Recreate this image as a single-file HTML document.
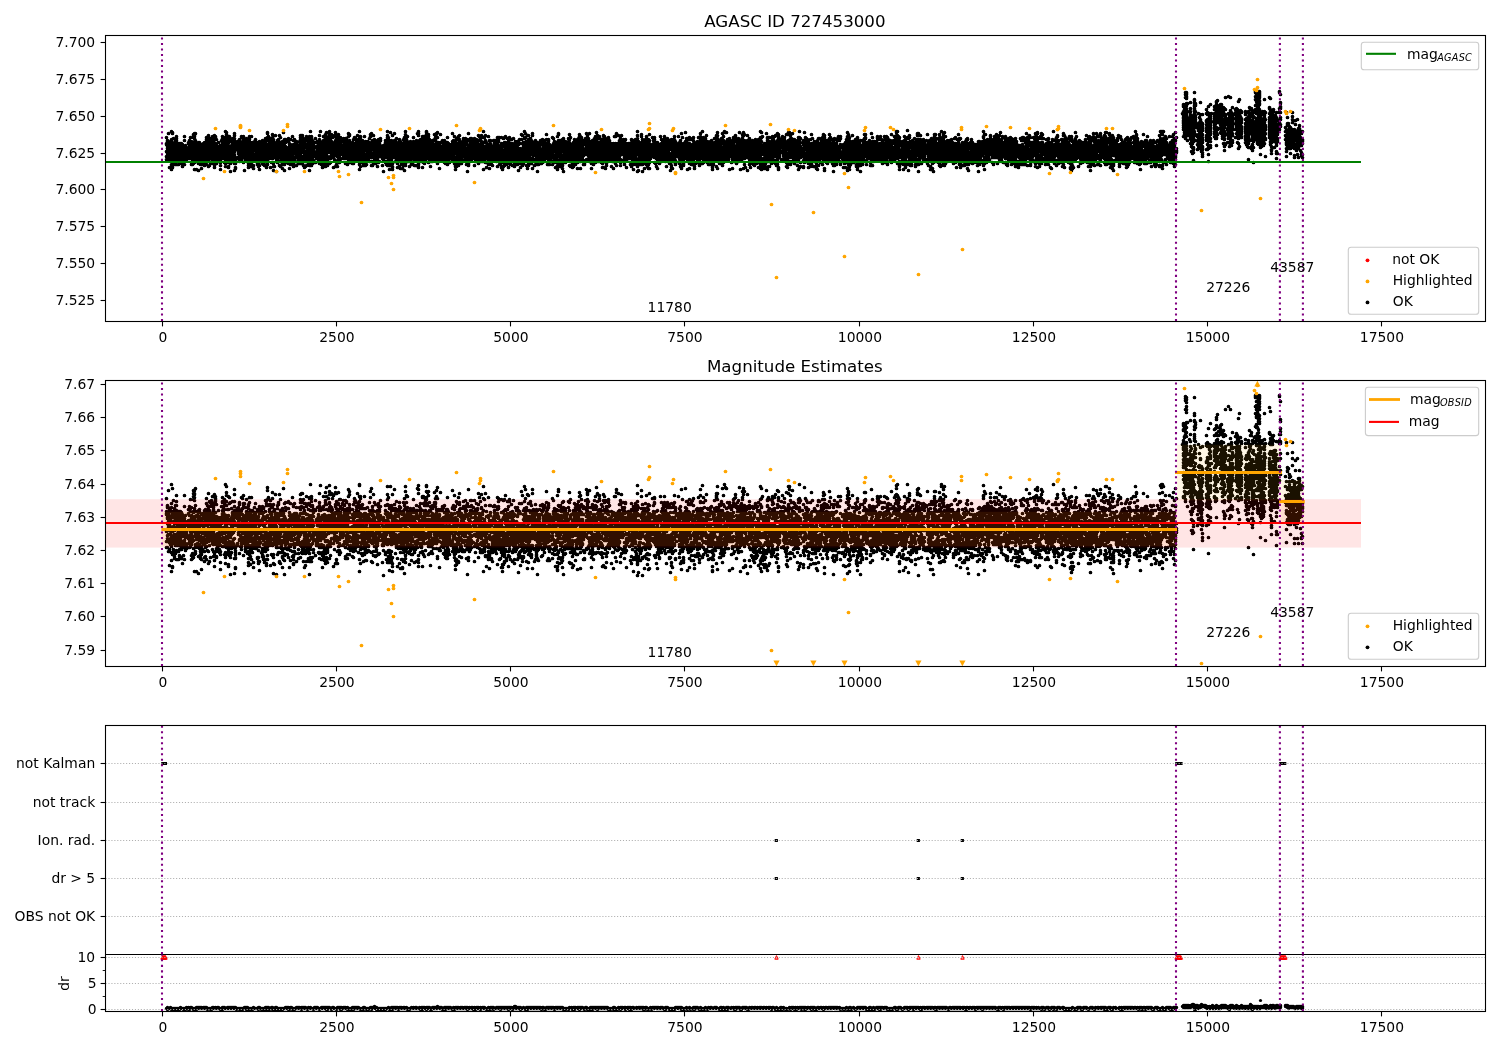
<!DOCTYPE html>
<html><head><meta charset="utf-8"><title>AGASC ID 727453000</title>
<style>html,body{margin:0;padding:0;background:#fff}svg{display:block}</style></head>
<body>
<svg width="1500" height="1050" viewBox="0 0 1500 1050" font-family="DejaVu Sans, Liberation Sans, sans-serif" font-size="13.89px" fill="#000" style="will-change:transform">
<rect width="1500" height="1050" fill="#fff"/>
<defs><clipPath id="c1"><rect x="105.5" y="35.5" width="1380.0" height="286.0"/></clipPath><clipPath id="c2"><rect x="105.5" y="380.5" width="1380.0" height="286.0"/></clipPath><clipPath id="c3"><rect x="105.5" y="725.5" width="1380.0" height="286.0"/></clipPath></defs>
<g clip-path="url(#c1)">
<path transform="translate(.5 .5)" d="m166 137h0m0 6h0m0 1h0m0 7h0m0 5h0m0 3h0m1-19h0m0 1h0m0 4h0m0 1h0m0 2h0m0 5h0m0 2h0m0 4h0m1-26h0m0 8h0m0 3h0m0 2h0m0 4h0m0 3h0m0 3h0m0 4h0m1-14h0m0 1h0m0 1h0m0 7h0m0 5h0m0 7h0m1-24h0m0 3h0m0 3h0m0 1h0m0 1h0m0 1h0m0 3h0m0 2h0m1-26h0m0 8h0m0 2h0m0 4h0m0 12h0m0 1h0m0 3h0m0 3h0m0 5h0m1-37h0m0 1h0m0 10h0m0 1h0m0 12h0m0 5h0m0 1h0m0 5h0m1-29h0m0 9h0m0 2h0m0 1h0m0 3h0m0 4h0m0 3h0m1-18h0m0 1h0m0 2h0m0 2h0m0 1h0m0 3h0m0 2h0m0 10h0m0 1h0m1-24h0m0 6h0m0 8h0m0 7h0m1-25h0m0 2h0m0 2h0m0 2h0m0 13h0m0 1h0m0 2h0m0 2h0m0 4h0m1-21h0m0 2h0m0 4h0m0 3h0m0 3h0m0 3h0m1-15h0m0 1h0m0 3h0m0 1h0m0 7h0m0 9h0m1-21h0m0 11h0m0 3h0m0 3h0m0 2h0m0 1h0m1-20h0m0 1h0m0 1h0m0 1h0m0 5h0m0 3h0m0 1h0m1-12h0m0 4h0m0 1h0m0 1h0m0 3h0m0 6h0m0 1h0m0 1h0m0 3h0m1-19h0m0 1h0m0 3h0m0 1h0m0 1h0m0 1h0m0 3h0m0 12h0m1-17h0m0 2h0m0 6h0m0 2h0m0 3h0m1-26h0m0 4h0m0 6h0m0 7h0m0 3h0m0 8h0m1-19h0m0 2h0m0 2h0m0 1h0m0 4h0m0 3h0m0 1h0m0 2h0m1-12h0m0 1h0m0 2h0m0 1h0m0 1h0m0 5h0m0 1h0m2-17h0m0 1h0m0 4h0m0 2h0m0 1h0m0 4h0m0 1h0m1-15h0m0 2h0m0 4h0m0 3h0m0 4h0m0 1h0m0 1h0m0 3h0m1-21h0m0 6h0m0 6h0m0 1h0m0 1h0m0 3h0m0 4h0m1-17h0m0 3h0m0 6h0m0 7h0m0 5h0m0 2h0m1-18h0m0 2h0m0 3h0m0 5h0m0 5h0m0 3h0m1-30h0m0 1h0m0 1h0m0 1h0m0 6h0m0 11h0m0 5h0m0 4h0m1-30h0m0 2h0m0 1h0m0 2h0m0 3h0m0 4h0m0 1h0m0 1h0m0 7h0m0 8h0m0 7h0m1-36h0m0 7h0m0 5h0m0 3h0m0 2h0m0 3h0m0 4h0m0 1h0m0 3h0m1-18h0m0 6h0m0 1h0m0 8h0m0 11h0m1-23h0m0 2h0m0 1h0m0 3h0m0 2h0m1-12h0m0 11h0m0 2h0m0 4h0m0 4h0m0 7h0m1-28h0m0 3h0m0 1h0m0 2h0m0 6h0m0 3h0m1-6h0m0 3h0m0 1h0m0 5h0m0 3h0m0 1h0m1-20h0m0 2h0m0 3h0m0 9h0m0 4h0m0 2h0m0 4h0m1-24h0m0 2h0m0 6h0m0 2h0m0 6h0m1-17h0m0 2h0m0 4h0m0 1h0m0 4h0m0 2h0m1-14h0m0 9h0m0 4h0m0 1h0m0 1h0m0 3h0m0 3h0m0 2h0m1-23h0m0 1h0m0 5h0m0 4h0m0 1h0m0 6h0m0 4h0m1-26h0m0 2h0m0 5h0m0 3h0m0 1h0m0 5h0m0 2h0m0 3h0m0 6h0m1-24h0m0 3h0m0 3h0m0 3h0m0 6h0m0 5h0m1-25h0m0 10h0m0 5h0m0 2h0m0 8h0m0 6h0m1-28h0m0 3h0m0 3h0m0 8h0m0 2h0m0 4h0m0 7h0m1-27h0m0 5h0m0 5h0m0 3h0m0 4h0m0 8h0m1-25h0m0 2h0m0 6h0m0 2h0m0 1h0m0 1h0m0 5h0m1-19h0m0 13h0m0 1h0m0 1h0m0 1h0m0 5h0m0 3h0m1-19h0m0 2h0m0 1h0m0 3h0m0 6h0m0 1h0m0 3h0m0 3h0m0 3h0m1-28h0m0 3h0m0 5h0m0 5h0m0 2h0m0 5h0m0 7h0m0 3h0m0 2h0m1-31h0m0 1h0m0 6h0m0 2h0m0 3h0m0 1h0m0 6h0m0 6h0m1-22h0m0 6h0m0 5h0m0 3h0m0 1h0m0 1h0m0 2h0m0 2h0m0 3h0m0 1h0m1-17h0m0 7h0m0 1h0m0 4h0m1-16h0m0 4h0m0 2h0m0 2h0m0 3h0m1-6h0m0 2h0m0 3h0m0 4h0m0 3h0m0 2h0m1-16h0m0 3h0m0 10h0m0 3h0m0 1h0m0 3h0m0 4h0m1-29h0m0 8h0m0 4h0m0 1h0m1-17h0m0 2h0m0 4h0m0 1h0m0 2h0m0 5h0m0 6h0m0 2h0m1-17h0m0 1h0m0 6h0m0 2h0m0 2h0m0 5h0m0 1h0m1-21h0m0 1h0m0 4h0m0 2h0m0 2h0m0 9h0m0 7h0m1-31h0m0 13h0m0 2h0m0 2h0m0 9h0m0 4h0m0 2h0m0 3h0m1-34h0m0 2h0m0 2h0m0 2h0m0 2h0m0 5h0m0 5h0m0 2h0m0 6h0m0 4h0m1-20h0m0 4h0m0 9h0m0 2h0m0 5h0m1-26h0m0 6h0m0 3h0m0 3h0m0 2h0m0 9h0m0 7h0m0 1h0m1-31h0m0 3h0m0 7h0m0 5h0m0 3h0m0 4h0m0 3h0m0 1h0m1-23h0m0 8h0m0 1h0m0 9h0m0 5h0m0 1h0m0 8h0m1-30h0m0 4h0m0 3h0m0 4h0m0 1h0m0 5h0m0 3h0m1-23h0m0 5h0m0 3h0m0 3h0m0 7h0m1-13h0m0 1h0m0 3h0m0 2h0m0 2h0m0 6h0m0 1h0m0 1h0m1-26h0m0 2h0m0 3h0m0 2h0m0 2h0m0 1h0m0 4h0m0 4h0m0 3h0m0 1h0m0 3h0m0 5h0m0 7h0m1-28h0m0 3h0m0 3h0m0 1h0m0 10h0m0 1h0m0 1h0m0 1h0m0 1h0m0 4h0m0 1h0m2-27h0m0 3h0m0 4h0m0 9h0m0 1h0m1-17h0m0 3h0m0 1h0m0 6h0m0 1h0m0 1h0m1-14h0m0 7h0m0 4h0m0 1h0m0 4h0m0 1h0m0 5h0m1-15h0m0 2h0m0 5h0m0 2h0m0 3h0m1-22h0m0 6h0m0 2h0m0 13h0m0 2h0m1-22h0m0 4h0m0 3h0m0 3h0m0 3h0m0 1h0m0 1h0m0 3h0m0 1h0m1-20h0m0 3h0m0 1h0m0 5h0m0 1h0m0 11h0m0 5h0m1-23h0m0 2h0m0 10h0m0 3h0m0 1h0m0 1h0m0 14h0m1-29h0m0 3h0m0 2h0m0 3h0m0 6h0m0 3h0m0 1h0m0 1h0m1-22h0m0 5h0m0 4h0m0 3h0m0 1h0m0 2h0m0 1h0m0 3h0m0 1h0m1-12h0m0 4h0m0 5h0m0 6h0m1-20h0m0 2h0m0 9h0m0 7h0m0 2h0m0 2h0m0 2h0m0 2h0m1-31h0m0 3h0m0 7h0m0 2h0m0 2h0m0 1h0m0 4h0m0 1h0m1-14h0m0 6h0m0 1h0m0 2h0m0 4h0m0 4h0m0 4h0m0 3h0m1-30h0m0 7h0m0 3h0m0 6h0m0 2h0m0 6h0m0 4h0m1-22h0m0 3h0m0 1h0m0 3h0m0 3h0m0 4h0m0 1h0m0 1h0m0 1h0m0 2h0m1-17h0m0 4h0m0 2h0m0 6h0m0 2h0m0 7h0m0 3h0m1-27h0m0 5h0m0 3h0m0 1h0m0 4h0m0 4h0m1-19h0m0 5h0m0 10h0m0 5h0m1-13h0m0 2h0m0 3h0m0 1h0m0 3h0m0 4h0m1-17h0m0 1h0m0 4h0m0 4h0m0 2h0m0 3h0m0 2h0m0 5h0m0 1h0m1-21h0m0 2h0m0 5h0m0 5h0m0 5h0m0 3h0m0 3h0m1-25h0m0 3h0m0 2h0m0 5h0m0 1h0m0 4h0m0 1h0m0 1h0m0 7h0m0 4h0m1-27h0m0 7h0m0 7h0m1-2h0m0 7h0m1-21h0m0 4h0m0 2h0m0 1h0m0 1h0m0 3h0m0 1h0m0 7h0m0 3h0m0 1h0m1-22h0m0 2h0m0 2h0m0 1h0m0 3h0m0 2h0m0 4h0m0 1h0m0 1h0m0 6h0m0 1h0m1-19h0m0 3h0m0 3h0m0 3h0m0 3h0m0 2h0m0 6h0m1-27h0m0 5h0m0 3h0m0 2h0m0 8h0m0 4h0m1-22h0m0 1h0m0 1h0m0 10h0m0 1h0m0 13h0m0 2h0m0 1h0m1-35h0m0 1h0m0 4h0m0 7h0m0 1h0m0 2h0m0 6h0m0 2h0m0 3h0m0 2h0m0 2h0m0 2h0m1-28h0m0 1h0m0 3h0m0 15h0m0 1h0m1-16h0m0 2h0m0 1h0m0 3h0m0 1h0m0 2h0m0 3h0m0 2h0m0 4h0m1-20h0m0 10h0m0 2h0m0 2h0m0 4h0m0 11h0m1-24h0m0 3h0m0 2h0m0 2h0m0 12h0m1-28h0m0 3h0m0 3h0m0 6h0m0 1h0m0 2h0m0 1h0m0 3h0m0 2h0m0 2h0m0 1h0m0 4h0m1-23h0m0 4h0m0 19h0m0 1h0m0 3h0m0 4h0m1-28h0m0 1h0m0 3h0m0 1h0m0 3h0m0 1h0m0 3h0m0 2h0m0 1h0m0 9h0m1-31h0m0 9h0m0 11h0m1-11h0m0 3h0m0 2h0m0 2h0m0 7h0m0 1h0m0 12h0m1-31h0m0 1h0m0 3h0m0 1h0m0 6h0m0 3h0m0 2h0m0 3h0m0 3h0m1-23h0m0 1h0m0 5h0m0 2h0m0 7h0m0 2h0m0 5h0m1-26h0m0 9h0m0 4h0m0 4h0m0 2h0m0 3h0m0 4h0m0 4h0m1-28h0m0 5h0m0 1h0m0 6h0m0 1h0m0 2h0m0 1h0m0 1h0m0 12h0m1-19h0m0 5h0m0 3h0m0 3h0m0 1h0m0 2h0m1-20h0m0 1h0m0 3h0m0 1h0m0 2h0m0 8h0m0 4h0m0 2h0m0 1h0m0 5h0m1-36h0m0 12h0m0 2h0m0 2h0m0 2h0m0 1h0m0 3h0m0 2h0m0 8h0m1-25h0m0 6h0m0 9h0m0 1h0m0 4h0m0 3h0m0 2h0m0 6h0m1-31h0m0 2h0m0 1h0m0 4h0m0 2h0m0 3h0m0 5h0m1-15h0m0 7h0m0 3h0m0 11h0m1-21h0m0 9h0m0 1h0m0 2h0m0 3h0m0 3h0m0 1h0m1-22h0m0 3h0m0 6h0m0 1h0m0 2h0m0 1h0m0 4h0m0 8h0m1-20h0m0 1h0m0 2h0m0 22h0m1-29h0m0 5h0m0 5h0m0 3h0m0 1h0m0 1h0m0 4h0m0 2h0m0 4h0m1-19h0m0 4h0m0 5h0m0 1h0m1-19h0m0 11h0m0 3h0m0 2h0m0 3h0m0 1h0m0 1h0m0 3h0m0 3h0m1-23h0m0 4h0m0 7h0m0 9h0m0 2h0m0 1h0m0 1h0m0 2h0m1-27h0m0 5h0m0 5h0m0 4h0m0 4h0m0 2h0m1-16h0m0 1h0m0 2h0m0 2h0m0 5h0m0 8h0m1-20h0m0 2h0m0 1h0m0 5h0m0 1h0m0 1h0m0 4h0m0 2h0m0 8h0m1-20h0m0 1h0m0 4h0m0 1h0m0 3h0m0 1h0m1-10h0m0 6h0m0 4h0m0 2h0m0 2h0m0 2h0m0 2h0m1-22h0m0 4h0m0 1h0m0 3h0m0 3h0m0 1h0m0 1h0m0 2h0m0 1h0m1-22h0m0 2h0m0 2h0m0 3h0m0 1h0m0 4h0m0 4h0m0 2h0m0 5h0m0 5h0m1-28h0m0 6h0m0 7h0m0 2h0m0 2h0m0 9h0m1-26h0m0 10h0m0 11h0m0 1h0m0 2h0m0 3h0m1-24h0m0 5h0m0 6h0m0 3h0m0 6h0m0 1h0m0 6h0m1-26h0m0 3h0m0 4h0m0 6h0m0 3h0m0 1h0m0 1h0m0 10h0m1-28h0m0 5h0m0 2h0m0 1h0m0 4h0m0 1h0m0 1h0m0 1h0m0 7h0m0 5h0m1-30h0m0 4h0m0 4h0m0 2h0m0 8h0m0 6h0m0 5h0m1-25h0m0 4h0m0 2h0m0 3h0m0 1h0m0 4h0m0 3h0m0 4h0m1-22h0m0 3h0m0 7h0m0 4h0m0 4h0m0 2h0m0 1h0m0 4h0m1-28h0m0 4h0m0 5h0m0 6h0m0 4h0m0 6h0m0 4h0m0 5h0m1-39h0m0 9h0m0 5h0m0 2h0m0 3h0m0 1h0m0 7h0m0 1h0m1-23h0m0 1h0m0 1h0m0 3h0m0 3h0m0 2h0m0 8h0m0 3h0m0 6h0m0 2h0m1-25h0m0 5h0m0 2h0m0 3h0m0 4h0m0 3h0m0 6h0m1-21h0m0 1h0m0 2h0m0 3h0m0 1h0m0 3h0m0 3h0m0 1h0m0 4h0m0 1h0m1-19h0m1-4h0m0 4h0m0 20h0m1-16h0m0 1h0m0 4h0m0 1h0m0 1h0m0 2h0m0 3h0m1-17h0m0 5h0m0 1h0m0 1h0m0 1h0m0 1h0m1-9h0m0 3h0m0 10h0m0 3h0m0 4h0m1-26h0m0 4h0m0 1h0m0 1h0m0 1h0m0 11h0m0 2h0m0 4h0m0 2h0m0 2h0m1-32h0m0 10h0m0 4h0m0 1h0m0 1h0m0 2h0m0 2h0m0 4h0m1-4h0m0 2h0m0 2h0m0 3h0m0 1h0m0 5h0m1-20h0m0 4h0m0 4h0m0 9h0m0 1h0m0 5h0m1-31h0m0 4h0m0 2h0m0 3h0m0 3h0m0 1h0m0 1h0m0 5h0m0 3h0m1-5h0m0 5h0m0 1h0m0 5h0m1-30h0m0 4h0m0 6h0m0 4h0m0 3h0m0 10h0m0 5h0m1-34h0m0 4h0m0 3h0m0 3h0m0 3h0m0 2h0m0 4h0m0 2h0m0 3h0m0 7h0m1-16h0m0 2h0m0 1h0m0 1h0m0 5h0m0 2h0m0 2h0m0 1h0m0 4h0m1-28h0m0 5h0m0 8h0m0 1h0m0 1h0m0 6h0m1-27h0m0 3h0m0 1h0m0 3h0m0 3h0m0 3h0m0 19h0m1-23h0m0 5h0m0 3h0m0 2h0m0 2h0m0 4h0m0 1h0m0 1h0m0 4h0m1-28h0m0 1h0m0 6h0m0 2h0m0 8h0m0 1h0m0 3h0m1-20h0m0 2h0m0 5h0m0 9h0m0 1h0m1-16h0m0 8h0m0 1h0m0 1h0m0 3h0m0 1h0m0 1h0m0 1h0m0 5h0m0 10h0m1-22h0m0 2h0m0 1h0m0 6h0m0 1h0m0 4h0m1-27h0m0 2h0m0 1h0m0 5h0m0 3h0m0 3h0m0 3h0m0 2h0m0 4h0m0 11h0m1-31h0m0 3h0m0 3h0m0 6h0m0 7h0m0 10h0m1-25h0m0 1h0m0 2h0m0 1h0m0 8h0m0 4h0m0 1h0m0 4h0m0 6h0m1-32h0m0 8h0m0 2h0m0 2h0m0 4h0m0 4h0m0 4h0m0 2h0m1-23h0m0 11h0m0 9h0m0 5h0m1-25h0m0 3h0m0 3h0m0 2h0m0 2h0m0 2h0m0 3h0m0 2h0m0 4h0m0 3h0m1-20h0m0 5h0m0 4h0m0 3h0m0 1h0m1-13h0m0 4h0m0 8h0m0 1h0m1-16h0m0 9h0m0 1h0m0 4h0m0 5h0m0 1h0m1-18h0m0 3h0m0 4h0m0 1h0m0 2h0m0 3h0m0 4h0m1-19h0m0 8h0m0 10h0m0 2h0m0 5h0m1-25h0m0 1h0m0 4h0m0 5h0m0 2h0m0 1h0m0 3h0m1-13h0m0 9h0m0 4h0m0 1h0m0 2h0m0 5h0m0 2h0m1-31h0m0 3h0m0 6h0m0 3h0m0 1h0m0 10h0m0 3h0m1-25h0m0 1h0m0 5h0m0 3h0m0 2h0m0 2h0m0 5h0m0 10h0m1-12h0m0 4h0m0 2h0m0 2h0m0 2h0m2-18h0m0 2h0m0 3h0m0 4h0m0 1h0m0 3h0m0 1h0m0 3h0m0 4h0m1-24h0m0 9h0m0 4h0m0 8h0m0 3h0m1-26h0m0 1h0m0 5h0m0 2h0m0 11h0m0 3h0m1-21h0m0 5h0m0 2h0m0 3h0m0 3h0m0 2h0m0 2h0m0 5h0m1-21h0m0 1h0m0 4h0m0 4h0m0 1h0m0 1h0m0 4h0m0 2h0m0 2h0m1-23h0m0 16h0m0 5h0m0 1h0m0 1h0m1-15h0m0 2h0m0 5h0m0 2h0m0 9h0m1-30h0m0 5h0m0 2h0m0 3h0m0 4h0m0 2h0m0 2h0m0 1h0m0 4h0m0 2h0m0 8h0m0 5h0m1-33h0m0 1h0m0 3h0m0 8h0m0 6h0m0 4h0m0 2h0m0 6h0m1-26h0m0 4h0m0 7h0m0 1h0m0 1h0m0 4h0m0 4h0m1-21h0m0 1h0m0 4h0m0 2h0m0 15h0m1-17h0m0 4h0m0 3h0m0 2h0m0 5h0m0 6h0m1-29h0m0 8h0m0 2h0m0 1h0m0 9h0m0 1h0m0 5h0m1-21h0m0 3h0m0 6h0m0 4h0m0 2h0m0 4h0m0 5h0m1-20h0m0 1h0m0 2h0m0 2h0m0 7h0m0 3h0m0 1h0m0 3h0m1-23h0m0 11h0m1-8h0m0 3h0m0 5h0m0 1h0m0 1h0m0 1h0m0 3h0m0 2h0m1-22h0m0 4h0m0 2h0m0 6h0m0 1h0m0 4h0m0 6h0m1-27h0m0 2h0m0 7h0m0 3h0m0 3h0m0 2h0m0 1h0m0 3h0m1-22h0m0 16h0m0 8h0m0 4h0m0 4h0m1-25h0m0 2h0m0 2h0m0 4h0m0 1h0m0 4h0m0 2h0m0 2h0m0 8h0m1-30h0m0 10h0m0 9h0m0 2h0m0 5h0m0 1h0m1-23h0m0 4h0m0 4h0m0 4h0m0 5h0m0 2h0m1-18h0m0 9h0m0 5h0m0 9h0m1-18h0m0 3h0m0 1h0m0 3h0m0 1h0m0 3h0m0 3h0m0 1h0m0 2h0m1-20h0m0 15h0m0 1h0m0 8h0m1-27h0m0 1h0m0 4h0m0 2h0m0 3h0m0 5h0m0 8h0m1-20h0m0 1h0m0 2h0m0 1h0m0 1h0m0 3h0m0 1h0m0 1h0m0 1h0m0 3h0m0 5h0m1-23h0m0 2h0m0 5h0m0 9h0m2-8h0m0 3h0m0 2h0m0 2h0m0 4h0m0 1h0m0 7h0m1-20h0m0 5h0m0 3h0m0 1h0m0 2h0m0 4h0m0 11h0m1-22h0m0 2h0m0 1h0m0 2h0m0 2h0m0 1h0m1-17h0m0 2h0m0 1h0m0 3h0m0 3h0m0 2h0m0 2h0m0 4h0m0 4h0m0 1h0m1-19h0m0 9h0m0 1h0m0 8h0m0 3h0m1-33h0m0 4h0m0 2h0m0 3h0m0 3h0m0 2h0m0 5h0m0 6h0m0 1h0m0 8h0m1-28h0m0 3h0m0 7h0m0 1h0m0 2h0m0 2h0m0 3h0m0 2h0m0 3h0m0 4h0m1-24h0m0 1h0m0 3h0m0 1h0m0 11h0m0 4h0m0 1h0m0 4h0m0 4h0m1-37h0m0 16h0m0 1h0m0 1h0m0 2h0m0 2h0m0 8h0m1-22h0m0 5h0m0 9h0m0 1h0m0 3h0m0 2h0m0 3h0m0 1h0m0 1h0m1-30h0m0 7h0m0 3h0m0 3h0m0 5h0m0 10h0m0 3h0m0 1h0m0 2h0m1-28h0m0 4h0m0 1h0m0 5h0m0 5h0m1-23h0m0 7h0m0 2h0m0 6h0m0 2h0m0 6h0m0 1h0m1-16h0m0 4h0m0 8h0m0 8h0m1-23h0m0 4h0m0 4h0m0 1h0m0 1h0m0 2h0m0 3h0m0 2h0m0 3h0m0 1h0m1-15h0m0 4h0m0 1h0m0 2h0m0 3h0m0 5h0m0 4h0m0 4h0m1-25h0m0 2h0m0 1h0m0 2h0m0 1h0m0 6h0m0 2h0m0 3h0m1-20h0m0 1h0m0 4h0m0 4h0m0 5h0m0 3h0m0 2h0m0 8h0m1-25h0m0 5h0m0 4h0m0 1h0m0 3h0m0 2h0m0 2h0m0 3h0m0 7h0m1-21h0m0 4h0m0 2h0m0 2h0m0 9h0m1-21h0m0 1h0m0 7h0m0 1h0m0 1h0m0 11h0m0 4h0m1-29h0m0 4h0m0 5h0m0 4h0m0 4h0m0 3h0m0 2h0m0 4h0m1-28h0m0 5h0m0 3h0m0 3h0m0 5h0m0 12h0m0 5h0m1-39h0m0 3h0m0 7h0m0 3h0m0 4h0m0 2h0m0 2h0m0 3h0m0 3h0m0 4h0m0 1h0m0 2h0m1-29h0m0 3h0m0 5h0m0 2h0m0 7h0m0 6h0m0 1h0m1-24h0m0 5h0m0 1h0m0 1h0m0 2h0m0 4h0m0 6h0m0 3h0m0 3h0m1-14h0m0 2h0m0 3h0m0 1h0m1-10h0m0 3h0m0 2h0m0 4h0m0 3h0m0 3h0m0 2h0m0 1h0m0 5h0m1-25h0m0 2h0m0 1h0m0 1h0m0 1h0m0 6h0m0 1h0m0 2h0m0 5h0m1-17h0m0 6h0m0 7h0m0 6h0m0 2h0m1-22h0m0 3h0m0 3h0m0 1h0m0 2h0m0 1h0m0 1h0m0 2h0m0 3h0m0 4h0m1-25h0m0 4h0m0 2h0m1-1h0m0 4h0m0 3h0m0 2h0m0 9h0m0 1h0m0 4h0m1-16h0m0 5h0m0 2h0m0 1h0m0 3h0m1-20h0m0 2h0m0 1h0m0 5h0m0 3h0m0 1h0m0 6h0m0 7h0m1-32h0m0 12h0m0 5h0m0 1h0m0 3h0m0 5h0m1-28h0m0 2h0m0 2h0m0 10h0m0 5h0m0 7h0m0 5h0m0 2h0m0 2h0m0 1h0m1-27h0m0 2h0m0 6h0m0 3h0m0 1h0m0 1h0m0 2h0m0 2h0m1-18h0m0 2h0m0 4h0m0 5h0m0 1h0m0 2h0m0 1h0m0 4h0m0 3h0m1-19h0m0 6h0m0 3h0m0 1h0m0 6h0m1-22h0m0 9h0m0 1h0m0 4h0m0 4h0m0 3h0m0 3h0m0 7h0m1-31h0m0 3h0m0 6h0m0 2h0m0 1h0m0 5h0m0 2h0m0 7h0m1-26h0m0 4h0m0 3h0m0 1h0m0 4h0m0 9h0m0 6h0m1-26h0m0 2h0m0 3h0m0 6h0m0 1h0m0 3h0m0 1h0m0 2h0m0 5h0m1-29h0m0 1h0m0 2h0m0 6h0m0 7h0m0 1h0m1-9h0m0 1h0m0 3h0m0 2h0m0 3h0m0 8h0m0 1h0m1-23h0m0 2h0m0 8h0m0 7h0m0 1h0m0 2h0m0 4h0m0 4h0m1-23h0m0 3h0m0 4h0m0 3h0m0 2h0m0 1h0m0 3h0m0 2h0m0 1h0m0 3h0m1-18h0m0 9h0m0 1h0m0 5h0m0 8h0m1-25h0m0 4h0m0 2h0m0 1h0m0 1h0m0 1h0m0 7h0m0 4h0m1-21h0m0 1h0m0 4h0m0 9h0m0 7h0m1-17h0m0 1h0m0 1h0m0 4h0m0 1h0m0 4h0m0 1h0m0 3h0m1-25h0m0 5h0m0 1h0m0 4h0m0 4h0m0 6h0m0 3h0m1-20h0m0 2h0m0 1h0m0 4h0m0 6h0m0 2h0m1-19h0m0 3h0m0 6h0m0 5h0m0 10h0m0 2h0m1-27h0m0 5h0m0 5h0m0 2h0m0 1h0m0 5h0m0 5h0m0 8h0m1-21h0m0 5h0m0 3h0m0 1h0m0 1h0m1-8h0m0 2h0m0 5h0m0 2h0m0 3h0m0 3h0m0 1h0m0 8h0m1-34h0m0 8h0m0 4h0m0 1h0m0 1h0m0 2h0m0 3h0m0 1h0m0 6h0m1-14h0m0 2h0m1-8h0m0 1h0m0 1h0m0 5h0m0 5h0m0 2h0m0 3h0m1-16h0m0 4h0m0 5h0m0 9h0m0 2h0m1-21h0m0 3h0m0 4h0m0 2h0m0 5h0m0 2h0m0 1h0m0 5h0m1-19h0m0 9h0m0 8h0m0 1h0m0 2h0m1-21h0m0 2h0m0 2h0m0 3h0m0 1h0m0 3h0m0 3h0m0 5h0m1-24h0m0 5h0m0 1h0m0 9h0m0 7h0m0 2h0m0 3h0m1-21h0m0 11h0m0 1h0m0 4h0m0 1h0m1-16h0m0 2h0m0 1h0m0 2h0m0 2h0m0 1h0m0 2h0m0 1h0m0 1h0m0 1h0m0 5h0m2-18h0m0 5h0m0 3h0m0 6h0m1-25h0m0 8h0m0 4h0m0 2h0m0 8h0m0 1h0m0 4h0m1-20h0m0 7h0m0 3h0m0 1h0m0 2h0m0 1h0m0 1h0m0 4h0m0 1h0m1-24h0m0 7h0m0 3h0m0 12h0m0 3h0m0 1h0m0 1h0m1-22h0m0 4h0m0 3h0m0 3h0m0 2h0m0 4h0m0 7h0m0 1h0m0 1h0m0 3h0m1-31h0m0 19h0m0 2h0m0 2h0m0 3h0m0 1h0m0 1h0m1-27h0m0 4h0m0 4h0m0 5h0m0 1h0m0 1h0m0 1h0m1-19h0m0 3h0m0 5h0m0 4h0m0 1h0m0 8h0m0 3h0m0 5h0m1-30h0m0 4h0m0 1h0m0 2h0m0 1h0m0 10h0m0 7h0m0 3h0m1-22h0m0 4h0m0 4h0m0 3h0m0 3h0m0 4h0m0 1h0m1-16h0m0 3h0m0 11h0m0 5h0m1-15h0m0 2h0m0 5h0m0 1h0m0 4h0m1-22h0m0 2h0m0 1h0m0 3h0m0 2h0m0 1h0m0 1h0m0 4h0m0 4h0m0 4h0m1-19h0m0 5h0m0 3h0m0 1h0m0 4h0m0 6h0m1-22h0m0 4h0m0 6h0m0 2h0m0 3h0m0 1h0m0 2h0m0 2h0m1-18h0m0 1h0m0 1h0m0 2h0m0 4h0m0 2h0m0 2h0m0 8h0m0 4h0m1-25h0m0 5h0m0 4h0m0 1h0m0 1h0m0 6h0m0 2h0m0 13h0m1-38h0m0 7h0m0 6h0m0 6h0m0 3h0m0 3h0m0 5h0m0 1h0m0 1h0m1-21h0m0 3h0m0 11h0m0 2h0m1-22h0m0 4h0m0 2h0m0 3h0m0 3h0m0 3h0m0 1h0m0 3h0m0 1h0m0 2h0m1-22h0m0 2h0m0 5h0m0 6h0m0 2h0m0 1h0m0 2h0m0 1h0m0 2h0m1-17h0m1-1h0m0 7h0m0 1h0m0 1h0m0 6h0m1-18h0m0 7h0m0 5h0m0 1h0m0 2h0m0 5h0m0 7h0m1-23h0m0 1h0m0 5h0m0 1h0m0 1h0m0 3h0m0 8h0m1-22h0m0 4h0m0 4h0m0 4h0m0 3h0m0 3h0m1-15h0m0 4h0m0 6h0m0 4h0m0 3h0m1-24h0m0 5h0m0 8h0m0 3h0m0 3h0m0 4h0m0 5h0m1-27h0m0 8h0m0 1h0m0 2h0m0 1h0m0 5h0m0 1h0m0 3h0m1-19h0m0 10h0m0 2h0m0 2h0m0 8h0m0 1h0m1-26h0m0 6h0m0 9h0m0 1h0m0 2h0m1-10h0m0 1h0m0 2h0m0 2h0m0 8h0m0 1h0m0 1h0m0 3h0m1-30h0m0 6h0m0 5h0m0 6h0m0 4h0m0 1h0m0 3h0m0 2h0m0 2h0m0 9h0m1-32h0m0 9h0m0 1h0m0 2h0m0 7h0m0 1h0m0 2h0m0 1h0m0 1h0m1-26h0m0 5h0m0 12h0m0 3h0m0 1h0m0 2h0m0 4h0m1-20h0m0 3h0m0 3h0m0 1h0m0 2h0m0 1h0m0 2h0m0 1h0m0 12h0m2-31h0m0 8h0m0 1h0m0 3h0m0 7h0m0 3h0m0 2h0m0 2h0m0 2h0m1-24h0m0 4h0m0 3h0m0 3h0m0 1h0m0 2h0m0 2h0m0 6h0m0 7h0m1-28h0m0 3h0m0 2h0m0 3h0m0 1h0m0 9h0m0 3h0m1-9h0m0 2h0m0 10h0m1-17h0m0 1h0m0 3h0m0 1h0m0 5h0m0 3h0m0 1h0m0 4h0m1-25h0m0 5h0m0 1h0m0 1h0m0 7h0m0 2h0m0 3h0m1-19h0m0 2h0m0 1h0m0 1h0m0 3h0m0 3h0m0 7h0m0 3h0m1-20h0m0 3h0m0 4h0m0 5h0m0 2h0m0 6h0m1-12h0m0 2h0m0 3h0m0 1h0m0 3h0m0 4h0m1-24h0m0 5h0m0 2h0m0 4h0m0 3h0m0 4h0m0 4h0m0 7h0m1-29h0m0 1h0m0 2h0m0 1h0m0 4h0m0 1h0m0 4h0m0 4h0m0 2h0m1-19h0m0 12h0m0 3h0m0 1h0m0 2h0m0 4h0m0 1h0m0 4h0m1-15h0m0 3h0m0 1h0m0 3h0m0 7h0m1-26h0m0 6h0m0 3h0m0 1h0m0 1h0m0 19h0m1-21h0m0 5h0m0 2h0m0 3h0m0 1h0m0 1h0m0 1h0m0 2h0m0 1h0m0 4h0m0 2h0m0 1h0m1-31h0m0 5h0m0 3h0m0 4h0m0 1h0m0 1h0m0 14h0m1-29h0m0 5h0m0 3h0m0 6h0m0 3h0m0 8h0m0 1h0m0 2h0m1-29h0m0 6h0m0 6h0m0 2h0m0 7h0m0 3h0m1-15h0m0 3h0m0 1h0m0 1h0m0 6h0m0 2h0m0 6h0m1-26h0m0 6h0m0 9h0m1-12h0m0 6h0m0 4h0m0 1h0m0 3h0m0 5h0m0 1h0m0 1h0m0 5h0m1-30h0m0 1h0m0 6h0m0 4h0m0 5h0m0 2h0m0 3h0m0 2h0m0 3h0m1-20h0m0 1h0m0 4h0m0 8h0m0 1h0m0 7h0m1-25h0m0 4h0m0 4h0m0 1h0m0 3h0m0 1h0m0 1h0m1-10h0m0 2h0m0 1h0m0 10h0m0 4h0m0 1h0m0 4h0m1-27h0m0 6h0m0 1h0m0 2h0m0 3h0m0 6h0m0 2h0m1-14h0m0 7h0m0 2h0m0 2h0m0 4h0m0 5h0m0 2h0m1-25h0m0 3h0m0 6h0m0 7h0m0 1h0m0 3h0m1-19h0m0 5h0m0 1h0m0 12h0m1-19h0m0 3h0m0 1h0m0 3h0m0 4h0m0 3h0m0 1h0m0 3h0m0 5h0m1-22h0m0 2h0m0 4h0m0 2h0m0 4h0m0 8h0m0 1h0m0 7h0m1-31h0m0 4h0m0 5h0m0 4h0m0 1h0m0 5h0m0 5h0m1-20h0m0 5h0m0 1h0m0 6h0m0 1h0m0 4h0m0 7h0m1-33h0m0 5h0m0 10h0m0 6h0m0 1h0m0 4h0m0 3h0m1-28h0m0 15h0m0 1h0m0 1h0m0 5h0m0 8h0m1-23h0m0 2h0m0 2h0m0 8h0m0 2h0m0 7h0m1-32h0m0 7h0m0 4h0m0 4h0m0 1h0m0 3h0m0 8h0m0 3h0m1-28h0m0 4h0m0 6h0m0 1h0m0 2h0m0 7h0m0 5h0m0 2h0m1-19h0m0 11h0m0 2h0m0 2h0m0 2h0m0 1h0m0 6h0m1-30h0m0 7h0m0 3h0m0 4h0m0 1h0m0 4h0m0 4h0m0 10h0m1-33h0m0 4h0m0 9h0m0 2h0m0 2h0m0 4h0m0 2h0m0 2h0m0 2h0m0 3h0m1-23h0m0 3h0m0 2h0m0 1h0m0 3h0m0 1h0m0 4h0m1-18h0m0 1h0m0 8h0m0 7h0m0 6h0m1-20h0m0 3h0m0 2h0m0 9h0m0 4h0m0 4h0m0 1h0m1-30h0m0 2h0m0 7h0m0 6h0m0 1h0m0 2h0m0 7h0m0 1h0m0 9h0m1-26h0m0 1h0m0 1h0m0 3h0m0 4h0m0 4h0m1-5h0m0 3h0m0 6h0m0 6h0m1-25h0m0 3h0m0 3h0m0 1h0m0 2h0m0 2h0m0 4h0m0 4h0m0 5h0m1-22h0m0 5h0m0 3h0m0 8h0m0 3h0m0 1h0m0 1h0m1-21h0m0 2h0m0 10h0m0 1h0m0 1h0m0 3h0m0 5h0m0 7h0m1-25h0m0 6h0m0 2h0m0 3h0m0 3h0m0 4h0m1-22h0m0 2h0m0 2h0m0 2h0m0 2h0m0 4h0m0 4h0m1-18h0m0 4h0m0 6h0m0 2h0m0 5h0m1-15h0m0 2h0m0 5h0m0 4h0m0 1h0m0 1h0m0 4h0m0 4h0m1-24h0m0 1h0m0 3h0m0 5h0m0 7h0m0 5h0m0 2h0m1-17h0m0 1h0m0 4h0m0 5h0m0 2h0m0 3h0m1-20h0m0 1h0m0 6h0m0 1h0m0 2h0m0 2h0m0 3h0m0 6h0m1-17h0m0 11h0m0 2h0m0 1h0m1-24h0m0 5h0m0 4h0m0 2h0m0 1h0m0 12h0m1-14h0m0 5h0m0 1h0m0 1h0m0 1h0m0 1h0m0 2h0m0 9h0m1-25h0m0 1h0m0 1h0m0 9h0m0 6h0m0 3h0m0 5h0m1-20h0m0 2h0m0 3h0m0 4h0m0 1h0m0 4h0m0 2h0m0 4h0m1-19h0m0 2h0m0 5h0m0 4h0m0 3h0m2-22h0m0 12h0m0 4h0m0 4h0m0 4h0m0 3h0m1-26h0m0 5h0m0 2h0m0 2h0m0 3h0m0 5h0m1-14h0m0 1h0m0 1h0m0 1h0m0 5h0m0 2h0m0 4h0m0 1h0m0 3h0m0 1h0m0 2h0m1-20h0m0 8h0m0 1h0m0 16h0m1-25h0m0 4h0m0 7h0m0 2h0m0 1h0m0 2h0m0 1h0m1-23h0m0 8h0m0 1h0m0 4h0m0 2h0m0 10h0m0 1h0m0 3h0m0 2h0m0 2h0m1-36h0m0 1h0m0 6h0m0 2h0m0 3h0m0 3h0m0 5h0m0 7h0m0 1h0m0 2h0m1-23h0m0 6h0m0 2h0m0 6h0m0 2h0m0 7h0m0 3h0m1-26h0m0 6h0m0 2h0m0 2h0m0 3h0m0 5h0m0 2h0m1-19h0m0 3h0m0 13h0m0 1h0m0 6h0m0 1h0m1-26h0m0 10h0m0 2h0m0 4h0m0 5h0m0 3h0m0 2h0m0 3h0m1-30h0m0 3h0m0 1h0m0 5h0m0 1h0m0 3h0m0 11h0m0 9h0m1-27h0m0 5h0m0 4h0m0 3h0m0 3h0m0 3h0m1-21h0m0 5h0m0 8h0m0 8h0m1-13h0m0 3h0m1-8h0m0 13h0m0 2h0m1-21h0m0 3h0m0 6h0m0 3h0m0 4h0m0 1h0m0 4h0m1-25h0m0 5h0m0 3h0m0 9h0m0 2h0m0 3h0m0 9h0m1-28h0m0 8h0m0 11h0m0 2h0m0 3h0m0 5h0m1-22h0m0 4h0m0 1h0m0 3h0m0 1h0m1-9h0m0 3h0m0 5h0m0 4h0m0 3h0m0 4h0m0 4h0m1-25h0m0 6h0m0 1h0m0 3h0m0 1h0m0 3h0m0 6h0m0 4h0m1-27h0m0 4h0m0 3h0m0 10h0m0 3h0m0 1h0m1-20h0m0 6h0m0 7h0m0 3h0m0 5h0m0 3h0m1-20h0m0 5h0m0 2h0m0 1h0m0 5h0m0 1h0m1-19h0m0 2h0m0 7h0m0 14h0m0 6h0m1-30h0m0 6h0m0 1h0m0 2h0m0 4h0m0 3h0m0 2h0m0 1h0m0 2h0m1-25h0m0 2h0m0 10h0m0 7h0m1-17h0m0 4h0m0 3h0m0 4h0m0 2h0m0 2h0m0 2h0m0 5h0m0 1h0m0 2h0m0 7h0m1-31h0m0 6h0m0 1h0m0 5h0m0 6h0m0 3h0m1-12h0m0 1h0m0 1h0m0 4h0m0 3h0m0 2h0m1-17h0m0 1h0m0 3h0m0 4h0m0 3h0m0 4h0m0 5h0m0 4h0m1-23h0m0 9h0m0 3h0m0 1h0m0 7h0m0 2h0m0 1h0m1-26h0m0 12h0m0 3h0m1-20h0m0 9h0m0 1h0m0 2h0m0 2h0m0 4h0m0 2h0m0 1h0m0 5h0m0 1h0m1-25h0m0 2h0m0 2h0m0 2h0m0 3h0m0 3h0m1-9h0m0 6h0m0 3h0m0 1h0m0 2h0m0 2h0m0 3h0m0 3h0m1-25h0m0 14h0m0 8h0m0 1h0m0 1h0m0 4h0m1-20h0m0 2h0m0 3h0m0 2h0m0 2h0m0 10h0m1-8h0m0 1h0m0 4h0m0 3h0m0 3h0m0 5h0m1-28h0m0 15h0m0 7h0m1-21h0m0 3h0m0 2h0m0 1h0m0 3h0m0 3h0m0 5h0m0 3h0m0 3h0m1-26h0m0 6h0m0 5h0m1-13h0m0 5h0m0 6h0m0 3h0m0 4h0m0 3h0m0 1h0m0 4h0m1-30h0m0 8h0m0 2h0m0 6h0m0 3h0m0 10h0m1-26h0m0 3h0m0 7h0m0 5h0m0 3h0m0 3h0m1-14h0m0 9h0m0 1h0m0 1h0m0 2h0m0 3h0m0 1h0m0 2h0m1-25h0m0 1h0m0 1h0m0 4h0m0 6h0m0 3h0m0 3h0m1-11h0m0 2h0m0 3h0m0 2h0m0 7h0m1-18h0m0 1h0m0 4h0m0 10h0m0 3h0m0 1h0m0 3h0m0 1h0m1-21h0m0 3h0m0 5h0m0 1h0m0 2h0m0 6h0m0 1h0m0 4h0m0 4h0m1-32h0m0 3h0m0 4h0m0 4h0m0 4h0m0 2h0m0 3h0m0 6h0m0 6h0m1-31h0m0 3h0m0 3h0m0 4h0m0 2h0m0 8h0m1-18h0m0 7h0m0 1h0m0 4h0m0 3h0m0 1h0m0 1h0m0 4h0m0 9h0m1-28h0m0 1h0m0 2h0m0 9h0m0 4h0m0 3h0m0 2h0m0 2h0m0 2h0m1-27h0m0 8h0m0 3h0m0 9h0m0 3h0m1-24h0m0 1h0m0 1h0m0 1h0m0 3h0m0 1h0m0 5h0m0 1h0m0 3h0m1-13h0m0 6h0m0 1h0m0 2h0m0 1h0m0 1h0m0 4h0m0 1h0m0 2h0m0 1h0m1-10h0m0 6h0m0 3h0m1-15h0m0 3h0m0 1h0m0 2h0m0 3h0m0 14h0m1-18h0m0 6h0m0 3h0m0 4h0m1-18h0m0 1h0m0 4h0m0 8h0m0 2h0m0 3h0m0 7h0m1-32h0m0 9h0m0 3h0m0 3h0m0 1h0m0 3h0m0 1h0m0 2h0m0 1h0m1-23h0m0 7h0m0 3h0m0 3h0m0 4h0m0 2h0m0 5h0m0 3h0m1-30h0m0 1h0m0 23h0m0 1h0m0 7h0m1-22h0m0 3h0m0 2h0m0 3h0m0 9h0m1-25h0m0 8h0m0 6h0m0 4h0m0 2h0m0 2h0m0 1h0m0 1h0m1-19h0m0 2h0m0 3h0m0 3h0m0 8h0m1-18h0m0 1h0m0 1h0m0 5h0m0 6h0m0 8h0m0 3h0m0 3h0m1-30h0m0 9h0m0 3h0m0 3h0m0 1h0m0 2h0m0 8h0m1-19h0m0 7h0m0 1h0m0 2h0m0 2h0m0 6h0m1-21h0m0 9h0m0 13h0m1-20h0m0 1h0m0 1h0m0 2h0m0 8h0m0 4h0m0 1h0m0 1h0m0 5h0m1-25h0m0 6h0m0 1h0m0 1h0m0 3h0m0 6h0m0 2h0m0 1h0m0 2h0m1-18h0m0 3h0m0 6h0m0 3h0m0 2h0m0 3h0m0 7h0m1-12h0m1-12h0m0 1h0m0 1h0m0 2h0m0 2h0m0 1h0m0 2h0m1-9h0m0 2h0m0 3h0m0 6h0m0 1h0m0 3h0m1-15h0m0 7h0m0 3h0m0 11h0m1-25h0m0 3h0m0 8h0m0 3h0m0 4h0m0 6h0m0 3h0m1-22h0m0 2h0m0 2h0m0 8h0m0 3h0m1-19h0m0 8h0m0 7h0m0 2h0m0 7h0m0 5h0m1-27h0m0 3h0m0 5h0m0 2h0m0 3h0m0 8h0m1-24h0m0 2h0m0 4h0m0 5h0m0 3h0m0 3h0m0 1h0m0 1h0m0 2h0m1-20h0m0 2h0m0 1h0m0 5h0m0 1h0m0 2h0m0 1h0m0 1h0m0 1h0m0 9h0m0 1h0m1-33h0m0 4h0m0 3h0m0 2h0m0 10h0m0 4h0m0 5h0m0 6h0m0 1h0m0 5h0m1-30h0m0 3h0m0 3h0m0 6h0m0 5h0m0 4h0m0 1h0m0 7h0m1-26h0m0 4h0m0 4h0m0 3h0m0 1h0m0 1h0m0 1h0m0 2h0m1-9h0m0 3h0m0 2h0m0 5h0m0 3h0m1-30h0m0 2h0m0 6h0m0 2h0m0 1h0m0 7h0m0 7h0m0 1h0m1-21h0m0 4h0m0 4h0m0 1h0m0 4h0m0 1h0m0 10h0m0 1h0m0 7h0m1-25h0m0 2h0m0 2h0m0 4h0m0 3h0m0 2h0m1-18h0m0 3h0m0 5h0m0 2h0m0 3h0m0 5h0m0 4h0m0 5h0m1-29h0m0 4h0m0 3h0m0 1h0m0 1h0m0 1h0m0 6h0m0 3h0m0 2h0m1-24h0m0 6h0m0 7h0m0 2h0m0 2h0m0 6h0m0 3h0m0 2h0m1-22h0m0 3h0m0 7h0m0 3h0m0 6h0m0 5h0m1-27h0m0 1h0m0 3h0m0 1h0m0 4h0m0 4h0m0 6h0m0 6h0m0 4h0m1-34h0m0 6h0m0 3h0m0 2h0m0 4h0m0 8h0m0 2h0m0 3h0m0 6h0m1-24h0m0 4h0m0 4h0m0 3h0m0 3h0m1-10h0m1-11h0m0 8h0m0 3h0m0 1h0m0 1h0m0 4h0m1-14h0m0 3h0m0 1h0m0 5h0m0 4h0m0 3h0m1-19h0m0 2h0m0 4h0m0 2h0m0 1h0m0 11h0m0 5h0m1-16h0m0 2h0m0 2h0m0 2h0m0 4h0m0 1h0m0 5h0m0 1h0m1-21h0m0 1h0m0 10h0m0 5h0m0 8h0m1-24h0m0 15h0m0 4h0m0 7h0m1-23h0m0 1h0m0 1h0m0 3h0m0 4h0m0 3h0m0 2h0m0 2h0m0 1h0m1-18h0m0 4h0m0 3h0m0 5h0m0 3h0m0 4h0m1-27h0m0 9h0m0 8h0m0 4h0m0 1h0m0 2h0m1-21h0m0 4h0m0 5h0m0 5h0m0 8h0m1-19h0m0 1h0m0 1h0m0 6h0m0 4h0m0 4h0m1-18h0m0 3h0m0 2h0m0 8h0m0 2h0m1-19h0m0 2h0m0 1h0m0 7h0m0 3h0m0 5h0m0 3h0m0 3h0m1-21h0m0 2h0m0 1h0m0 8h0m0 3h0m0 8h0m1-16h0m0 1h0m0 1h0m0 3h0m0 1h0m0 6h0m0 1h0m0 8h0m1-28h0m0 6h0m0 9h0m0 3h0m1-15h0m0 5h0m0 1h0m0 2h0m0 1h0m0 3h0m0 2h0m0 3h0m0 3h0m1-21h0m0 5h0m0 1h0m0 3h0m0 4h0m0 6h0m0 4h0m1-20h0m0 4h0m0 1h0m0 1h0m0 5h0m0 1h0m0 5h0m0 3h0m0 7h0m1-31h0m0 2h0m0 6h0m0 9h0m0 4h0m0 5h0m0 2h0m1-22h0m0 2h0m0 3h0m0 2h0m0 6h0m0 1h0m0 1h0m0 1h0m0 7h0m1-29h0m0 4h0m0 4h0m0 3h0m0 2h0m0 2h0m0 3h0m0 3h0m1-24h0m0 3h0m0 2h0m0 4h0m0 10h0m0 2h0m0 1h0m1-17h0m0 1h0m0 8h0m0 3h0m0 7h0m0 3h0m0 1h0m1-20h0m0 3h0m0 5h0m0 4h0m2-20h0m0 7h0m0 2h0m0 1h0m0 2h0m0 2h0m0 1h0m0 2h0m1-11h0m0 5h0m0 1h0m0 2h0m0 4h0m0 1h0m0 3h0m0 3h0m0 2h0m1-23h0m0 2h0m0 1h0m0 7h0m0 2h0m0 14h0m1-33h0m0 12h0m0 1h0m0 3h0m0 3h0m0 6h0m0 7h0m0 3h0m1-31h0m0 8h0m0 9h0m0 2h0m0 1h0m0 2h0m0 1h0m0 1h0m1-18h0m0 7h0m0 1h0m0 1h0m0 6h0m0 1h0m0 4h0m0 1h0m0 1h0m1-19h0m0 2h0m0 6h0m1-22h0m0 9h0m0 2h0m0 3h0m0 2h0m0 1h0m0 5h0m0 1h0m0 2h0m1-19h0m0 3h0m0 3h0m0 3h0m0 5h0m0 6h0m1-20h0m0 12h0m0 3h0m0 3h0m0 3h0m0 10h0m1-30h0m0 4h0m0 4h0m0 3h0m0 9h0m0 2h0m1-24h0m0 6h0m0 1h0m0 2h0m0 13h0m0 4h0m0 5h0m1-29h0m0 7h0m0 4h0m0 3h0m0 2h0m0 2h0m0 3h0m1-21h0m0 10h0m0 4h0m0 7h0m0 2h0m0 2h0m1-26h0m0 6h0m0 3h0m0 2h0m0 2h0m0 5h0m0 2h0m1-21h0m0 3h0m0 3h0m0 4h0m0 6h0m0 4h0m0 2h0m0 5h0m1-17h0m0 5h0m0 1h0m0 1h0m0 1h0m0 7h0m0 4h0m0 2h0m1-24h0m0 2h0m0 3h0m0 1h0m0 4h0m0 1h0m0 1h0m0 7h0m1-21h0m0 14h0m0 2h0m0 4h0m1-21h0m0 1h0m0 3h0m0 2h0m0 2h0m0 3h0m0 2h0m0 3h0m0 2h0m0 3h0m1-25h0m0 6h0m0 6h0m0 3h0m0 5h0m0 1h0m0 3h0m1-18h0m0 5h0m0 3h0m0 4h0m0 2h0m0 2h0m0 3h0m0 2h0m0 1h0m1-32h0m0 3h0m0 3h0m0 2h0m0 1h0m0 4h0m0 1h0m0 1h0m0 6h0m0 4h0m1-16h0m0 1h0m0 3h0m0 5h0m0 1h0m0 2h0m0 4h0m1-27h0m0 10h0m0 3h0m0 4h0m0 2h0m0 6h0m0 7h0m1-26h0m0 2h0m0 5h0m0 3h0m0 1h0m0 5h0m0 3h0m0 3h0m0 3h0m1-21h0m0 5h0m1-8h0m0 6h0m0 6h0m0 3h0m0 3h0m0 5h0m1-26h0m0 9h0m0 4h0m0 6h0m0 3h0m0 3h0m1-19h0m0 4h0m0 4h0m0 5h0m0 8h0m1-20h0m0 4h0m0 3h0m0 2h0m0 2h0m0 4h0m0 1h0m0 2h0m0 4h0m1-16h0m0 7h0m0 1h0m1-15h0m0 2h0m0 3h0m0 3h0m0 4h0m0 7h0m0 4h0m1-24h0m0 4h0m0 8h0m0 2h0m0 3h0m0 1h0m0 6h0m1-21h0m0 5h0m0 7h0m0 2h0m0 3h0m0 1h0m0 3h0m0 3h0m0 2h0m1-24h0m0 1h0m0 2h0m0 3h0m0 1h0m0 4h0m0 1h0m0 5h0m0 2h0m1-26h0m0 4h0m0 1h0m0 2h0m0 1h0m0 7h0m0 3h0m0 1h0m1-8h0m0 1h0m0 1h0m0 7h0m0 2h0m1-25h0m0 1h0m0 5h0m0 11h0m0 4h0m0 10h0m1-34h0m0 3h0m0 3h0m0 5h0m0 2h0m0 2h0m0 5h0m0 3h0m0 1h0m0 12h0m1-24h0m0 1h0m0 5h0m0 1h0m0 7h0m0 1h0m1-19h0m0 3h0m0 4h0m0 1h0m0 11h0m0 4h0m1-18h0m0 8h0m0 2h0m0 6h0m0 2h0m1-25h0m0 12h0m0 1h0m0 2h0m0 2h0m0 1h0m0 2h0m0 1h0m0 1h0m0 1h0m1-28h0m0 6h0m0 3h0m0 1h0m0 4h0m0 6h0m0 4h0m0 8h0m1-29h0m0 4h0m0 7h0m0 2h0m0 2h0m0 11h0m1-31h0m0 10h0m0 2h0m0 2h0m0 10h0m0 4h0m0 2h0m1-29h0m0 12h0m0 2h0m0 3h0m0 2h0m0 1h0m0 1h0m0 3h0m1-24h0m0 10h0m0 7h0m0 5h0m0 1h0m0 1h0m0 1h0m0 2h0m1-20h0m0 8h0m0 4h0m0 1h0m0 3h0m1-14h0m0 2h0m0 1h0m0 7h0m0 8h0m1-21h0m0 2h0m0 4h0m0 2h0m0 3h0m0 6h0m0 1h0m0 13h0m1-26h0m0 1h0m0 5h0m0 2h0m0 3h0m0 2h0m1-14h0m0 3h0m0 4h0m0 3h0m0 10h0m1-22h0m0 4h0m0 3h0m0 9h0m0 2h0m0 1h0m0 9h0m1-31h0m0 2h0m0 4h0m0 2h0m0 2h0m0 2h0m0 2h0m0 3h0m0 7h0m1-24h0m0 18h0m0 3h0m0 2h0m1-25h0m0 1h0m0 4h0m0 8h0m0 2h0m1-9h0m0 4h0m0 2h0m0 1h0m0 4h0m0 11h0m1-24h0m0 2h0m0 2h0m0 2h0m0 10h0m0 1h0m0 2h0m0 1h0m1-21h0m0 9h0m0 4h0m0 1h0m0 5h0m0 4h0m1-29h0m0 9h0m0 2h0m0 1h0m0 2h0m0 2h0m0 11h0m1-16h0m0 5h0m0 4h0m0 3h0m0 3h0m0 11h0m1-30h0m0 4h0m0 5h0m0 3h0m0 1h0m0 8h0m1-26h0m0 3h0m0 3h0m0 2h0m0 4h0m0 6h0m0 5h0m1-25h0m0 3h0m0 12h0m0 8h0m0 13h0m1-34h0m0 6h0m0 4h0m0 4h0m0 1h0m0 7h0m0 1h0m0 1h0m0 6h0m1-23h0m0 11h0m0 15h0m1-25h0m0 2h0m0 3h0m0 1h0m0 6h0m0 1h0m0 2h0m1-22h0m0 5h0m0 5h0m0 1h0m0 1h0m0 3h0m0 1h0m0 3h0m0 2h0m0 14h0m1-13h0m1-19h0m0 3h0m0 2h0m0 2h0m0 6h0m0 1h0m0 2h0m0 5h0m0 5h0m1-20h0m0 1h0m0 1h0m0 3h0m0 18h0m1-21h0m0 6h0m0 2h0m0 3h0m0 2h0m0 1h0m0 2h0m1-22h0m0 1h0m0 2h0m0 3h0m0 1h0m0 2h0m0 3h0m0 4h0m0 1h0m0 6h0m1-22h0m0 5h0m0 2h0m0 3h0m0 6h0m0 3h0m0 4h0m1-20h0m0 1h0m0 7h0m0 1h0m0 2h0m0 4h0m0 2h0m0 2h0m0 2h0m1-26h0m0 1h0m0 8h0m0 4h0m0 2h0m0 9h0m1-22h0m0 8h0m0 1h0m0 5h0m0 3h0m0 5h0m1-22h0m0 2h0m0 3h0m0 3h0m0 5h0m0 1h0m0 2h0m0 3h0m0 2h0m1-23h0m0 9h0m0 4h0m0 5h0m0 10h0m1-25h0m0 4h0m0 2h0m0 3h0m0 1h0m0 1h0m0 3h0m0 1h0m0 1h0m0 2h0m1-29h0m0 6h0m0 2h0m0 4h0m0 14h0m0 4h0m0 3h0m0 2h0m0 2h0m1-36h0m0 5h0m0 4h0m0 8h0m0 4h0m0 1h0m0 4h0m0 5h0m0 1h0m0 5h0m1-33h0m0 9h0m0 1h0m0 2h0m0 2h0m0 3h0m0 8h0m0 1h0m0 1h0m0 1h0m1-18h0m0 1h0m0 13h0m0 2h0m0 1h0m0 3h0m1-23h0m0 7h0m0 1h0m0 1h0m0 2h0m0 3h0m0 7h0m0 4h0m1-25h0m0 3h0m0 2h0m0 8h0m0 5h0m0 2h0m0 3h0m1-33h0m0 19h0m0 3h0m0 5h0m0 1h0m0 6h0m1-30h0m0 1h0m0 2h0m0 5h0m0 1h0m0 3h0m0 9h0m0 11h0m1-32h0m0 5h0m0 5h0m0 4h0m0 3h0m0 2h0m0 3h0m0 2h0m0 5h0m1-29h0m0 4h0m0 4h0m0 4h0m0 3h0m0 8h0m0 6h0m1-23h0m0 1h0m0 5h0m0 4h0m0 5h0m1-10h0m0 1h0m0 3h0m0 1h0m0 1h0m0 3h0m0 4h0m0 2h0m1-27h0m0 1h0m0 1h0m0 2h0m0 6h0m0 7h0m0 5h0m0 4h0m1-23h0m0 3h0m0 2h0m0 1h0m0 4h0m0 7h0m0 5h0m1-25h0m0 5h0m0 1h0m0 2h0m0 4h0m0 3h0m0 4h0m0 1h0m0 4h0m1-25h0m0 11h0m0 8h0m0 1h0m0 5h0m0 3h0m1-14h0m0 3h0m0 2h0m0 2h0m0 9h0m1-32h0m0 7h0m0 1h0m0 2h0m0 2h0m0 2h0m0 7h0m0 2h0m0 3h0m0 1h0m0 2h0m0 2h0m1-30h0m0 2h0m0 1h0m0 1h0m0 11h0m0 7h0m0 1h0m0 10h0m0 1h0m0 1h0m1-29h0m0 7h0m0 2h0m0 3h0m0 1h0m0 1h0m0 2h0m1-14h0m0 3h0m0 7h0m1-14h0m0 3h0m0 3h0m0 3h0m0 4h0m0 1h0m0 7h0m1-23h0m1 8h0m0 2h0m0 3h0m0 2h0m0 4h0m0 3h0m1-21h0m0 2h0m0 2h0m0 8h0m0 4h0m0 6h0m1-17h0m0 3h0m0 1h0m0 4h0m0 1h0m0 2h0m0 2h0m0 1h0m0 3h0m0 1h0m1-26h0m0 20h0m0 6h0m0 1h0m0 1h0m0 4h0m1-25h0m0 1h0m0 3h0m0 4h0m0 4h0m0 6h0m0 5h0m0 3h0m1-35h0m0 2h0m0 6h0m0 3h0m0 1h0m0 2h0m0 1h0m0 6h0m0 4h0m1-25h0m0 1h0m0 8h0m0 6h0m0 3h0m0 1h0m0 3h0m0 7h0m1-26h0m0 3h0m0 6h0m0 3h0m0 1h0m0 1h0m0 1h0m0 1h0m0 10h0m0 2h0m0 1h0m1-26h0m0 3h0m0 4h0m0 7h0m0 4h0m0 1h0m1-24h0m0 10h0m0 3h0m0 3h0m0 4h0m0 8h0m1-22h0m0 2h0m0 1h0m0 2h0m0 5h0m0 4h0m0 4h0m0 3h0m1-21h0m0 4h0m0 4h0m0 3h0m0 3h0m0 2h0m0 1h0m0 3h0m0 4h0m1-23h0m0 8h0m0 3h0m0 8h0m1-18h0m0 3h0m0 1h0m0 11h0m1-11h0m0 1h0m0 3h0m0 1h0m0 3h0m0 1h0m0 4h0m0 3h0m0 4h0m1-28h0m0 2h0m0 6h0m0 4h0m0 6h0m0 4h0m0 10h0m1-38h0m0 6h0m0 4h0m0 1h0m0 1h0m0 3h0m0 6h0m0 15h0m1-29h0m0 8h0m0 1h0m0 1h0m0 2h0m0 4h0m0 3h0m0 5h0m0 4h0m2-24h0m0 6h0m0 3h0m1-11h0m0 4h0m0 4h0m0 2h0m0 1h0m0 1h0m0 3h0m0 1h0m0 4h0m0 1h0m0 5h0m0 1h0m1-35h0m0 13h0m0 13h0m0 1h0m0 3h0m1-25h0m0 4h0m0 2h0m0 3h0m0 1h0m0 2h0m0 4h0m0 2h0m0 3h0m0 2h0m1-22h0m0 3h0m0 1h0m0 7h0m0 4h0m0 1h0m0 5h0m1-20h0m0 5h0m0 1h0m0 5h0m0 1h0m0 6h0m0 1h0m0 3h0m1-19h0m0 3h0m0 1h0m0 5h0m0 3h0m0 8h0m0 1h0m0 4h0m1-21h0m0 2h0m0 3h0m0 4h0m0 6h0m1-22h0m0 5h0m0 3h0m0 8h0m0 3h0m0 8h0m1-32h0m0 9h0m0 3h0m0 3h0m0 3h0m0 6h0m0 6h0m1-26h0m0 5h0m0 6h0m0 3h0m0 8h0m0 1h0m1-15h0m0 4h0m0 3h0m0 2h0m0 1h0m0 5h0m0 5h0m1-25h0m0 8h0m0 2h0m0 8h0m1-17h0m0 1h0m0 3h0m0 7h0m0 3h0m0 4h0m0 6h0m1-23h0m0 5h0m0 1h0m0 14h0m0 5h0m1-28h0m0 3h0m0 2h0m0 5h0m0 3h0m0 3h0m0 3h0m0 10h0m1-31h0m0 15h0m0 7h0m0 5h0m1-27h0m0 5h0m0 4h0m0 1h0m0 3h0m0 2h0m0 2h0m0 1h0m0 3h0m1-15h0m0 9h0m0 3h0m0 6h0m1-22h0m0 1h0m0 3h0m0 4h0m0 3h0m0 7h0m1-21h0m0 4h0m0 1h0m0 1h0m0 3h0m0 5h0m0 1h0m0 3h0m0 9h0m1-30h0m0 1h0m0 12h0m0 1h0m0 1h0m0 11h0m1-25h0m0 2h0m0 2h0m0 4h0m0 6h0m0 2h0m0 4h0m0 2h0m0 3h0m0 8h0m0 2h0m1-29h0m0 4h0m0 1h0m0 4h0m0 1h0m0 1h0m0 5h0m1-17h0m0 3h0m0 7h0m0 3h0m0 3h0m0 6h0m1-22h0m0 6h0m0 1h0m0 10h0m0 2h0m0 1h0m0 3h0m1-20h0m0 2h0m0 1h0m0 2h0m0 4h0m0 6h0m1-24h0m0 4h0m0 3h0m0 5h0m0 1h0m0 1h0m0 2h0m0 3h0m0 1h0m1-17h0m0 7h0m0 4h0m0 4h0m0 4h0m0 3h0m1-20h0m0 4h0m0 15h0m0 1h0m1-20h0m0 4h0m0 2h0m0 5h0m0 1h0m0 4h0m0 2h0m0 1h0m0 2h0m0 3h0m1-22h0m0 3h0m0 3h0m0 5h0m0 10h0m0 3h0m0 6h0m1-33h0m0 1h0m0 4h0m0 5h0m0 3h0m0 1h0m0 3h0m0 9h0m0 1h0m1-22h0m0 3h0m0 4h0m0 6h0m0 3h0m1-16h0m0 4h0m0 4h0m0 3h0m0 4h0m0 1h0m0 3h0m0 1h0m0 1h0m1-26h0m0 2h0m1-4h0m0 10h0m0 3h0m0 3h0m0 1h0m0 1h0m0 3h0m0 1h0m0 3h0m1-21h0m0 7h0m0 2h0m0 1h0m0 6h0m0 1h0m0 4h0m1-25h0m0 2h0m0 6h0m0 3h0m0 4h0m0 1h0m0 2h0m0 10h0m2-19h0m0 8h0m0 1h0m0 2h0m0 2h0m0 3h0m1-17h0m0 3h0m0 1h0m0 1h0m0 3h0m0 2h0m0 1h0m0 2h0m0 4h0m0 6h0m1-23h0m0 5h0m0 2h0m0 1h0m0 3h0m0 8h0m1-21h0m0 14h0m0 1h0m0 3h0m0 2h0m0 5h0m1-28h0m0 4h0m0 1h0m0 3h0m0 4h0m0 1h0m0 8h0m1-28h0m0 4h0m0 1h0m0 7h0m0 1h0m0 5h0m0 3h0m0 1h0m0 5h0m0 2h0m0 9h0m1-36h0m0 1h0m0 2h0m0 3h0m0 1h0m0 7h0m0 7h0m0 1h0m0 8h0m0 3h0m1-30h0m0 3h0m0 6h0m0 15h0m0 1h0m0 2h0m0 2h0m0 3h0m1-26h0m0 5h0m0 2h0m0 1h0m0 1h0m0 5h0m0 2h0m0 4h0m0 1h0m1-20h0m0 8h0m0 1h0m0 2h0m0 3h0m0 1h0m1-24h0m0 6h0m0 4h0m0 4h0m0 5h0m0 2h0m0 3h0m1-18h0m0 4h0m0 1h0m0 6h0m0 1h0m0 3h0m0 2h0m0 1h0m0 1h0m0 2h0m1-18h0m0 4h0m0 2h0m1-11h0m0 7h0m0 2h0m0 5h0m0 2h0m0 1h0m0 3h0m0 1h0m1-20h0m0 2h0m0 9h0m0 1h0m0 12h0m0 1h0m0 1h0m1-29h0m0 1h0m0 7h0m0 1h0m0 7h0m0 5h0m0 4h0m0 3h0m0 2h0m0 2h0m1-28h0m0 4h0m0 3h0m0 5h0m0 3h0m0 1h0m0 1h0m0 1h0m0 3h0m1-21h0m0 2h0m0 2h0m0 1h0m0 1h0m0 4h0m0 4h0m0 2h0m0 3h0m1-20h0m0 6h0m0 12h0m0 2h0m0 2h0m0 3h0m0 6h0m1-26h0m0 3h0m0 4h0m0 7h0m0 3h0m1-22h0m0 9h0m0 1h0m0 1h0m0 4h0m0 8h0m0 1h0m1-22h0m0 4h0m0 6h0m0 1h0m0 1h0m0 4h0m0 1h0m1-25h0m0 4h0m0 1h0m0 2h0m0 4h0m0 2h0m0 3h0m0 5h0m0 5h0m1-26h0m0 3h0m0 1h0m0 14h0m0 1h0m0 2h0m1-13h0m0 1h0m0 3h0m0 2h0m0 3h0m0 1h0m0 4h0m0 4h0m0 1h0m0 3h0m1-22h0m0 6h0m0 2h0m0 5h0m0 2h0m2-17h0m0 2h0m0 2h0m0 3h0m0 2h0m0 3h0m0 1h0m0 3h0m0 1h0m0 1h0m1-14h0m0 5h0m0 4h0m0 5h0m0 4h0m0 3h0m1-32h0m0 15h0m0 1h0m0 2h0m0 1h0m0 4h0m0 1h0m0 3h0m1-23h0m0 4h0m0 1h0m0 3h0m0 11h0m0 2h0m0 7h0m1-24h0m0 6h0m0 3h0m0 2h0m0 1h0m0 4h0m0 4h0m1-20h0m0 1h0m0 5h0m0 4h0m0 3h0m1-11h0m0 3h0m0 5h0m0 5h0m0 2h0m1-17h0m0 8h0m0 6h0m0 5h0m1-24h0m0 1h0m0 1h0m0 7h0m0 2h0m0 2h0m0 2h0m0 1h0m0 3h0m1-18h0m0 2h0m0 5h0m0 1h0m0 1h0m0 5h0m0 6h0m0 2h0m1-21h0m0 5h0m0 1h0m0 1h0m0 2h0m0 5h0m0 2h0m1-18h0m0 7h0m0 4h0m0 1h0m0 5h0m0 1h0m0 3h0m0 3h0m1-21h0m0 4h0m0 1h0m0 5h0m0 5h0m0 3h0m1-16h0m0 1h0m0 1h0m0 5h0m0 2h0m0 1h0m0 4h0m0 6h0m0 2h0m1-18h0m0 2h0m0 11h0m0 1h0m1-23h0m0 3h0m0 4h0m0 7h0m0 4h0m0 3h0m0 5h0m1-18h0m0 2h0m0 5h0m0 2h0m0 1h0m0 1h0m0 2h0m1-21h0m0 5h0m0 2h0m0 1h0m0 3h0m0 1h0m0 11h0m1-22h0m0 3h0m0 2h0m0 6h0m0 4h0m0 3h0m0 6h0m0 3h0m1-25h0m0 3h0m0 9h0m0 6h0m1-13h0m0 2h0m0 3h0m0 2h0m0 2h0m0 4h0m0 4h0m1-21h0m0 4h0m0 3h0m0 2h0m0 6h0m0 3h0m0 1h0m1-25h0m0 7h0m0 3h0m0 10h0m0 7h0m0 1h0m1-15h0m0 5h0m0 2h0m0 1h0m0 4h0m1-19h0m0 3h0m0 4h0m0 3h0m0 1h0m0 3h0m0 4h0m0 2h0m1-24h0m0 14h0m0 1h0m0 6h0m0 2h0m0 1h0m1-24h0m0 3h0m0 2h0m0 5h0m0 1h0m0 2h0m0 3h0m0 3h0m1-24h0m0 1h0m0 3h0m0 1h0m0 7h0m0 1h0m0 4h0m0 1h0m0 4h0m0 5h0m1-27h0m0 4h0m0 4h0m0 3h0m0 2h0m0 10h0m0 2h0m0 2h0m0 5h0m1-27h0m0 3h0m0 2h0m0 6h0m0 3h0m0 2h0m0 2h0m1-17h0m0 3h0m0 2h0m0 1h0m0 6h0m0 5h0m0 7h0m0 1h0m0 3h0m0 1h0m0 3h0m1-24h0m0 6h0m0 3h0m0 3h0m1-13h0m0 13h0m0 6h0m1-22h0m0 3h0m0 1h0m0 2h0m0 3h0m0 2h0m0 8h0m0 3h0m1-18h0m0 3h0m0 7h0m0 7h0m0 2h0m0 5h0m1-33h0m0 4h0m0 1h0m0 2h0m0 5h0m0 2h0m0 1h0m0 6h0m0 2h0m1-20h0m0 4h0m0 2h0m0 1h0m0 1h0m0 2h0m0 3h0m0 5h0m0 1h0m0 1h0m0 8h0m1-24h0m0 3h0m0 6h0m0 1h0m0 1h0m0 1h0m0 1h0m0 7h0m0 1h0m1-34h0m0 7h0m0 1h0m0 4h0m0 1h0m0 1h0m0 3h0m0 7h0m1-16h0m0 4h0m0 3h0m0 4h0m0 1h0m0 3h0m0 8h0m0 3h0m0 6h0m1-35h0m0 2h0m0 6h0m0 10h0m0 3h0m0 2h0m1-17h0m0 4h0m0 2h0m0 4h0m0 1h0m0 5h0m0 5h0m0 3h0m1-11h0m0 1h0m0 2h0m0 3h0m0 4h0m0 1h0m1-25h0m0 3h0m0 1h0m0 2h0m0 3h0m0 12h0m1-15h0m0 4h0m0 2h0m0 2h0m0 1h0m0 5h0m1-22h0m0 4h0m0 1h0m0 2h0m0 10h0m0 2h0m1-15h0m0 7h0m0 4h0m0 3h0m0 1h0m0 7h0m0 2h0m1-27h0m0 1h0m0 8h0m0 2h0m0 3h0m0 6h0m0 2h0m1-28h0m0 1h0m0 1h0m0 4h0m0 6h0m0 4h0m0 10h0m1-26h0m0 6h0m0 1h0m0 2h0m0 4h0m0 5h0m0 4h0m0 4h0m0 5h0m0 7h0m1-36h0m0 7h0m0 2h0m0 1h0m0 4h0m0 5h0m0 4h0m0 1h0m1-24h0m0 4h0m0 2h0m0 11h0m0 2h0m1-11h0m0 3h0m0 3h0m0 1h0m0 3h0m0 3h0m0 1h0m0 6h0m1-21h0m0 3h0m0 1h0m0 4h0m1-11h0m0 7h0m0 1h0m0 1h0m0 6h0m0 2h0m0 3h0m0 1h0m1-18h0m0 3h0m0 2h0m0 3h0m0 1h0m0 3h0m0 2h0m1 4h0m1-20h0m0 19h0m1-25h0m0 10h0m0 1h0m0 1h0m0 2h0m0 3h0m0 1h0m0 1h0m0 6h0m0 1h0m0 3h0m1-21h0m0 1h0m0 7h0m0 3h0m0 2h0m0 1h0m0 3h0m0 6h0m1-25h0m0 7h0m0 1h0m0 3h0m0 3h0m0 1h0m0 1h0m0 1h0m0 1h0m1-17h0m0 3h0m0 3h0m0 2h0m0 4h0m0 2h0m0 2h0m0 3h0m0 6h0m0 3h0m1-31h0m0 5h0m0 5h0m0 5h0m0 5h0m0 2h0m0 1h0m1-21h0m0 4h0m0 1h0m0 4h0m0 2h0m0 2h0m0 1h0m0 9h0m0 5h0m1-30h0m0 10h0m0 3h0m0 6h0m0 3h0m0 2h0m0 9h0m1-37h0m0 2h0m0 1h0m0 4h0m0 2h0m0 1h0m0 2h0m0 4h0m0 7h0m0 1h0m1-24h0m0 5h0m0 1h0m0 2h0m0 10h0m0 1h0m0 3h0m0 1h0m1-19h0m0 7h0m0 2h0m0 6h0m0 3h0m0 1h0m0 4h0m1-18h0m0 5h0m0 1h0m0 6h0m0 1h0m0 2h0m0 1h0m1-11h0m0 3h0m0 3h0m0 3h0m0 2h0m0 1h0m0 1h0m0 1h0m1-28h0m0 3h0m0 1h0m0 2h0m0 2h0m0 3h0m0 2h0m0 4h0m0 4h0m0 8h0m0 2h0m1-28h0m0 5h0m0 2h0m0 1h0m0 2h0m0 4h0m0 15h0m1-35h0m0 13h0m0 6h0m0 2h0m0 1h0m0 2h0m0 2h0m0 2h0m0 1h0m0 5h0m1-26h0m0 4h0m0 5h0m0 1h0m0 6h0m0 1h0m0 1h0m0 4h0m1-28h0m0 2h0m0 2h0m0 1h0m0 2h0m0 5h0m0 4h0m0 3h0m0 4h0m0 8h0m1-32h0m0 9h0m0 1h0m0 2h0m0 4h0m0 1h0m0 4h0m0 3h0m0 3h0m0 2h0m0 1h0m0 3h0m1-29h0m0 13h0m0 2h0m0 6h0m0 1h0m0 2h0m0 3h0m1-17h0m0 3h0m0 2h0m0 2h0m0 2h0m1-15h0m0 2h0m0 1h0m0 6h0m0 4h0m0 8h0m1-20h0m0 3h0m0 3h0m0 2h0m0 1h0m0 3h0m0 3h0m0 2h0m1-18h0m0 2h0m0 2h0m0 1h0m0 2h0m0 6h0m0 3h0m0 1h0m0 3h0m1-14h0m0 2h0m0 3h0m0 4h0m0 2h0m0 2h0m1-20h0m0 6h0m0 2h0m0 4h0m0 3h0m1-12h0m1 1h0m0 1h0m0 6h0m0 5h0m0 3h0m0 3h0m0 1h0m0 1h0m1-25h0m0 5h0m0 2h0m0 2h0m0 5h0m0 2h0m0 7h0m1-24h0m0 6h0m0 5h0m0 2h0m0 3h0m0 9h0m1-17h0m0 3h0m0 3h0m0 5h0m0 1h0m0 3h0m0 7h0m1-28h0m0 4h0m0 3h0m0 3h0m0 1h0m0 3h0m1-19h0m0 8h0m0 14h0m0 3h0m0 2h0m1-23h0m0 1h0m0 5h0m0 1h0m0 6h0m0 3h0m0 1h0m0 9h0m1-26h0m0 7h0m0 2h0m0 2h0m0 5h0m0 3h0m0 6h0m0 4h0m1-20h0m0 1h0m0 1h0m0 1h0m0 3h0m0 4h0m0 2h0m0 1h0m1-18h0m0 7h0m0 1h0m0 7h0m0 1h0m0 7h0m1-21h0m0 3h0m0 7h0m0 2h0m0 3h0m0 1h0m1-17h0m0 2h0m0 4h0m0 2h0m0 6h0m0 7h0m0 1h0m1-24h0m0 6h0m0 2h0m0 3h0m0 6h0m0 3h0m1-22h0m0 3h0m0 2h0m0 4h0m0 6h0m0 9h0m0 1h0m1-26h0m0 1h0m0 11h0m0 2h0m0 3h0m0 3h0m0 1h0m0 5h0m0 4h0m1-25h0m0 3h0m0 6h0m0 4h0m0 5h0m0 3h0m0 6h0m1-22h0m0 4h0m0 1h0m0 3h0m0 3h0m1-17h0m0 4h0m0 2h0m0 6h0m0 8h0m1-23h0m0 5h0m0 3h0m0 3h0m0 1h0m0 1h0m0 5h0m0 4h0m1-19h0m0 7h0m0 4h0m0 4h0m0 2h0m0 3h0m0 1h0m1-18h0m0 2h0m0 4h0m0 1h0m0 2h0m1-10h0m0 6h0m0 5h0m0 7h0m1-18h0m0 9h0m0 5h0m0 1h0m1-15h0m0 3h0m0 1h0m0 1h0m0 1h0m1-4h0m0 7h0m0 3h0m0 3h0m0 3h0m0 3h0m1-24h0m0 6h0m0 3h0m0 3h0m0 1h0m0 17h0m1-30h0m0 3h0m0 2h0m0 11h0m0 2h0m0 5h0m1-21h0m0 3h0m0 5h0m0 6h0m0 4h0m1-19h0m0 1h0m0 5h0m0 3h0m0 2h0m0 2h0m0 7h0m1-21h0m0 4h0m0 4h0m0 6h0m0 5h0m0 1h0m1-30h0m0 5h0m0 1h0m0 5h0m0 21h0m0 2h0m1-31h0m0 6h0m0 6h0m0 1h0m0 4h0m0 1h0m0 1h0m0 4h0m0 6h0m0 6h0m1-35h0m0 6h0m0 2h0m0 2h0m0 5h0m0 9h0m0 2h0m1-15h0m0 3h0m0 2h0m0 3h0m0 2h0m0 1h0m0 4h0m0 2h0m1-23h0m0 6h0m0 7h0m0 3h0m0 5h0m1-20h0m0 2h0m0 9h0m0 5h0m0 1h0m0 2h0m1-18h0m0 1h0m0 1h0m0 5h0m0 5h0m0 6h0m0 1h0m1-25h0m0 1h0m0 2h0m0 7h0m0 5h0m0 2h0m0 2h0m1-15h0m0 1h0m0 1h0m0 1h0m1 0h0m0 4h0m0 3h0m0 4h0m0 1h0m0 3h0m0 5h0m1-21h0m0 1h0m0 2h0m0 3h0m0 4h0m0 1h0m0 2h0m0 3h0m0 6h0m0 1h0m1-28h0m0 2h0m0 6h0m0 5h0m0 5h0m1-15h0m0 3h0m0 1h0m0 6h0m0 1h0m0 2h0m0 5h0m1-23h0m0 3h0m0 2h0m0 5h0m0 2h0m0 1h0m0 3h0m0 4h0m1-9h0m0 4h0m0 2h0m0 3h0m0 3h0m0 6h0m1-25h0m0 4h0m0 9h0m0 3h0m0 1h0m0 2h0m1-22h0m0 5h0m0 1h0m0 7h0m0 3h0m0 8h0m1-27h0m0 13h0m0 7h0m0 4h0m1-17h0m0 3h0m0 3h0m0 5h0m0 1h0m0 3h0m0 4h0m0 2h0m0 1h0m1-25h0m0 12h0m0 3h0m0 3h0m0 2h0m1-14h0m0 1h0m0 1h0m0 1h0m0 4h0m0 5h0m0 2h0m0 6h0m1-25h0m0 6h0m0 7h0m0 1h0m0 3h0m1-18h0m0 3h0m0 2h0m0 5h0m0 1h0m0 5h0m0 4h0m0 2h0m0 4h0m1-17h0m0 3h0m0 2h0m0 5h0m0 3h0m0 5h0m0 1h0m1-22h0m0 4h0m0 8h0m0 4h0m0 5h0m0 2h0m1-27h0m0 3h0m0 4h0m0 2h0m0 2h0m0 2h0m0 2h0m0 1h0m0 1h0m0 2h0m0 2h0m1-17h0m0 1h0m0 7h0m0 6h0m0 3h0m1-22h0m0 2h0m0 8h0m0 5h0m0 1h0m0 3h0m0 4h0m1-22h0m0 7h0m0 7h0m0 2h0m0 10h0m1-23h0m0 2h0m0 3h0m0 2h0m0 3h0m0 2h0m0 1h0m0 2h0m0 3h0m1-20h0m0 4h0m0 2h0m0 4h0m0 3h0m0 1h0m0 1h0m0 9h0m2-25h0m0 3h0m0 1h0m0 6h0m0 7h0m0 1h0m0 2h0m0 2h0m0 1h0m0 5h0m1-25h0m0 2h0m0 1h0m0 3h0m0 4h0m0 2h0m0 2h0m0 8h0m0 2h0m1-20h0m0 5h0m0 1h0m0 5h0m0 5h0m1-16h0m0 2h0m0 5h0m0 1h0m0 2h0m0 6h0m0 2h0m0 1h0m0 1h0m0 2h0m1-22h0m0 1h0m0 3h0m0 7h0m0 1h0m1-19h0m0 7h0m0 2h0m0 1h0m0 2h0m0 8h0m0 1h0m1-20h0m0 1h0m0 8h0m0 5h0m0 1h0m0 5h0m0 2h0m0 3h0m1-27h0m0 7h0m0 8h0m0 1h0m0 3h0m0 3h0m0 2h0m1-24h0m0 3h0m0 6h0m0 4h0m0 1h0m0 3h0m0 10h0m1-17h0m0 2h0m0 5h0m0 3h0m0 1h0m0 6h0m1-26h0m0 4h0m0 7h0m0 3h0m0 1h0m0 5h0m0 1h0m0 5h0m1-31h0m0 8h0m0 4h0m0 1h0m0 1h0m0 8h0m0 1h0m1-19h0m0 2h0m0 3h0m0 3h0m0 2h0m0 6h0m0 1h0m0 11h0m1-25h0m0 4h0m0 5h0m0 2h0m0 7h0m1-23h0m0 8h0m0 2h0m0 4h0m0 2h0m0 1h0m0 5h0m1-20h0m0 5h0m0 1h0m0 6h0m0 3h0m0 1h0m0 3h0m0 2h0m0 2h0m0 4h0m0 1h0m1-23h0m0 4h0m0 1h0m0 2h0m0 1h0m0 2h0m0 4h0m1-14h0m0 14h0m0 3h0m0 2h0m1-24h0m0 7h0m0 3h0m0 2h0m0 1h0m0 2h0m0 3h0m1-17h0m0 3h0m0 7h0m0 2h0m1-17h0m0 3h0m0 7h0m0 3h0m0 2h0m0 5h0m0 7h0m0 3h0m0 3h0m1-30h0m0 3h0m0 8h0m0 8h0m0 1h0m0 2h0m0 1h0m0 3h0m1-30h0m0 1h0m0 4h0m0 4h0m0 4h0m0 6h0m0 1h0m0 1h0m0 2h0m0 5h0m0 7h0m1-29h0m0 4h0m0 2h0m0 3h0m0 1h0m0 9h0m1-7h0m0 1h0m0 4h0m0 3h0m0 4h0m0 1h0m0 3h0m1-30h0m0 9h0m0 2h0m0 1h0m0 9h0m0 3h0m1-27h0m0 2h0m0 2h0m0 1h0m0 4h0m0 3h0m0 6h0m0 2h0m0 1h0m0 1h0m0 8h0m1-29h0m0 4h0m0 4h0m0 4h0m0 3h0m0 4h0m0 1h0m0 4h0m0 2h0m1-22h0m0 6h0m0 7h0m0 1h0m0 2h0m0 4h0m2-12h0m0 2h0m0 6h0m0 1h0m0 4h0m0 1h0m0 4h0m1-25h0m0 4h0m0 5h0m0 2h0m0 3h0m0 2h0m0 1h0m0 3h0m0 2h0m1-15h0m0 7h0m0 4h0m0 1h0m0 5h0m1-25h0m0 3h0m0 3h0m0 4h0m0 4h0m0 3h0m0 6h0m0 3h0m1-18h0m0 4h0m0 1h0m0 1h0m0 3h0m0 1h0m0 3h0m1-16h0m0 16h0m0 8h0m1-25h0m0 3h0m0 3h0m0 1h0m0 19h0m1-29h0m0 11h0m0 3h0m0 3h0m0 2h0m1-27h0m0 16h0m0 4h0m0 9h0m1-20h0m0 4h0m0 4h0m0 1h0m0 3h0m0 4h0m0 3h0m0 2h0m0 2h0m1-24h0m0 5h0m0 2h0m0 8h0m0 1h0m0 6h0m1-24h0m0 2h0m0 2h0m0 6h0m0 4h0m0 9h0m0 5h0m1-30h0m0 1h0m0 14h0m0 2h0m0 1h0m0 1h0m1-14h0m0 3h0m0 2h0m0 1h0m0 2h0m0 8h0m0 3h0m0 2h0m0 2h0m2-19h0m0 2h0m0 3h0m0 1h0m0 2h0m0 2h0m0 1h0m1-16h0m0 5h0m0 1h0m0 5h0m0 2h0m0 5h0m0 1h0m0 1h0m0 3h0m1-23h0m0 3h0m0 9h0m0 2h0m0 3h0m0 5h0m0 5h0m1-33h0m0 2h0m0 7h0m0 1h0m0 2h0m0 3h0m0 2h0m0 2h0m0 6h0m0 1h0m0 5h0m1-29h0m0 4h0m0 1h0m0 7h0m0 20h0m1-30h0m0 4h0m0 3h0m0 10h0m0 1h0m0 1h0m0 1h0m0 2h0m1-20h0m0 1h0m0 6h0m0 4h0m0 2h0m0 7h0m1-17h0m0 1h0m0 2h0m0 3h0m0 3h0m0 3h0m0 4h0m0 1h0m0 1h0m1-22h0m0 4h0m0 1h0m0 8h0m0 1h0m0 3h0m0 7h0m1-26h0m0 8h0m0 3h0m0 1h0m0 4h0m0 5h0m1-18h0m0 1h0m0 12h0m0 8h0m0 3h0m0 4h0m0 1h0m1-32h0m0 2h0m0 8h0m0 1h0m0 1h0m0 3h0m0 4h0m0 1h0m0 1h0m0 6h0m0 2h0m0 2h0m0 3h0m1-29h0m0 4h0m0 15h0m0 5h0m0 3h0m1-24h0m0 4h0m0 1h0m0 3h0m0 3h0m0 2h0m0 2h0m0 2h0m0 6h0m1-27h0m0 3h0m0 2h0m0 2h0m1-15h0m0 6h0m0 1h0m0 5h0m0 5h0m0 3h0m0 2h0m0 2h0m0 1h0m0 2h0m1-23h0m0 5h0m0 3h0m0 5h0m0 7h0m0 2h0m1-13h0m0 3h0m0 5h0m1-10h0m0 7h0m0 16h0m1-26h0m0 4h0m0 1h0m0 7h0m0 4h0m0 1h0m1-16h0m0 3h0m0 4h0m0 3h0m0 3h0m0 1h0m0 2h0m0 1h0m0 3h0m0 2h0m1-16h0m0 3h0m0 4h0m0 2h0m0 4h0m1-18h0m0 3h0m0 6h0m0 5h0m0 1h0m0 5h0m1-20h0m0 1h0m0 6h0m0 4h0m1-9h0m0 2h0m0 2h0m0 1h0m0 1h0m0 5h0m0 4h0m0 1h0m1-21h0m0 14h0m0 4h0m0 1h0m0 3h0m1-26h0m0 7h0m0 2h0m0 3h0m0 3h0m0 4h0m0 6h0m0 1h0m1-14h0m0 5h0m0 5h0m0 2h0m0 3h0m1-24h0m0 4h0m0 8h0m0 3h0m0 2h0m0 4h0m0 1h0m0 2h0m0 4h0m1-30h0m0 3h0m0 1h0m0 4h0m0 3h0m0 8h0m0 2h0m1-15h0m0 1h0m0 1h0m0 3h0m0 1h0m0 1h0m0 2h0m0 1h0m0 3h0m0 4h0m0 5h0m0 2h0m0 4h0m1-30h0m0 7h0m0 7h0m0 3h0m0 1h0m0 1h0m0 3h0m1-25h0m0 2h0m0 10h0m0 4h0m0 3h0m0 2h0m0 3h0m0 3h0m1-31h0m0 3h0m0 9h0m0 5h0m0 1h0m0 12h0m1-26h0m0 3h0m0 1h0m0 3h0m0 2h0m0 3h0m0 6h0m0 1h0m0 9h0m1-27h0m0 3h0m0 1h0m0 4h0m0 2h0m0 1h0m0 3h0m0 2h0m0 2h0m0 3h0m1-26h0m0 12h0m0 1h0m0 8h0m1-19h0m0 8h0m0 3h0m0 4h0m0 1h0m0 4h0m0 1h0m0 1h0m0 1h0m0 6h0m1-28h0m0 4h0m0 4h0m0 3h0m0 4h0m0 4h0m0 7h0m1-19h0m0 1h0m0 2h0m0 4h0m0 1h0m0 5h0m0 1h0m0 1h0m1-25h0m0 2h0m0 6h0m0 3h0m0 5h0m0 5h0m0 4h0m0 2h0m0 1h0m0 4h0m1-27h0m0 3h0m0 4h0m0 4h0m0 2h0m0 6h0m1-15h0m0 4h0m0 4h0m0 4h0m0 3h0m1-20h0m0 1h0m0 5h0m0 1h0m0 3h0m0 1h0m0 3h0m1-16h0m0 1h0m0 3h0m0 4h0m0 9h0m0 3h0m0 3h0m0 4h0m1-30h0m0 4h0m0 5h0m0 1h0m0 6h0m0 4h0m0 5h0m0 1h0m0 2h0m0 3h0m0 1h0m1-32h0m0 6h0m0 6h0m0 2h0m0 3h0m0 12h0m0 3h0m1-22h0m0 6h0m0 2h0m0 3h0m0 1h0m0 1h0m1-17h0m0 1h0m0 8h0m0 1h0m0 1h0m0 4h0m0 2h0m0 1h0m0 2h0m0 5h0m1-30h0m0 1h0m0 5h0m0 3h0m0 4h0m0 6h0m0 3h0m0 4h0m0 2h0m1-25h0m0 8h0m0 4h0m0 7h0m0 3h0m0 1h0m0 3h0m0 1h0m0 4h0m1-27h0m0 1h0m0 2h0m0 3h0m0 1h0m0 2h0m0 4h0m0 6h0m0 6h0m1-30h0m0 2h0m0 1h0m0 7h0m0 1h0m0 3h0m0 2h0m0 4h0m0 13h0m1-31h0m0 6h0m0 2h0m0 8h0m0 1h0m0 7h0m0 1h0m0 1h0m0 1h0m0 1h0m0 5h0m1-30h0m0 4h0m0 1h0m0 3h0m0 3h0m0 2h0m0 2h0m0 5h0m2-17h0m0 2h0m0 2h0m0 3h0m0 3h0m0 1h0m0 2h0m0 1h0m0 3h0m1-22h0m0 2h0m0 5h0m0 3h0m0 6h0m0 2h0m0 2h0m1-23h0m0 2h0m0 8h0m0 4h0m0 7h0m0 1h0m0 3h0m0 1h0m1-17h0m0 8h0m0 1h0m0 4h0m0 5h0m0 2h0m0 2h0m1-30h0m0 1h0m0 10h0m0 1h0m0 6h0m0 2h0m1-17h0m0 4h0m0 5h0m0 3h0m0 6h0m0 3h0m0 2h0m1-20h0m0 2h0m0 1h0m0 4h0m0 8h0m0 1h0m1-9h0m0 4h0m0 1h0m0 2h0m0 5h0m0 2h0m1-22h0m0 5h0m0 2h0m0 4h0m0 2h0m1-15h0m0 4h0m0 1h0m0 4h0m0 2h0m0 1h0m0 5h0m0 2h0m0 3h0m1-23h0m0 5h0m0 3h0m0 2h0m0 8h0m0 2h0m0 2h0m0 4h0m0 3h0m1-30h0m0 7h0m0 4h0m0 1h0m0 5h0m0 7h0m0 5h0m1-25h0m0 7h0m0 2h0m0 3h0m0 4h0m0 7h0m1-25h0m0 3h0m0 2h0m0 1h0m0 6h0m0 5h0m0 4h0m0 1h0m0 1h0m1-23h0m0 3h0m0 1h0m0 3h0m0 6h0m1-15h0m0 9h0m0 3h0m0 5h0m0 3h0m0 1h0m2-22h0m0 6h0m0 8h0m0 2h0m0 1h0m0 2h0m0 2h0m1-18h0m0 6h0m0 2h0m0 11h0m0 3h0m0 1h0m1-31h0m0 5h0m0 7h0m0 5h0m0 2h0m0 3h0m0 8h0m1-27h0m0 1h0m0 7h0m0 12h0m0 2h0m0 2h0m0 4h0m1-24h0m0 2h0m0 4h0m0 1h0m0 7h0m0 5h0m0 6h0m1-21h0m0 4h0m0 3h0m0 1h0m0 2h0m0 3h0m0 2h0m0 2h0m1-7h0m0 3h0m0 2h0m0 4h0m0 3h0m1-19h0m0 2h0m0 5h0m0 11h0m0 6h0m1-28h0m0 2h0m0 6h0m0 3h0m0 6h0m0 2h0m1-10h0m0 4h0m0 1h0m0 1h0m1-22h0m0 8h0m0 2h0m0 2h0m0 5h0m0 6h0m0 3h0m1-14h0m0 5h0m0 1h0m0 3h0m0 1h0m0 7h0m1-23h0m0 1h0m0 1h0m0 7h0m0 9h0m0 1h0m1-19h0m0 2h0m0 2h0m0 4h0m0 4h0m0 1h0m0 2h0m0 1h0m0 6h0m0 1h0m1-27h0m0 6h0m0 5h0m0 2h0m0 2h0m0 1h0m0 3h0m0 3h0m1-15h0m0 2h0m0 2h0m0 4h0m0 2h0m0 9h0m1-19h0m0 2h0m0 3h0m0 2h0m0 3h0m0 2h0m0 1h0m0 4h0m1-20h0m0 4h0m0 1h0m0 5h0m0 1h0m0 4h0m0 5h0m0 2h0m1-20h0m0 9h0m0 5h0m0 2h0m0 8h0m1-24h0m0 2h0m0 2h0m0 3h0m0 1h0m0 2h0m0 5h0m1-17h0m0 8h0m0 2h0m0 2h0m0 1h0m0 3h0m0 4h0m0 1h0m1-19h0m0 4h0m0 1h0m0 5h0m0 2h0m0 2h0m0 4h0m0 4h0m1-22h0m0 5h0m0 1h0m0 6h0m0 4h0m0 3h0m0 5h0m1-15h0m0 3h0m0 4h0m0 1h0m0 5h0m1-24h0m0 5h0m0 1h0m0 1h0m0 2h0m0 7h0m0 2h0m1-17h0m0 9h0m0 1h0m0 3h0m0 3h0m0 2h0m1-24h0m0 6h0m0 2h0m0 4h0m0 4h0m0 2h0m0 8h0m0 4h0m0 1h0m1-35h0m0 7h0m0 7h0m0 10h0m0 1h0m0 1h0m0 1h0m0 2h0m1-29h0m0 1h0m0 7h0m0 1h0m0 8h0m0 2h0m0 4h0m0 1h0m0 4h0m0 6h0m1-34h0m0 3h0m0 8h0m0 5h0m0 2h0m0 4h0m0 1h0m0 7h0m0 4h0m0 3h0m1-37h0m0 7h0m0 2h0m0 3h0m0 2h0m0 1h0m0 6h0m0 10h0m1-13h0m0 3h0m0 1h0m0 1h0m0 8h0m1-26h0m0 5h0m0 3h0m0 2h0m0 2h0m0 5h0m0 1h0m0 5h0m0 3h0m1-24h0m0 4h0m0 4h0m0 5h0m0 3h0m0 10h0m1-20h0m0 4h0m0 4h0m0 4h0m0 2h0m2-22h0m0 10h0m0 3h0m0 5h0m0 1h0m0 1h0m0 4h0m1-18h0m0 1h0m0 3h0m0 3h0m0 3h0m0 1h0m0 4h0m0 1h0m0 3h0m0 1h0m1-16h0m0 2h0m0 1h0m0 4h0m0 3h0m0 3h0m0 1h0m1-24h0m0 4h0m0 3h0m0 2h0m0 2h0m0 3h0m0 4h0m0 1h0m1-21h0m0 13h0m0 14h0m0 2h0m1-25h0m0 5h0m0 2h0m0 4h0m0 3h0m0 6h0m0 4h0m0 4h0m1-34h0m0 8h0m0 8h0m0 5h0m0 1h0m0 1h0m0 1h0m0 1h0m0 2h0m0 5h0m1-27h0m0 11h0m0 2h0m0 1h0m0 1h0m6-39h0m1-9h0m0 1h0m0 1h0m0 5h0m0 1h0m0 2h0m0 1h0m0 2h0m0 1h0m0 2h0m0 1h0m0 1h0m0 1h0m0 2h0m0 2h0m0 2h0m0 7h0m1-27h0m0 12h0m0 5h0m0 6h0m0 2h0m0 2h0m1-44h0m0 2h0m0 3h0m0 7h0m0 2h0m0 1h0m0 1h0m0 15h0m0 6h0m0 6h0m0 2h0m0 1h0m1-46h0m0 1h0m0 1h0m0 2h0m0 1h0m0 1h0m0 5h0m0 2h0m0 3h0m0 1h0m0 3h0m0 1h0m0 2h0m0 1h0m0 3h0m0 2h0m0 1h0m0 2h0m0 5h0m0 1h0m0 1h0m0 3h0m1-31h0m0 16h0m0 3h0m0 4h0m0 1h0m0 5h0m0 3h0m0 5h0m2-29h0m0 6h0m0 8h0m0 1h0m0 4h0m0 4h0m1-32h0m0 6h0m0 3h0m0 3h0m0 1h0m0 3h0m0 1h0m0 1h0m0 1h0m0 1h0m0 6h0m0 4h0m0 1h0m0 1h0m0 2h0m0 2h0m0 5h0m1-28h0m0 7h0m0 3h0m0 2h0m0 4h0m0 9h0m0 4h0m0 2h0m0 5h0m1-31h0m0 4h0m0 9h0m0 4h0m0 1h0m0 1h0m0 3h0m0 1h0m0 4h0m0 4h0m0 2h0m1-36h0m0 1h0m0 3h0m0 3h0m0 3h0m0 2h0m0 1h0m0 3h0m0 1h0m0 4h0m0 3h0m0 6h0m0 1h0m0 1h0m0 3h0m0 8h0m1-68h0m0 7h0m0 1h0m0 2h0m0 1h0m0 2h0m0 1h0m0 2h0m0 1h0m0 1h0m0 1h0m0 2h0m0 3h0m0 6h0m0 1h0m0 8h0m0 3h0m1-31h0m0 1h0m0 1h0m0 6h0m0 4h0m0 2h0m0 2h0m0 2h0m0 3h0m0 3h0m0 7h0m0 1h0m0 5h0m2-4h0m0 8h0m0 5h0m1-36h0m0 10h0m0 2h0m0 1h0m0 3h0m0 1h0m0 4h0m0 1h0m0 1h0m0 1h0m0 1h0m0 2h0m0 2h0m0 4h0m1-29h0m0 5h0m0 9h0m0 3h0m0 2h0m0 2h0m0 4h0m0 4h0m0 2h0m1-46h0m0 12h0m0 5h0m0 1h0m0 2h0m0 1h0m0 3h0m0 5h0m0 1h0m0 1h0m0 4h0m0 6h0m0 5h0m1-26h0m0 7h0m0 2h0m0 2h0m0 3h0m0 5h0m0 2h0m0 4h0m0 1h0m0 3h0m1-37h0m0 9h0m0 1h0m0 2h0m0 2h0m0 1h0m0 1h0m0 4h0m0 3h0m0 2h0m0 1h0m0 2h0m0 4h0m0 1h0m0 1h0m0 1h0m0 3h0m0 2h0m0 2h0m4-47h0m0 4h0m0 7h0m0 1h0m0 3h0m0 3h0m0 1h0m0 2h0m0 1h0m0 4h0m0 1h0m0 1h0m0 2h0m0 1h0m0 9h0m1-37h0m0 2h0m0 5h0m0 1h0m0 3h0m0 3h0m0 3h0m0 1h0m0 2h0m0 3h0m0 9h0m0 5h0m1-43h0m0 20h0m0 5h0m0 4h0m0 3h0m0 3h0m0 4h0m0 2h0m0 1h0m0 6h0m0 7h0m1-48h0m0 2h0m0 2h0m0 4h0m0 1h0m0 6h0m0 5h0m0 1h0m0 3h0m0 3h0m0 1h0m1-37h0m0 12h0m0 2h0m0 1h0m0 5h0m0 1h0m0 2h0m0 1h0m0 1h0m0 2h0m0 1h0m0 1h0m0 1h0m0 4h0m0 3h0m0 4h0m0 2h0m1-34h0m0 8h0m3-15h0m0 3h0m0 4h0m0 1h0m0 2h0m0 1h0m0 1h0m0 2h0m0 3h0m0 2h0m0 2h0m0 1h0m0 3h0m0 2h0m0 3h0m1-30h0m0 8h0m0 4h0m0 1h0m0 1h0m0 2h0m0 1h0m0 3h0m0 1h0m0 3h0m0 1h0m0 3h0m0 4h0m1-37h0m0 1h0m0 2h0m0 1h0m0 3h0m0 3h0m0 5h0m0 5h0m0 1h0m0 5h0m0 5h0m0 5h0m0 1h0m0 7h0m1-45h0m0 5h0m0 4h0m0 2h0m0 2h0m0 1h0m0 1h0m0 1h0m0 3h0m0 1h0m0 1h0m0 1h0m0 7h0m0 5h0m1-27h0m0 2h0m0 11h0m0 8h0m2-24h0m0 2h0m0 2h0m0 4h0m0 3h0m0 2h0m0 1h0m0 4h0m0 2h0m0 3h0m0 5h0m1-28h0m0 4h0m0 3h0m0 6h0m0 2h0m0 1h0m0 7h0m0 3h0m0 3h0m1-26h0m0 7h0m0 11h0m0 3h0m0 1h0m0 1h0m0 4h0m0 2h0m0 2h0m1-31h0m0 2h0m0 3h0m0 3h0m0 4h0m0 2h0m0 2h0m0 3h0m0 2h0m0 2h0m0 3h0m0 1h0m0 9h0m1-35h0m0 11h0m0 1h0m0 3h0m0 2h0m0 2h0m0 4h0m0 3h0m0 1h0m0 3h0m0 1h0m0 4h0m0 2h0m0 1h0m0 4h0m1-53h0m0 12h0m0 5h0m0 1h0m0 2h0m0 1h0m0 1h0m0 3h0m0 2h0m0 10h0m0 10h0m2-20h0m0 4h0m0 1h0m0 4h0m0 9h0m1-46h0m0 17h0m0 5h0m0 2h0m0 3h0m0 1h0m0 2h0m0 2h0m0 3h0m0 1h0m0 1h0m0 3h0m0 2h0m1-23h0m0 11h0m0 8h0m0 3h0m0 5h0m0 4h0m1-49h0m0 13h0m0 3h0m0 5h0m0 4h0m0 1h0m0 5h0m0 1h0m0 3h0m0 3h0m0 2h0m0 4h0m0 3h0m1-32h0m0 7h0m0 11h0m0 1h0m0 4h0m0 5h0m0 5h0m1-38h0m0 9h0m0 1h0m0 1h0m0 1h0m0 2h0m0 2h0m0 1h0m0 2h0m0 7h0m0 2h0m0 5h0m0 2h0m1-28h0m0 15h0m2-20h0m0 3h0m0 6h0m0 5h0m0 14h0m1-29h0m0 4h0m0 3h0m0 2h0m0 2h0m0 1h0m0 1h0m0 2h0m0 1h0m0 1h0m0 2h0m0 1h0m0 1h0m0 4h0m1-24h0m0 2h0m0 1h0m0 6h0m0 7h0m0 3h0m0 3h0m0 3h0m0 2h0m0 6h0m1-41h0m0 10h0m0 18h0m0 5h0m0 4h0m0 5h0m0 5h0m1-49h0m0 15h0m0 1h0m0 6h0m0 3h0m0 5h0m0 1h0m0 4h0m0 12h0m1-36h0m0 6h0m0 1h0m0 1h0m0 4h0m0 2h0m0 3h0m0 2h0m0 2h0m0 3h0m0 1h0m1-24h0m0 1h0m0 6h0m0 1h0m0 1h0m0 2h0m0 4h0m0 1h0m0 1h0m0 1h0m0 1h0m0 1h0m0 2h0m0 3h0m0 1h0m4-26h0m0 1h0m0 2h0m0 5h0m0 4h0m0 3h0m0 1h0m0 1h0m0 1h0m0 2h0m0 1h0m0 3h0m0 1h0m0 2h0m0 1h0m0 3h0m1-24h0m0 2h0m0 2h0m0 5h0m0 7h0m0 3h0m0 2h0m0 5h0m1-25h0m0 4h0m0 1h0m0 5h0m0 3h0m0 11h0m0 3h0m1-35h0m0 1h0m0 4h0m0 1h0m0 18h0m0 2h0m0 4h0m0 1h0m0 1h0m0 4h0m0 12h0m1-52h0m0 7h0m0 2h0m0 2h0m0 3h0m0 1h0m0 3h0m0 3h0m0 1h0m0 4h0m0 6h0m0 1h0m1-31h0m0 4h0m0 1h0m0 10h0m0 3h0m0 3h0m0 1h0m0 2h0m1-25h0m0 1h0m0 11h0m0 1h0m0 1h0m0 1h0m0 3h0m0 2h0m0 2h0m0 2h0m0 14h0m0 2h0m1-37h0m0 2h0m0 3h0m0 4h0m0 3h0m0 4h0m0 2h0m0 1h0m0 1h0m0 4h0m0 1h0m0 1h0m0 2h0m0 1h0m0 4h0m0 2h0m0 4h0m1-34h0m0 1h0m0 4h0m0 5h0m0 1h0m0 3h0m0 5h0m0 5h0m0 1h0m0 6h0m0 15h0m1-52h0m0 2h0m0 5h0m0 5h0m0 2h0m0 7h0m0 2h0m0 2h0m0 3h0m0 1h0m1-48h0m0 1h0m0 4h0m0 3h0m0 6h0m0 4h0m0 14h0m1-32h0m0 3h0m0 2h0m0 2h0m0 3h0m0 3h0m0 1h0m0 6h0m0 2h0m0 5h0m0 1h0m0 1h0m0 1h0m0 4h0m0 2h0m0 1h0m0 5h0m1-42h0m0 1h0m0 8h0m0 6h0m0 3h0m0 4h0m0 14h0m0 3h0m0 2h0m0 4h0m0 3h0m0 1h0m0 1h0m0 1h0m0 1h0m1-52h0m0 1h0m0 2h0m0 1h0m0 2h0m0 3h0m0 2h0m0 1h0m0 3h0m0 2h0m0 7h0m0 2h0m0 1h0m0 2h0m0 4h0m0 6h0m0 3h0m0 11h0m1-53h0m0 1h0m0 1h0m0 1h0m0 1h0m0 1h0m0 1h0m0 3h0m0 1h0m0 2h0m0 1h0m0 5h0m0 1h0m0 2h0m0 3h0m0 6h0m0 1h0m0 5h0m0 2h0m0 1h0m0 6h0m1-22h0m0 2h0m0 7h0m0 1h0m0 1h0m0 8h0m0 4h0m0 2h0m0 3h0m0 2h0m0 3h0m0 7h0m1-36h0m0 8h0m0 8h0m0 1h0m0 4h0m0 3h0m0 4h0m1-35h0m0 2h0m0 7h0m0 9h0m0 3h0m0 1h0m0 4h0m0 3h0m0 4h0m0 1h0m1-31h0m0 7h0m0 3h0m0 2h0m0 3h0m0 1h0m0 2h0m0 8h0m0 1h0m0 3h0m0 1h0m1-46h0m0 12h0m0 3h0m0 1h0m0 2h0m0 4h0m0 1h0m0 2h0m0 4h0m0 1h0m0 1h0m0 1h0m0 4h0m0 8h0m1-31h0m0 7h0m0 6h0m0 1h0m0 1h0m0 2h0m0 4h0m0 5h0m0 1h0m0 17h0m4-59h0m0 10h0m0 1h0m0 5h0m0 4h0m0 2h0m0 2h0m0 1h0m0 2h0m0 2h0m0 1h0m0 1h0m0 1h0m0 1h0m0 2h0m0 2h0m0 1h0m0 2h0m1-39h0m0 11h0m0 1h0m0 1h0m0 5h0m0 5h0m0 4h0m0 3h0m0 3h0m0 5h0m0 2h0m0 3h0m0 1h0m0 2h0m1-6h0m0 3h0m0 1h0m0 4h0m0 3h0m0 1h0m0 3h0m1-43h0m0 2h0m0 1h0m0 3h0m0 1h0m0 3h0m0 2h0m0 1h0m0 2h0m0 1h0m0 5h0m0 3h0m0 6h0m1-31h0m0 2h0m0 6h0m0 10h0m0 1h0m0 4h0m0 2h0m0 2h0m0 2h0m1-23h0m0 7h0m0 1h0m0 1h0m0 11h0m0 6h0m0 6h0m1-32h0m0 4h0m0 1h0m0 2h0m0 1h0m0 1h0m0 4h0m0 1h0m0 1h0m0 6h0m0 1h0m1-25h0m0 5h0m0 3h0m0 6h0m0 3h0m0 3h0m0 3h0m0 5h0m0 3h0m0 2h0m0 6h0m0 2h0m0 5h0m1-39h0m0 1h0m0 4h0m0 1h0m0 2h0m0 3h0m0 1h0m0 2h0m0 1h0m0 4h0m0 1h0m0 1h0m0 1h0m0 12h0m2-62h0m0 1h0m0 16h0m0 3h0m0 1h0m0 10h0m0 7h0m1-35h0m0 8h0m0 1h0m0 3h0m0 1h0m0 1h0m0 4h0m0 5h0m0 2h0m0 5h0m0 2h0m5 1h0m0 4h0m0 4h0m0 4h0m1-27h0m0 17h0m0 7h0m0 1h0m0 3h0m0 2h0m0 1h0m0 1h0m0 4h0m0 3h0m0 5h0m1-39h0m0 6h0m0 1h0m0 1h0m0 8h0m0 3h0m0 1h0m0 6h0m0 1h0m0 2h0m0 1h0m0 1h0m1-25h0m0 9h0m0 3h0m0 1h0m0 3h0m0 5h0m0 2h0m0 2h0m1-22h0m0 2h0m0 1h0m0 2h0m0 7h0m0 3h0m0 6h0m1-20h0m0 5h0m0 1h0m0 3h0m0 5h0m0 7h0m0 5h0m1-19h0m0 5h0m0 5h0m0 1h0m0 1h0m1-34h0m0 4h0m0 3h0m0 3h0m0 7h0m0 3h0m0 1h0m0 3h0m0 3h0m1-3h0m0 5h0m0 1h0m0 4h0m0 1h0m1-18h0m0 2h0m0 5h0m0 2h0m0 6h0m0 4h0m0 7h0m0 2h0m1-37h0m0 4h0m0 8h0m0 1h0m0 7h0m0 4h0m0 1h0m0 3h0m1-14h0m0 3h0m0 1h0m0 8h0m0 1h0m0 3h0m1-31h0m0 11h0m0 2h0m0 2h0m0 5h0m0 1h0m0 2h0m0 6h0m0 6h0m1-26h0m0 5h0m0 11h0m0 3h0m0 10h0m1-32h0m0 3h0m0 1h0m0 1h0m0 6h0m0 7h0m0 1h0m0 1h0m1-12h0m0 4h0m0 1h0m0 2h0m0 1h0m0 4h0m0 5h0m1-19h0m0 2h0m0 5h0m0 5h0m0 2h0m0 7h0m0 2h0m0 1h0m1-24h0m0 8h0m0 1h0m0 1h0m0 2h0m0 11h0m0 3h0" fill="none" stroke="#000" stroke-width="3.7" stroke-linecap="round"/>
<g fill="#ffa500"><circle cx="215.5" cy="128.5" r="1.85"/><circle cx="240.5" cy="125.5" r="1.85"/><circle cx="240.5" cy="126.5" r="1.85"/><circle cx="240.5" cy="127.5" r="1.85"/><circle cx="249.5" cy="130.5" r="1.85"/><circle cx="283.5" cy="130.5" r="1.85"/><circle cx="287.5" cy="124.5" r="1.85"/><circle cx="287.5" cy="126.5" r="1.85"/><circle cx="380.5" cy="129.5" r="1.85"/><circle cx="409.5" cy="128.5" r="1.85"/><circle cx="456.5" cy="125.5" r="1.85"/><circle cx="203.5" cy="178.5" r="1.85"/><circle cx="224.5" cy="171.5" r="1.85"/><circle cx="276.5" cy="171.5" r="1.85"/><circle cx="304.5" cy="171.5" r="1.85"/><circle cx="338.5" cy="171.5" r="1.85"/><circle cx="339.5" cy="176.5" r="1.85"/><circle cx="348.5" cy="174.5" r="1.85"/><circle cx="388.5" cy="177.5" r="1.85"/><circle cx="393.5" cy="175.5" r="1.85"/><circle cx="393.5" cy="177.5" r="1.85"/><circle cx="391.5" cy="183.5" r="1.85"/><circle cx="393.5" cy="189.5" r="1.85"/><circle cx="361.5" cy="202.5" r="1.85"/><circle cx="480.5" cy="128.5" r="1.85"/><circle cx="480.5" cy="129.5" r="1.85"/><circle cx="479.5" cy="130.5" r="1.85"/><circle cx="553.5" cy="125.5" r="1.85"/><circle cx="601.5" cy="129.5" r="1.85"/><circle cx="649.5" cy="123.5" r="1.85"/><circle cx="649.5" cy="128.5" r="1.85"/><circle cx="648.5" cy="129.5" r="1.85"/><circle cx="673.5" cy="128.5" r="1.85"/><circle cx="672.5" cy="130.5" r="1.85"/><circle cx="725.5" cy="125.5" r="1.85"/><circle cx="474.5" cy="182.5" r="1.85"/><circle cx="595.5" cy="172.5" r="1.85"/><circle cx="675.5" cy="172.5" r="1.85"/><circle cx="675.5" cy="173.5" r="1.85"/><circle cx="770.5" cy="124.5" r="1.85"/><circle cx="788.5" cy="129.5" r="1.85"/><circle cx="794.5" cy="130.5" r="1.85"/><circle cx="865.5" cy="127.5" r="1.85"/><circle cx="864.5" cy="130.5" r="1.85"/><circle cx="890.5" cy="127.5" r="1.85"/><circle cx="893.5" cy="129.5" r="1.85"/><circle cx="961.5" cy="127.5" r="1.85"/><circle cx="961.5" cy="129.5" r="1.85"/><circle cx="986.5" cy="126.5" r="1.85"/><circle cx="1010.5" cy="127.5" r="1.85"/><circle cx="1029.5" cy="128.5" r="1.85"/><circle cx="1058.5" cy="126.5" r="1.85"/><circle cx="1057.5" cy="129.5" r="1.85"/><circle cx="844.5" cy="173.5" r="1.85"/><circle cx="848.5" cy="187.5" r="1.85"/><circle cx="1049.5" cy="173.5" r="1.85"/><circle cx="771.5" cy="204.5" r="1.85"/><circle cx="1058.5" cy="128.5" r="1.85"/><circle cx="1057.5" cy="129.5" r="1.85"/><circle cx="1106.5" cy="128.5" r="1.85"/><circle cx="1112.5" cy="128.5" r="1.85"/><circle cx="1070.5" cy="172.5" r="1.85"/><circle cx="1117.5" cy="174.5" r="1.85"/><circle cx="1184.5" cy="88.5" r="1.85"/><circle cx="1257.5" cy="87.5" r="1.85"/><circle cx="1254.5" cy="89.5" r="1.85"/><circle cx="1256.5" cy="90.5" r="1.85"/><circle cx="1260.5" cy="198.5" r="1.85"/><circle cx="1201.5" cy="210.5" r="1.85"/><circle cx="1285.5" cy="111.5" r="1.85"/><circle cx="1290.5" cy="111.5" r="1.85"/><circle cx="1286.5" cy="113.5" r="1.85"/><circle cx="776.5" cy="277.5" r="1.85"/><circle cx="813.5" cy="212.5" r="1.85"/><circle cx="844.5" cy="256.5" r="1.85"/><circle cx="918.5" cy="274.5" r="1.85"/><circle cx="962.5" cy="249.5" r="1.85"/><circle cx="1257.5" cy="79.5" r="1.85"/></g>
<line x1="105.5" y1="162" x2="1361" y2="162" stroke="#008000" stroke-width="2"/>
<g stroke="#800080" stroke-width="2.1" stroke-dasharray="2.08 3.441"><line x1="162.0" y1="321.05" x2="162.0" y2="35.5"/><line x1="1176.0" y1="321.05" x2="1176.0" y2="35.5"/><line x1="1279.9" y1="321.05" x2="1279.9" y2="35.5"/><line x1="1302.9" y1="321.05" x2="1302.9" y2="35.5"/></g>
</g>
<rect x="105.5" y="35.5" width="1380.0" height="286.0" fill="none" stroke="#000" stroke-width="1.1"/>
<line x1="162.5" y1="321.5" x2="162.5" y2="326.4" stroke="#000" stroke-width="1.1"/><text x="162.9" y="341.9" text-anchor="middle">0</text><line x1="336.5" y1="321.5" x2="336.5" y2="326.4" stroke="#000" stroke-width="1.1"/><text x="336.9" y="341.9" text-anchor="middle">2500</text><line x1="510.5" y1="321.5" x2="510.5" y2="326.4" stroke="#000" stroke-width="1.1"/><text x="510.9" y="341.9" text-anchor="middle">5000</text><line x1="684.5" y1="321.5" x2="684.5" y2="326.4" stroke="#000" stroke-width="1.1"/><text x="684.9" y="341.9" text-anchor="middle">7500</text><line x1="859.5" y1="321.5" x2="859.5" y2="326.4" stroke="#000" stroke-width="1.1"/><text x="859.9" y="341.9" text-anchor="middle">10000</text><line x1="1033.5" y1="321.5" x2="1033.5" y2="326.4" stroke="#000" stroke-width="1.1"/><text x="1033.9" y="341.9" text-anchor="middle">12500</text><line x1="1207.5" y1="321.5" x2="1207.5" y2="326.4" stroke="#000" stroke-width="1.1"/><text x="1207.9" y="341.9" text-anchor="middle">15000</text><line x1="1381.5" y1="321.5" x2="1381.5" y2="326.4" stroke="#000" stroke-width="1.1"/><text x="1381.9" y="341.9" text-anchor="middle">17500</text>
<line x1="100.6" y1="42.5" x2="105.5" y2="42.5" stroke="#000" stroke-width="1.1"/><text x="95.2" y="46.8" text-anchor="end">7.700</text><line x1="100.6" y1="79.5" x2="105.5" y2="79.5" stroke="#000" stroke-width="1.1"/><text x="95.2" y="83.8" text-anchor="end">7.675</text><line x1="100.6" y1="116.5" x2="105.5" y2="116.5" stroke="#000" stroke-width="1.1"/><text x="95.2" y="120.8" text-anchor="end">7.650</text><line x1="100.6" y1="153.5" x2="105.5" y2="153.5" stroke="#000" stroke-width="1.1"/><text x="95.2" y="157.8" text-anchor="end">7.625</text><line x1="100.6" y1="189.5" x2="105.5" y2="189.5" stroke="#000" stroke-width="1.1"/><text x="95.2" y="193.8" text-anchor="end">7.600</text><line x1="100.6" y1="226.5" x2="105.5" y2="226.5" stroke="#000" stroke-width="1.1"/><text x="95.2" y="230.8" text-anchor="end">7.575</text><line x1="100.6" y1="263.5" x2="105.5" y2="263.5" stroke="#000" stroke-width="1.1"/><text x="95.2" y="267.8" text-anchor="end">7.550</text><line x1="100.6" y1="300.5" x2="105.5" y2="300.5" stroke="#000" stroke-width="1.1"/><text x="95.2" y="304.8" text-anchor="end">7.525</text>
<text x="794.9" y="27" text-anchor="middle" font-size="16.67px">AGASC ID 727453000</text>
<text x="647.6" y="312" >11780</text><text x="1206.2" y="292">27226</text><text x="1270.2" y="272">43587</text>
<rect x="1361.3" y="42.3" width="117.4" height="27.4" rx="2.8" fill="#fff" fill-opacity=".8" stroke="#ccc" stroke-width="1.1"/>
<line x1="1366" y1="53.8" x2="1396" y2="53.8" stroke="#008000" stroke-width="2.1"/>
<text x="1406.9" y="58.6">mag<tspan font-size="9.72px" font-style="oblique" dy="2.3" dx="-.6" letter-spacing=".25">AGASC</tspan></text>
<rect x="1348.3" y="247.3" width="130.4" height="67" rx="2.8" fill="#fff" fill-opacity=".8" stroke="#ccc" stroke-width="1.1"/>
<circle cx="1367.5" cy="260.3" r="1.9" fill="#f00"/><circle cx="1367.5" cy="281.4" r="1.9" fill="#ffa500"/><circle cx="1367.5" cy="302.4" r="1.9" fill="#000"/>
<text x="1392.2" y="263.7">not OK</text><text x="1392.7" y="284.8">Highlighted</text><text x="1392.8" y="305.8">OK</text>
<g clip-path="url(#c2)">
<path transform="translate(.5 .5)" d="m166 498h0m0 13h0m0 2h0m0 1h0m0 17h0m0 10h0m0 6h0m1-42h0m0 1h0m0 1h0m0 5h0m0 5h0m0 1h0m0 5h0m0 6h0m0 1h0m0 5h0m0 3h0m0 9h0m1-57h0m0 17h0m0 6h0m0 2h0m0 3h0m0 3h0m0 1h0m0 3h0m0 2h0m0 7h0m0 7h0m0 10h0m1-42h0m0 10h0m0 2h0m0 2h0m0 1h0m0 4h0m0 13h0m0 1h0m0 7h0m0 16h0m1-57h0m0 3h0m0 8h0m0 1h0m0 6h0m0 1h0m0 3h0m0 3h0m0 5h0m0 6h0m1-60h0m0 19h0m0 4h0m0 8h0m0 1h0m0 20h0m0 6h0m0 2h0m0 2h0m0 6h0m0 8h0m0 11h0m1-83h0m0 23h0m0 2h0m0 4h0m0 14h0m0 5h0m0 3h0m0 1h0m0 12h0m0 2h0m0 12h0m0 1h0m1-67h0m0 16h0m0 5h0m0 5h0m0 2h0m0 7h0m0 6h0m0 2h0m0 6h0m0 2h0m1-43h0m0 3h0m0 3h0m0 2h0m0 5h0m0 2h0m0 7h0m0 4h0m0 8h0m0 14h0m0 2h0m1-53h0m0 10h0m0 4h0m0 3h0m0 5h0m0 1h0m0 1h0m0 8h0m0 3h0m0 3h0m0 2h0m0 8h0m1-58h0m0 6h0m0 4h0m0 5h0m0 12h0m0 12h0m0 2h0m0 3h0m0 3h0m0 8h0m0 9h0m1-47h0m0 5h0m0 8h0m0 1h0m0 3h0m0 4h0m0 6h0m0 6h0m1-34h0m0 1h0m0 3h0m0 5h0m0 4h0m0 3h0m0 4h0m0 2h0m0 3h0m0 3h0m0 1h0m0 11h0m0 8h0m1-48h0m0 14h0m0 1h0m0 4h0m0 8h0m0 4h0m0 3h0m0 4h0m0 6h0m0 1h0m1-45h0m0 3h0m0 2h0m0 3h0m0 3h0m0 3h0m0 1h0m0 4h0m0 9h0m1-27h0m0 9h0m0 5h0m0 5h0m0 3h0m0 2h0m0 10h0m0 1h0m0 1h0m0 1h0m0 8h0m0 1h0m1-44h0m0 3h0m0 7h0m0 2h0m0 2h0m0 2h0m0 2h0m0 4h0m0 5h0m0 2h0m0 20h0m1-43h0m0 1h0m0 4h0m0 2h0m0 2h0m0 6h0m0 8h0m0 4h0m0 8h0m1-60h0m0 11h0m0 12h0m0 3h0m0 5h0m0 3h0m0 3h0m0 8h0m0 4h0m0 15h0m1-44h0m0 6h0m0 2h0m0 1h0m0 5h0m0 3h0m0 2h0m0 3h0m0 6h0m0 2h0m0 5h0m1-28h0m0 2h0m0 1h0m0 6h0m0 2h0m0 1h0m0 11h0m0 3h0m2-39h0m0 4h0m0 7h0m0 6h0m0 11h0m0 1h0m0 5h0m1-37h0m0 9h0m0 5h0m0 2h0m0 2h0m0 11h0m0 1h0m0 4h0m0 7h0m1-48h0m0 9h0m0 3h0m0 14h0m0 3h0m0 2h0m0 1h0m0 3h0m0 6h0m0 6h0m1-39h0m0 8h0m0 3h0m0 6h0m0 9h0m0 5h0m0 3h0m0 2h0m0 1h0m0 11h0m0 4h0m1-42h0m0 1h0m0 1h0m0 3h0m0 4h0m0 1h0m0 2h0m0 2h0m0 6h0m0 4h0m0 12h0m0 5h0m1-68h0m0 3h0m0 3h0m0 3h0m0 12h0m0 1h0m0 14h0m0 10h0m0 4h0m0 8h0m0 9h0m1-67h0m0 3h0m0 1h0m0 3h0m0 3h0m0 8h0m0 8h0m0 2h0m0 2h0m0 4h0m0 7h0m0 5h0m0 18h0m0 17h0m1-83h0m0 17h0m0 11h0m0 4h0m0 3h0m0 5h0m0 6h0m0 10h0m0 1h0m0 2h0m0 4h0m0 2h0m1-42h0m0 4h0m0 11h0m0 1h0m0 1h0m0 4h0m0 5h0m0 1h0m0 1h0m0 7h0m0 25h0m1-56h0m0 1h0m0 6h0m0 3h0m0 5h0m0 5h0m0 1h0m0 1h0m0 6h0m1-33h0m0 2h0m0 5h0m0 1h0m0 2h0m0 13h0m0 2h0m0 4h0m0 7h0m0 1h0m0 9h0m0 17h0m1-64h0m0 2h0m0 5h0m0 3h0m0 4h0m0 1h0m0 4h0m0 9h0m0 3h0m0 4h0m0 4h0m1-30h0m0 1h0m0 6h0m0 6h0m0 1h0m0 4h0m0 2h0m0 13h0m0 3h0m0 1h0m0 2h0m0 1h0m1-44h0m0 4h0m0 2h0m0 5h0m0 17h0m0 4h0m0 2h0m0 6h0m0 5h0m0 10h0m1-56h0m0 5h0m0 13h0m0 1h0m0 1h0m0 4h0m0 1h0m0 2h0m0 9h0m0 2h0m1-38h0m0 4h0m0 5h0m0 2h0m0 2h0m0 2h0m0 2h0m0 2h0m0 1h0m0 4h0m0 2h0m0 3h0m0 2h0m1-34h0m0 6h0m0 14h0m0 1h0m0 8h0m0 3h0m0 2h0m0 7h0m0 6h0m0 4h0m1-52h0m0 3h0m0 3h0m0 5h0m0 2h0m0 2h0m0 5h0m0 3h0m0 3h0m0 4h0m0 8h0m0 9h0m1-58h0m0 5h0m0 11h0m0 4h0m0 3h0m0 4h0m0 9h0m0 5h0m0 3h0m0 4h0m0 13h0m1-54h0m0 5h0m0 1h0m0 8h0m0 1h0m0 2h0m0 3h0m0 7h0m0 5h0m0 1h0m0 12h0m1-57h0m0 14h0m0 10h0m0 1h0m0 2h0m0 8h0m0 5h0m0 6h0m0 2h0m0 10h0m0 12h0m1-62h0m0 5h0m0 4h0m0 4h0m0 4h0m0 6h0m0 4h0m0 1h0m0 3h0m0 4h0m0 4h0m0 5h0m0 16h0m1-59h0m0 10h0m0 2h0m0 10h0m0 7h0m0 1h0m0 4h0m0 4h0m0 17h0m1-57h0m0 1h0m0 3h0m0 13h0m0 2h0m0 2h0m0 1h0m0 2h0m0 1h0m0 2h0m0 6h0m0 6h0m1-43h0m0 10h0m0 10h0m0 3h0m0 2h0m0 6h0m0 2h0m0 1h0m0 2h0m0 10h0m0 1h0m0 6h0m1-44h0m0 2h0m0 2h0m0 1h0m0 2h0m0 2h0m0 1h0m0 5h0m0 11h0m0 1h0m0 3h0m0 2h0m0 7h0m0 7h0m0 5h0m1-62h0m0 8h0m0 10h0m0 6h0m0 2h0m0 3h0m0 3h0m0 2h0m0 11h0m0 14h0m0 7h0m0 6h0m1-70h0m0 2h0m0 1h0m0 1h0m0 1h0m0 11h0m0 4h0m0 9h0m0 11h0m0 4h0m0 2h0m0 9h0m1-47h0m0 12h0m0 6h0m0 5h0m0 7h0m0 2h0m0 8h0m0 4h0m0 8h0m0 1h0m1-39h0m0 3h0m0 6h0m0 6h0m0 4h0m0 4h0m0 2h0m0 3h0m0 1h0m1-37h0m0 7h0m0 7h0m0 2h0m0 2h0m0 10h0m0 4h0m0 9h0m1-31h0m0 7h0m0 5h0m0 2h0m0 1h0m0 1h0m0 1h0m0 4h0m0 1h0m0 7h0m0 3h0m1-35h0m0 5h0m0 4h0m0 12h0m0 7h0m0 6h0m0 3h0m0 8h0m0 7h0m1-63h0m0 13h0m0 4h0m0 9h0m0 2h0m0 4h0m1-41h0m0 4h0m0 1h0m0 8h0m0 3h0m0 1h0m0 2h0m0 4h0m0 8h0m0 1h0m0 1h0m0 11h0m0 5h0m1-40h0m0 2h0m0 2h0m0 2h0m0 10h0m0 5h0m0 1h0m0 9h0m0 5h0m0 4h0m1-47h0m0 3h0m0 1h0m0 6h0m0 5h0m0 4h0m0 1h0m0 8h0m0 4h0m0 2h0m0 5h0m0 16h0m1-70h0m0 31h0m0 3h0m0 2h0m0 1h0m0 3h0m0 2h0m0 15h0m0 2h0m0 1h0m0 8h0m0 5h0m0 6h0m1-77h0m0 6h0m0 3h0m0 6h0m0 4h0m0 10h0m0 11h0m0 3h0m0 3h0m0 4h0m0 11h0m0 7h0m1-45h0m0 9h0m0 1h0m0 1h0m0 12h0m0 6h0m0 4h0m0 2h0m0 10h0m1-58h0m0 13h0m0 6h0m0 8h0m0 5h0m0 7h0m0 2h0m0 5h0m0 6h0m0 1h0m0 2h0m0 2h0m0 11h0m0 2h0m1-69h0m0 6h0m0 16h0m0 4h0m0 7h0m0 5h0m0 6h0m0 6h0m0 5h0m0 3h0m1-53h0m0 19h0m0 1h0m0 1h0m0 5h0m0 5h0m0 3h0m0 1h0m0 6h0m0 2h0m0 3h0m0 6h0m0 3h0m0 17h0m1-66h0m0 9h0m0 5h0m0 1h0m0 2h0m0 8h0m0 1h0m0 11h0m0 3h0m0 4h0m1-51h0m0 11h0m0 1h0m0 2h0m0 2h0m0 2h0m0 7h0m0 5h0m0 2h0m0 8h0m0 5h0m1-34h0m0 7h0m0 1h0m0 1h0m0 2h0m0 6h0m0 2h0m0 1h0m0 7h0m0 4h0m0 2h0m0 2h0m1-58h0m0 5h0m0 7h0m0 5h0m0 4h0m0 11h0m0 2h0m0 7h0m0 8h0m0 7h0m0 13h0m0 15h0m1-63h0m0 5h0m0 2h0m0 8h0m0 22h0m0 3h0m0 2h0m0 2h0m0 3h0m0 1h0m0 9h0m0 1h0m1-56h0m1-4h0m0 6h0m0 4h0m0 6h0m0 19h0m0 2h0m1-38h0m0 4h0m0 1h0m0 5h0m0 4h0m0 5h0m0 1h0m0 2h0m0 3h0m0 2h0m1-32h0m0 1h0m0 1h0m0 5h0m0 4h0m0 2h0m0 3h0m0 10h0m0 1h0m0 1h0m0 9h0m0 1h0m0 13h0m1-41h0m0 2h0m0 4h0m0 1h0m0 4h0m0 2h0m0 2h0m0 4h0m0 4h0m0 3h0m0 2h0m0 6h0m1-49h0m0 13h0m0 3h0m0 11h0m0 2h0m0 3h0m0 1h0m0 13h0m0 1h0m0 2h0m0 3h0m1-51h0m0 10h0m0 6h0m0 7h0m0 1h0m0 5h0m0 1h0m0 5h0m0 4h0m0 3h0m1-45h0m0 8h0m0 2h0m0 12h0m0 2h0m0 2h0m0 1h0m0 8h0m0 7h0m0 6h0m0 12h0m1-52h0m0 4h0m0 17h0m0 3h0m0 10h0m0 1h0m0 3h0m0 32h0m1-66h0m0 8h0m0 2h0m0 1h0m0 5h0m0 3h0m0 5h0m0 3h0m0 4h0m0 8h0m0 2h0m0 1h0m0 2h0m1-52h0m0 12h0m0 1h0m0 9h0m0 8h0m0 5h0m0 3h0m0 6h0m0 2h0m0 2h0m1-29h0m0 7h0m0 1h0m0 2h0m0 7h0m0 1h0m0 3h0m0 3h0m0 11h0m1-49h0m0 1h0m0 3h0m0 4h0m0 3h0m0 16h0m0 2h0m0 14h0m0 4h0m0 2h0m0 5h0m0 4h0m0 3h0m1-68h0m0 5h0m0 17h0m0 4h0m0 6h0m0 1h0m0 5h0m0 2h0m0 3h0m0 1h0m0 4h0m0 9h0m1-44h0m0 4h0m0 2h0m0 6h0m0 3h0m0 3h0m0 2h0m0 1h0m0 8h0m0 9h0m0 8h0m0 8h0m1-67h0m0 14h0m0 7h0m0 10h0m0 4h0m0 2h0m0 3h0m0 12h0m0 2h0m0 8h0m1-49h0m0 5h0m0 4h0m0 1h0m0 6h0m0 4h0m0 9h0m0 2h0m0 3h0m0 2h0m0 2h0m0 4h0m1-37h0m0 5h0m0 3h0m0 8h0m0 1h0m0 1h0m0 12h0m0 17h0m0 5h0m1-60h0m0 5h0m0 1h0m0 4h0m0 2h0m0 6h0m0 2h0m0 10h0m0 5h0m0 4h0m1-43h0m0 9h0m0 2h0m0 3h0m0 6h0m0 2h0m0 1h0m0 1h0m0 1h0m0 7h0m0 5h0m0 8h0m1-29h0m0 1h0m0 3h0m0 7h0m0 2h0m0 6h0m0 5h0m0 4h0m1-38h0m0 2h0m0 7h0m0 3h0m0 8h0m0 4h0m0 3h0m0 6h0m0 4h0m0 11h0m0 1h0m1-47h0m0 5h0m0 3h0m0 4h0m0 5h0m0 1h0m0 9h0m0 8h0m0 4h0m0 7h0m0 4h0m0 2h0m1-57h0m0 7h0m0 7h0m0 5h0m0 4h0m0 3h0m0 9h0m0 2h0m0 3h0m0 15h0m0 9h0m1-61h0m0 15h0m0 8h0m0 1h0m0 4h0m0 5h0m1-31h0m0 25h0m0 2h0m0 14h0m1-46h0m0 7h0m0 5h0m0 2h0m0 3h0m0 1h0m0 7h0m0 4h0m0 13h0m0 2h0m0 1h0m0 3h0m0 2h0m1-49h0m0 1h0m0 4h0m0 4h0m0 9h0m0 5h0m0 10h0m0 4h0m0 4h0m0 8h0m0 2h0m0 1h0m1-42h0m0 2h0m0 5h0m0 2h0m0 5h0m0 7h0m0 6h0m0 4h0m0 14h0m1-62h0m0 11h0m0 7h0m0 5h0m0 5h0m0 5h0m0 1h0m0 1h0m0 7h0m0 2h0m0 2h0m0 5h0m1-51h0m0 3h0m0 2h0m0 11h0m0 12h0m0 1h0m0 3h0m0 2h0m0 8h0m0 17h0m0 4h0m0 2h0m1-78h0m0 3h0m0 9h0m0 16h0m0 2h0m0 4h0m0 16h0m0 2h0m0 7h0m0 3h0m0 6h0m0 4h0m1-62h0m0 2h0m0 6h0m0 16h0m0 7h0m0 5h0m0 5h0m0 3h0m0 1h0m0 1h0m1-39h0m0 5h0m0 2h0m0 7h0m0 2h0m0 4h0m0 2h0m0 1h0m0 9h0m0 9h0m1-45h0m0 4h0m0 9h0m0 9h0m0 6h0m0 3h0m0 3h0m0 2h0m0 5h0m0 24h0m1-58h0m0 5h0m0 2h0m0 1h0m0 9h0m0 4h0m0 3h0m0 7h0m0 6h0m0 10h0m1-62h0m0 6h0m0 8h0m0 12h0m0 2h0m0 5h0m0 9h0m0 5h0m0 4h0m0 2h0m0 10h0m1-51h0m0 7h0m0 8h0m0 4h0m0 4h0m0 1h0m0 6h0m0 20h0m0 3h0m0 6h0m0 10h0m1-64h0m0 2h0m0 6h0m0 6h0m0 3h0m0 5h0m0 6h0m0 5h0m0 2h0m0 20h0m1-70h0m0 19h0m0 1h0m0 4h0m0 4h0m0 3h0m0 4h0m0 1h0m0 1h0m0 9h0m0 3h0m1-30h0m0 3h0m0 2h0m0 2h0m0 2h0m0 4h0m0 5h0m0 2h0m0 1h0m0 11h0m0 2h0m0 27h0m1-69h0m0 3h0m0 5h0m0 1h0m0 2h0m0 6h0m0 9h0m0 5h0m0 1h0m0 10h0m0 7h0m1-52h0m0 1h0m0 1h0m0 13h0m0 4h0m0 11h0m0 1h0m0 3h0m0 1h0m0 3h0m0 2h0m0 10h0m1-58h0m0 20h0m0 1h0m0 4h0m0 2h0m0 2h0m0 8h0m0 8h0m0 4h0m0 9h0m0 9h0m0 1h0m1-63h0m0 11h0m0 2h0m0 1h0m0 11h0m0 3h0m0 3h0m0 2h0m0 1h0m0 3h0m0 11h0m0 16h0m1-42h0m0 2h0m0 2h0m0 6h0m0 9h0m0 3h0m0 2h0m0 2h0m0 1h0m0 4h0m1-44h0m0 2h0m0 5h0m0 4h0m0 6h0m0 2h0m0 13h0m0 11h0m0 5h0m0 1h0m0 10h0m1-79h0m0 25h0m0 6h0m0 3h0m0 5h0m0 1h0m0 2h0m0 6h0m0 5h0m0 1h0m0 17h0m1-56h0m0 13h0m0 7h0m0 8h0m0 3h0m0 1h0m0 4h0m0 9h0m0 5h0m0 2h0m0 5h0m0 14h0m1-72h0m0 5h0m0 3h0m0 8h0m0 3h0m0 4h0m0 5h0m0 12h0m0 2h0m0 3h0m1-24h0m0 6h0m0 6h0m0 2h0m0 2h0m0 15h0m1-46h0m0 17h0m0 8h0m0 2h0m0 7h0m0 1h0m0 6h0m0 5h0m1-53h0m0 1h0m0 6h0m0 12h0m0 3h0m0 4h0m0 1h0m0 4h0m0 6h0m0 9h0m0 10h0m1-45h0m0 3h0m0 4h0m0 1h0m0 10h0m0 1h0m0 4h0m0 2h0m0 2h0m0 6h0m0 22h0m1-64h0m0 11h0m0 1h0m0 3h0m0 3h0m0 1h0m0 3h0m0 6h0m0 2h0m0 3h0m0 8h0m0 2h0m0 4h0m0 10h0m1-43h0m0 7h0m0 5h0m0 9h0m0 2h0m1-43h0m0 25h0m0 2h0m0 4h0m0 3h0m0 8h0m0 1h0m0 4h0m0 7h0m0 5h0m1-52h0m0 2h0m0 8h0m0 5h0m0 11h0m0 4h0m0 1h0m0 16h0m0 4h0m0 1h0m0 3h0m0 4h0m0 1h0m1-61h0m0 10h0m0 3h0m0 3h0m0 5h0m0 3h0m0 7h0m0 5h0m0 4h0m0 2h0m0 2h0m0 4h0m1-38h0m0 1h0m0 2h0m0 4h0m0 4h0m0 1h0m0 7h0m0 1h0m0 5h0m0 15h0m1-46h0m0 6h0m0 1h0m0 7h0m0 1h0m0 4h0m0 4h0m0 3h0m0 10h0m0 1h0m0 17h0m1-45h0m0 3h0m0 6h0m0 3h0m0 3h0m0 6h0m0 3h0m1-23h0m0 3h0m0 1h0m0 9h0m0 4h0m0 1h0m0 4h0m0 4h0m0 6h0m0 4h0m0 5h0m1-51h0m0 8h0m0 4h0m0 4h0m0 1h0m0 2h0m0 7h0m0 3h0m0 6h0m0 2h0m1-50h0m0 5h0m0 3h0m0 7h0m0 4h0m0 7h0m0 10h0m0 4h0m0 9h0m0 2h0m0 12h0m1-64h0m0 13h0m0 7h0m0 7h0m0 4h0m0 3h0m0 4h0m0 1h0m0 10h0m0 1h0m0 3h0m0 6h0m1-59h0m0 9h0m0 11h0m0 4h0m0 8h0m0 2h0m0 14h0m0 2h0m0 6h0m0 3h0m0 1h0m1-54h0m0 8h0m0 5h0m0 5h0m0 4h0m0 3h0m0 1h0m0 1h0m0 6h0m0 13h0m0 1h0m0 2h0m0 13h0m1-58h0m0 7h0m0 9h0m0 13h0m0 3h0m0 3h0m0 1h0m0 1h0m0 2h0m0 2h0m0 23h0m1-64h0m0 10h0m0 6h0m0 3h0m0 8h0m0 2h0m0 1h0m0 1h0m0 2h0m0 14h0m0 3h0m0 12h0m1-69h0m0 10h0m0 8h0m0 8h0m0 1h0m0 4h0m0 10h0m0 9h0m0 4h0m0 11h0m1-57h0m0 10h0m0 4h0m0 2h0m0 4h0m0 2h0m0 1h0m0 10h0m0 3h0m0 3h0m0 2h0m0 1h0m0 2h0m0 4h0m1-49h0m0 6h0m0 11h0m0 1h0m0 9h0m0 4h0m0 1h0m0 8h0m0 4h0m0 3h0m0 8h0m1-61h0m0 1h0m0 6h0m0 11h0m0 2h0m0 14h0m0 2h0m0 7h0m0 13h0m0 8h0m0 13h0m1-90h0m0 21h0m0 5h0m0 7h0m0 3h0m0 3h0m0 1h0m0 3h0m0 3h0m0 5h0m0 11h0m0 3h0m0 8h0m1-61h0m0 2h0m0 3h0m0 5h0m0 9h0m0 2h0m0 4h0m0 5h0m0 12h0m0 6h0m0 14h0m0 3h0m1-56h0m0 1h0m0 9h0m0 5h0m0 6h0m0 2h0m0 6h0m0 2h0m0 7h0m0 14h0m1-48h0m0 3h0m0 4h0m0 6h0m0 3h0m0 6h0m0 1h0m0 2h0m0 1h0m0 3h0m0 2h0m0 9h0m0 3h0m1-43h0m1-9h0m0 10h0m0 45h0m1-36h0m0 2h0m0 9h0m0 1h0m0 2h0m0 1h0m0 5h0m0 3h0m0 2h0m0 1h0m1-38h0m0 11h0m0 1h0m0 3h0m0 2h0m0 1h0m0 4h0m0 4h0m0 3h0m0 5h0m1-34h0m0 7h0m0 2h0m0 1h0m0 1h0m0 4h0m0 7h0m0 4h0m0 3h0m0 2h0m0 6h0m0 8h0m1-59h0m0 9h0m0 3h0m0 3h0m0 2h0m0 7h0m0 15h0m0 15h0m0 5h0m0 1h0m0 5h0m1-73h0m0 22h0m0 3h0m0 7h0m0 3h0m0 4h0m0 1h0m0 2h0m0 1h0m0 3h0m0 9h0m1-12h0m0 3h0m0 2h0m0 2h0m0 3h0m0 6h0m0 1h0m0 2h0m0 12h0m1-44h0m0 8h0m0 1h0m0 4h0m0 1h0m0 3h0m0 1h0m0 1h0m0 18h0m0 1h0m0 1h0m0 1h0m0 12h0m1-71h0m0 10h0m0 3h0m0 7h0m0 3h0m0 5h0m0 1h0m0 4h0m0 4h0m0 2h0m0 3h0m0 7h0m0 11h0m1-42h0m0 3h0m0 4h0m0 5h0m0 4h0m0 2h0m0 15h0m0 1h0m0 2h0m0 8h0m0 2h0m1-68h0m0 8h0m0 2h0m0 2h0m0 11h0m0 6h0m0 9h0m0 6h0m0 4h0m0 1h0m0 12h0m0 10h0m1-76h0m0 9h0m0 8h0m0 5h0m0 11h0m0 4h0m0 6h0m0 4h0m0 7h0m0 7h0m0 9h0m0 1h0m0 2h0m1-42h0m0 2h0m0 5h0m0 2h0m0 13h0m0 5h0m0 3h0m0 2h0m0 1h0m0 1h0m0 10h0m1-64h0m0 12h0m0 5h0m0 3h0m0 5h0m0 8h0m0 2h0m0 13h0m1-61h0m0 6h0m0 3h0m0 8h0m0 1h0m0 4h0m0 1h0m0 7h0m0 2h0m0 12h0m0 14h0m0 15h0m1-52h0m0 3h0m0 6h0m0 5h0m0 4h0m0 3h0m0 4h0m0 1h0m0 9h0m0 2h0m0 3h0m0 9h0m1-62h0m0 1h0m0 13h0m0 4h0m0 9h0m0 2h0m0 5h0m0 5h0m0 6h0m1-44h0m0 4h0m0 11h0m0 3h0m0 2h0m0 2h0m0 2h0m0 1h0m0 2h0m0 9h0m0 2h0m1-37h0m0 18h0m0 9h0m0 3h0m0 3h0m0 1h0m0 3h0m0 11h0m0 23h0m1-53h0m0 3h0m0 3h0m0 1h0m0 1h0m0 3h0m0 2h0m0 7h0m0 3h0m0 1h0m0 3h0m0 9h0m1-62h0m0 5h0m0 1h0m0 11h0m0 2h0m0 6h0m0 14h0m0 4h0m0 10h0m0 23h0m1-70h0m0 8h0m0 7h0m0 5h0m0 7h0m0 4h0m0 8h0m0 4h0m0 1h0m0 22h0m0 3h0m1-58h0m0 5h0m0 1h0m0 2h0m0 6h0m0 5h0m0 7h0m0 8h0m0 2h0m0 2h0m0 9h0m0 12h0m1-71h0m0 11h0m0 6h0m0 1h0m0 1h0m0 4h0m0 4h0m0 1h0m0 7h0m0 3h0m0 7h0m0 9h0m0 4h0m1-51h0m0 22h0m0 3h0m0 15h0m0 4h0m0 7h0m0 4h0m1-55h0m0 7h0m0 6h0m0 1h0m0 3h0m0 10h0m0 2h0m0 3h0m0 1h0m0 2h0m0 2h0m0 9h0m0 7h0m1-44h0m0 7h0m0 2h0m0 2h0m0 3h0m0 2h0m0 1h0m0 3h0m0 6h0m0 3h0m1-34h0m0 5h0m0 1h0m0 8h0m0 4h0m0 8h0m0 6h0m0 1h0m0 1h0m1-37h0m0 4h0m0 5h0m0 8h0m0 1h0m0 3h0m0 4h0m0 7h0m0 2h0m0 10h0m0 1h0m1-40h0m0 7h0m0 2h0m0 7h0m0 3h0m0 1h0m0 1h0m0 2h0m0 7h0m0 6h0m0 2h0m1-43h0m0 9h0m0 2h0m0 6h0m0 6h0m0 2h0m0 16h0m0 6h0m0 9h0m0 2h0m1-57h0m0 1h0m0 8h0m0 10h0m0 7h0m0 4h0m0 7h0m0 3h0m1-33h0m0 4h0m0 2h0m0 2h0m0 7h0m0 2h0m0 3h0m0 5h0m0 3h0m0 5h0m0 3h0m0 10h0m0 4h0m1-69h0m0 7h0m0 12h0m0 9h0m0 3h0m0 2h0m0 17h0m0 1h0m0 8h0m1-57h0m0 3h0m0 10h0m0 3h0m0 2h0m0 1h0m0 2h0m0 5h0m0 4h0m0 1h0m0 10h0m0 4h0m0 10h0m0 8h0m1-27h0m0 4h0m0 6h0m0 4h0m0 4h0m0 2h0m0 2h0m0 1h0m2-41h0m0 5h0m0 3h0m0 4h0m0 5h0m0 3h0m0 3h0m0 6h0m0 3h0m0 6h0m0 9h0m1-52h0m0 13h0m0 2h0m0 1h0m0 2h0m0 12h0m0 2h0m0 6h0m0 2h0m0 6h0m0 1h0m0 6h0m1-59h0m0 3h0m0 11h0m0 3h0m0 2h0m0 4h0m0 2h0m0 1h0m0 3h0m0 13h0m1-40h0m0 12h0m0 4h0m0 7h0m0 7h0m0 3h0m0 4h0m0 2h0m0 8h0m0 3h0m1-48h0m0 4h0m0 3h0m0 5h0m0 8h0m0 4h0m0 10h0m0 3h0m0 3h0m0 1h0m0 1h0m1-51h0m0 27h0m0 5h0m0 1h0m0 5h0m0 4h0m0 4h0m0 5h0m0 2h0m1-42h0m0 7h0m0 1h0m0 4h0m0 4h0m0 5h0m0 1h0m0 2h0m0 3h0m0 6h0m0 15h0m1-68h0m0 1h0m0 11h0m0 5h0m0 6h0m0 6h0m0 9h0m0 6h0m0 8h0m0 6h0m0 17h0m0 12h0m1-75h0m0 2h0m0 7h0m0 3h0m0 5h0m0 5h0m0 1h0m0 5h0m0 3h0m0 19h0m0 3h0m0 14h0m1-57h0m0 2h0m0 6h0m0 1h0m0 10h0m0 4h0m0 2h0m0 3h0m0 3h0m0 6h0m0 5h0m0 5h0m1-49h0m0 4h0m0 8h0m0 4h0m0 1h0m0 5h0m0 7h0m0 6h0m0 1h0m0 7h0m0 8h0m1-47h0m0 8h0m0 5h0m0 4h0m0 3h0m0 3h0m0 4h0m0 4h0m0 9h0m0 5h0m0 8h0m1-65h0m0 17h0m0 5h0m0 3h0m0 13h0m0 3h0m0 2h0m0 2h0m0 3h0m0 1h0m0 9h0m1-46h0m0 5h0m0 3h0m0 4h0m0 6h0m0 10h0m0 6h0m0 1h0m0 4h0m0 3h0m0 1h0m0 9h0m1-43h0m0 1h0m0 6h0m0 3h0m0 5h0m0 3h0m0 8h0m0 2h0m0 5h0m0 2h0m0 8h0m1-53h0m0 25h0m0 6h0m1-24h0m0 1h0m0 5h0m0 2h0m0 7h0m0 3h0m0 1h0m0 2h0m0 5h0m0 1h0m0 4h0m0 1h0m0 4h0m1-48h0m0 8h0m0 4h0m0 4h0m0 10h0m0 1h0m0 2h0m0 1h0m0 4h0m0 1h0m0 1h0m0 13h0m1-60h0m0 6h0m0 15h0m0 7h0m0 2h0m0 4h0m0 1h0m0 5h0m0 4h0m0 5h0m1-52h0m0 23h0m0 10h0m0 2h0m0 2h0m0 5h0m0 5h0m0 5h0m0 2h0m0 10h0m0 9h0m1-55h0m0 3h0m0 3h0m0 3h0m0 5h0m0 4h0m0 2h0m0 2h0m0 4h0m0 2h0m0 6h0m0 3h0m0 19h0m1-68h0m0 21h0m0 2h0m0 4h0m0 1h0m0 15h0m0 1h0m0 2h0m0 11h0m0 4h0m1-53h0m0 9h0m0 9h0m0 6h0m0 3h0m0 4h0m0 9h0m0 4h0m1-42h0m0 21h0m0 3h0m0 5h0m0 2h0m0 2h0m0 5h0m0 14h0m1-39h0m0 5h0m0 3h0m0 7h0m0 1h0m0 7h0m0 4h0m0 1h0m0 1h0m0 3h0m0 2h0m0 4h0m1-45h0m0 1h0m0 2h0m0 1h0m0 2h0m0 14h0m0 1h0m0 1h0m0 11h0m0 2h0m0 19h0m1-61h0m0 3h0m0 4h0m0 4h0m0 3h0m0 1h0m0 3h0m0 1h0m0 2h0m0 2h0m0 1h0m0 2h0m0 8h0m0 17h0m1-45h0m0 2h0m0 5h0m0 2h0m0 2h0m0 7h0m0 5h0m0 1h0m0 2h0m0 5h0m0 13h0m1-53h0m0 6h0m0 9h0m0 8h0m0 7h0m0 6h0m2-18h0m0 1h0m0 6h0m0 5h0m0 4h0m0 2h0m0 3h0m0 1h0m0 4h0m0 1h0m0 17h0m1-45h0m0 3h0m0 1h0m0 6h0m0 1h0m0 6h0m0 2h0m0 6h0m0 3h0m0 5h0m0 25h0m1-49h0m0 4h0m0 1h0m0 1h0m0 4h0m0 1h0m0 5h0m0 1h0m1-38h0m0 5h0m0 3h0m0 7h0m0 5h0m0 2h0m0 8h0m0 1h0m0 3h0m0 4h0m0 9h0m0 2h0m1-42h0m0 1h0m0 1h0m0 6h0m0 3h0m0 6h0m0 3h0m0 2h0m0 5h0m0 13h0m0 7h0m1-73h0m0 8h0m0 5h0m0 5h0m0 8h0m0 4h0m0 3h0m0 7h0m0 2h0m0 14h0m0 2h0m0 18h0m1-65h0m0 8h0m0 16h0m0 1h0m0 2h0m0 4h0m0 4h0m0 7h0m0 1h0m0 2h0m0 1h0m0 7h0m0 6h0m0 3h0m1-54h0m0 3h0m0 7h0m0 2h0m0 6h0m0 2h0m0 17h0m0 8h0m0 2h0m0 4h0m0 6h0m0 8h0m1-84h0m0 21h0m0 1h0m0 5h0m0 10h0m0 3h0m0 1h0m0 3h0m0 2h0m0 3h0m0 6h0m0 13h0m1-49h0m0 5h0m0 5h0m0 2h0m0 8h0m0 1h0m0 11h0m0 2h0m0 5h0m0 7h0m0 7h0m0 1h0m0 2h0m1-67h0m0 16h0m0 7h0m0 3h0m0 2h0m0 7h0m0 5h0m0 7h0m0 16h0m0 6h0m0 3h0m0 5h0m1-63h0m0 8h0m0 13h0m0 2h0m0 5h0m0 3h0m1-50h0m0 15h0m0 5h0m0 14h0m0 1h0m0 3h0m0 2h0m0 1h0m0 10h0m0 3h0m1-35h0m0 2h0m0 3h0m0 1h0m0 2h0m0 3h0m0 2h0m0 8h0m0 5h0m0 2h0m0 7h0m0 10h0m1-52h0m0 8h0m0 2h0m0 9h0m0 3h0m0 3h0m0 1h0m0 3h0m0 5h0m0 4h0m0 5h0m0 2h0m0 1h0m1-32h0m0 10h0m0 5h0m0 5h0m0 1h0m0 4h0m0 7h0m0 11h0m0 8h0m1-57h0m0 6h0m0 1h0m0 5h0m0 2h0m0 4h0m0 14h0m0 1h0m0 6h0m1-46h0m0 4h0m0 3h0m0 2h0m0 2h0m0 9h0m0 2h0m0 6h0m0 4h0m0 2h0m0 2h0m0 3h0m0 5h0m0 17h0m1-56h0m0 12h0m0 7h0m0 1h0m0 9h0m0 6h0m0 4h0m0 6h0m0 16h0m1-48h0m0 10h0m0 2h0m0 1h0m0 4h0m0 1h0m0 3h0m0 2h0m0 5h0m0 11h0m1-48h0m0 3h0m0 4h0m0 1h0m0 4h0m0 2h0m0 4h0m0 2h0m0 15h0m0 13h0m0 8h0m0 1h0m1-66h0m0 9h0m0 1h0m0 9h0m0 1h0m0 1h0m0 8h0m0 4h0m0 4h0m0 2h0m0 3h0m0 5h0m0 3h0m0 9h0m1-63h0m0 7h0m0 4h0m0 8h0m0 7h0m0 5h0m0 5h0m0 2h0m0 3h0m0 7h0m0 15h0m0 12h0m1-87h0m0 5h0m0 16h0m0 8h0m0 3h0m0 9h0m0 6h0m0 6h0m0 8h0m0 8h0m0 3h0m0 4h0m1-67h0m0 7h0m0 12h0m0 5h0m0 2h0m0 10h0m0 4h0m0 2h0m0 5h0m0 6h0m0 3h0m1-55h0m0 11h0m0 3h0m0 2h0m0 4h0m0 8h0m0 4h0m0 12h0m0 2h0m0 2h0m0 2h0m0 6h0m1-39h0m0 1h0m0 7h0m0 3h0m0 6h0m0 2h0m0 2h0m0 2h0m0 1h0m1-26h0m0 8h0m0 4h0m0 9h0m0 1h0m0 7h0m0 7h0m0 4h0m0 2h0m0 11h0m1-56h0m0 5h0m0 3h0m0 2h0m0 2h0m0 5h0m0 8h0m0 5h0m0 6h0m0 6h0m1-38h0m0 7h0m0 6h0m0 2h0m0 1h0m0 2h0m0 6h0m0 5h0m0 7h0m0 6h0m0 6h0m1-51h0m0 7h0m0 7h0m0 7h0m0 2h0m0 2h0m0 4h0m0 1h0m0 2h0m0 4h0m0 9h0m1-55h0m0 9h0m0 4h0m0 8h0m1-10h0m0 8h0m0 1h0m0 7h0m0 3h0m0 2h0m0 3h0m0 13h0m0 3h0m0 2h0m0 10h0m1-46h0m0 6h0m0 1h0m0 2h0m0 2h0m0 3h0m0 6h0m0 5h0m0 1h0m0 1h0m0 6h0m1-44h0m0 5h0m0 3h0m0 11h0m0 4h0m0 2h0m0 2h0m0 2h0m0 2h0m0 9h0m0 16h0m1-73h0m0 22h0m0 5h0m0 3h0m0 10h0m0 2h0m0 4h0m0 2h0m0 4h0m0 7h0m1-62h0m0 4h0m0 4h0m0 23h0m0 1h0m0 8h0m0 3h0m0 15h0m0 12h0m0 4h0m0 3h0m0 4h0m1-60h0m0 4h0m0 10h0m0 2h0m0 1h0m0 7h0m0 3h0m0 2h0m0 3h0m0 5h0m1-40h0m0 5h0m0 5h0m0 3h0m0 5h0m0 5h0m0 2h0m0 3h0m0 3h0m0 5h0m0 7h0m0 6h0m1-42h0m0 13h0m0 4h0m0 1h0m0 1h0m0 1h0m0 1h0m0 12h0m0 3h0m0 1h0m1-51h0m0 1h0m0 13h0m0 6h0m0 1h0m0 2h0m0 6h0m0 1h0m0 1h0m0 10h0m0 6h0m0 8h0m0 15h0m1-70h0m0 7h0m0 13h0m0 1h0m0 5h0m0 10h0m0 1h0m0 2h0m0 5h0m0 14h0m1-57h0m0 8h0m0 8h0m0 3h0m0 3h0m0 2h0m0 3h0m0 1h0m0 11h0m0 7h0m0 13h0m1-58h0m0 1h0m0 2h0m0 2h0m0 7h0m0 1h0m0 8h0m0 14h0m0 2h0m0 3h0m0 12h0m1-65h0m0 1h0m0 5h0m0 6h0m0 2h0m0 6h0m0 14h0m0 1h0m0 3h0m0 4h0m1-35h0m0 11h0m0 2h0m0 7h0m0 1h0m0 2h0m0 6h0m0 4h0m0 3h0m0 7h0m0 7h0m0 1h0m1-52h0m0 4h0m0 17h0m0 3h0m0 4h0m0 7h0m0 1h0m0 1h0m0 1h0m0 3h0m0 4h0m0 1h0m0 9h0m0 8h0m1-52h0m0 8h0m0 9h0m0 4h0m0 7h0m0 3h0m0 7h0m0 3h0m0 3h0m0 7h0m1-47h0m0 5h0m0 9h0m0 6h0m0 6h0m0 2h0m0 2h0m0 4h0m0 1h0m0 1h0m0 4h0m0 19h0m1-57h0m0 7h0m0 4h0m0 1h0m0 3h0m0 3h0m0 1h0m0 4h0m0 13h0m0 2h0m0 5h0m1-46h0m0 3h0m0 5h0m0 4h0m0 1h0m0 4h0m0 6h0m0 3h0m0 7h0m0 6h0m0 9h0m1-39h0m0 2h0m0 3h0m0 3h0m0 5h0m0 3h0m0 11h0m0 2h0m0 5h0m1-56h0m0 10h0m0 3h0m0 10h0m0 7h0m0 3h0m0 2h0m0 5h0m0 2h0m0 3h0m0 1h0m0 4h0m1-44h0m0 4h0m0 1h0m0 3h0m0 8h0m0 1h0m0 12h0m0 4h0m0 2h0m1-43h0m0 6h0m0 13h0m0 3h0m0 6h0m0 2h0m0 9h0m0 3h0m0 5h0m0 4h0m0 1h0m0 1h0m0 5h0m1-61h0m0 11h0m0 12h0m0 4h0m0 1h0m0 5h0m0 4h0m0 3h0m0 7h0m0 5h0m0 17h0m0 2h0m1-49h0m0 1h0m0 12h0m0 6h0m0 3h0m0 3h0m0 7h0m1-27h0m0 1h0m0 3h0m0 3h0m0 3h0m0 6h0m0 1h0m0 4h0m0 6h0m0 7h0m0 2h0m0 17h0m1-75h0m0 17h0m0 1h0m0 13h0m0 3h0m0 1h0m0 3h0m0 1h0m0 4h0m0 2h0m0 13h0m1-30h0m0 1h0m0 7h0m0 1h0m0 5h0m0 1h0m0 2h0m0 5h0m0 4h0m1-40h0m0 2h0m0 2h0m0 8h0m0 4h0m0 10h0m0 12h0m0 2h0m1-39h0m0 10h0m0 2h0m0 6h0m0 2h0m0 3h0m0 1h0m0 7h0m0 1h0m0 2h0m0 6h0m0 6h0m1-48h0m0 7h0m0 8h0m0 1h0m0 9h0m0 5h0m0 2h0m0 3h0m0 3h0m0 11h0m1-42h0m0 4h0m0 18h0m0 2h0m0 6h0m0 3h0m0 5h0m0 1h0m0 4h0m0 2h0m1-48h0m0 5h0m0 5h0m0 1h0m0 5h0m0 2h0m0 4h0m0 4h0m0 5h0m0 18h0m1-61h0m0 12h0m0 3h0m0 15h0m0 1h0m0 5h0m0 6h0m0 7h0m0 1h0m0 1h0m0 5h0m0 2h0m0 3h0m1-47h0m0 4h0m0 3h0m0 10h0m0 4h0m0 6h0m0 5h0m0 1h0m0 5h0m0 2h0m1-36h0m0 1h0m0 3h0m0 2h0m0 4h0m0 5h0m0 3h0m0 3h0m0 2h0m0 1h0m0 1h0m0 3h0m0 1h0m0 10h0m2-41h0m0 7h0m0 6h0m0 7h0m0 12h0m1-55h0m0 17h0m0 1h0m0 6h0m0 3h0m0 4h0m0 5h0m0 3h0m0 2h0m0 9h0m0 2h0m0 9h0m1-46h0m0 15h0m0 2h0m0 3h0m0 2h0m0 4h0m0 4h0m0 1h0m0 2h0m0 10h0m0 2h0m1-55h0m0 14h0m0 4h0m0 5h0m0 6h0m0 3h0m0 9h0m0 9h0m0 8h0m0 1h0m0 3h0m1-51h0m0 11h0m0 4h0m0 3h0m0 5h0m0 3h0m0 1h0m0 11h0m0 9h0m0 7h0m0 5h0m0 4h0m1-68h0m0 26h0m0 2h0m0 9h0m0 1h0m0 5h0m0 1h0m0 2h0m0 1h0m0 3h0m0 8h0m0 2h0m0 3h0m1-61h0m0 9h0m0 7h0m0 2h0m0 2h0m0 1h0m0 1h0m0 8h0m0 5h0m0 3h0m1-44h0m0 17h0m0 1h0m0 8h0m0 1h0m0 1h0m0 9h0m0 7h0m0 2h0m0 8h0m0 10h0m0 1h0m1-69h0m0 9h0m0 2h0m0 5h0m0 2h0m0 19h0m0 1h0m0 2h0m0 4h0m0 7h0m0 5h0m0 7h0m1-48h0m0 6h0m0 2h0m0 8h0m0 1h0m0 2h0m0 1h0m0 1h0m0 2h0m0 7h0m0 7h0m0 2h0m0 3h0m1-37h0m0 3h0m0 1h0m0 3h0m0 5h0m0 7h0m0 7h0m0 1h0m0 6h0m0 11h0m1-39h0m0 4h0m0 1h0m0 4h0m0 3h0m0 3h0m0 2h0m0 5h0m0 2h0m0 7h0m0 2h0m1-50h0m0 5h0m0 2h0m0 7h0m0 3h0m0 3h0m0 2h0m0 4h0m0 4h0m0 9h0m0 2h0m0 9h0m1-45h0m0 2h0m0 10h0m0 7h0m0 4h0m0 2h0m0 5h0m0 4h0m0 10h0m0 1h0m1-51h0m0 9h0m0 2h0m0 3h0m0 1h0m0 8h0m0 1h0m0 10h0m0 2h0m0 5h0m0 4h0m1-40h0m0 1h0m0 4h0m0 4h0m0 9h0m0 4h0m0 3h0m0 1h0m0 1h0m0 8h0m0 9h0m0 9h0m1-55h0m0 11h0m0 2h0m0 7h0m0 3h0m0 2h0m0 13h0m0 2h0m0 4h0m0 27h0m1-85h0m0 17h0m0 13h0m0 4h0m0 2h0m0 1h0m0 6h0m0 5h0m0 2h0m0 7h0m0 11h0m0 3h0m1-47h0m0 6h0m0 1h0m0 3h0m0 2h0m0 1h0m0 2h0m0 3h0m0 2h0m0 16h0m0 2h0m1-51h0m0 10h0m0 3h0m0 2h0m0 6h0m0 5h0m0 9h0m0 2h0m0 3h0m0 3h0m0 2h0m0 4h0m1-49h0m0 5h0m0 1h0m0 4h0m0 3h0m0 4h0m0 14h0m0 4h0m0 1h0m0 4h0m0 1h0m0 2h0m0 4h0m1-36h0m1-4h0m0 15h0m0 1h0m0 1h0m0 1h0m0 4h0m0 13h0m1-42h0m0 12h0m0 1h0m0 4h0m0 4h0m0 6h0m0 2h0m0 1h0m0 4h0m0 1h0m0 11h0m0 15h0m1-52h0m0 1h0m0 3h0m0 3h0m0 2h0m0 7h0m0 1h0m0 4h0m0 4h0m0 11h0m0 7h0m1-49h0m0 8h0m0 1h0m0 8h0m0 2h0m0 13h0m0 1h0m0 7h0m0 1h0m1-36h0m0 1h0m0 9h0m0 10h0m0 1h0m0 3h0m0 8h0m0 7h0m1-54h0m0 11h0m0 9h0m0 10h0m0 6h0m0 5h0m0 3h0m0 7h0m0 13h0m1-60h0m0 16h0m0 3h0m0 2h0m0 2h0m0 2h0m0 4h0m0 4h0m0 5h0m0 1h0m0 8h0m0 4h0m1-47h0m0 16h0m0 4h0m0 3h0m0 3h0m0 2h0m0 3h0m0 11h0m0 6h0m0 2h0m0 1h0m1-58h0m0 13h0m0 1h0m0 10h0m0 13h0m0 1h0m0 6h0m0 4h0m1-30h0m0 2h0m0 4h0m0 4h0m0 2h0m0 6h0m0 1h0m0 4h0m0 7h0m0 3h0m0 7h0m1-66h0m0 12h0m0 12h0m0 12h0m0 5h0m0 1h0m0 4h0m0 3h0m0 6h0m0 3h0m0 1h0m0 4h0m0 22h0m1-72h0m0 20h0m0 2h0m0 3h0m0 7h0m0 9h0m0 1h0m0 2h0m0 5h0m0 1h0m0 2h0m1-58h0m0 12h0m0 26h0m0 1h0m0 4h0m0 3h0m0 3h0m0 4h0m0 9h0m0 1h0m1-45h0m0 5h0m0 7h0m0 3h0m0 1h0m0 2h0m0 1h0m0 2h0m0 1h0m0 4h0m0 2h0m0 2h0m0 25h0m2-69h0m0 18h0m0 2h0m0 10h0m0 11h0m0 6h0m0 3h0m0 4h0m0 3h0m0 2h0m0 2h0m0 1h0m1-54h0m0 15h0m0 2h0m0 3h0m0 2h0m0 4h0m0 4h0m0 17h0m0 2h0m0 1h0m0 13h0m1-63h0m0 7h0m0 3h0m0 6h0m0 1h0m0 8h0m0 1h0m0 6h0m0 2h0m0 8h0m1-27h0m0 5h0m0 4h0m0 2h0m0 1h0m0 5h0m0 1h0m0 1h0m0 10h0m0 9h0m0 1h0m1-39h0m0 10h0m0 1h0m0 10h0m0 2h0m0 2h0m0 2h0m0 3h0m0 2h0m0 9h0m1-55h0m0 11h0m0 2h0m0 2h0m0 2h0m0 13h0m0 5h0m0 2h0m0 4h0m1-42h0m0 5h0m0 2h0m0 3h0m0 5h0m0 7h0m0 3h0m0 2h0m0 3h0m0 3h0m0 1h0m0 5h0m0 7h0m1-45h0m0 7h0m0 8h0m0 2h0m0 1h0m0 3h0m0 1h0m0 4h0m0 6h0m0 11h0m0 2h0m1-34h0m0 7h0m0 10h0m0 2h0m0 6h0m0 1h0m0 2h0m0 3h0m0 5h0m1-56h0m0 12h0m0 4h0m0 1h0m0 10h0m0 5h0m0 1h0m0 4h0m0 2h0m0 4h0m0 2h0m0 6h0m0 16h0m1-66h0m0 3h0m0 5h0m0 2h0m0 8h0m0 1h0m0 1h0m0 4h0m0 5h0m0 3h0m0 1h0m0 6h0m0 1h0m1-39h0m0 32h0m0 4h0m0 3h0m0 1h0m0 5h0m0 3h0m0 2h0m0 10h0m1-39h0m0 4h0m0 2h0m0 3h0m0 5h0m0 5h0m0 1h0m0 2h0m0 2h0m0 14h0m1-59h0m0 13h0m0 8h0m0 2h0m0 2h0m0 3h0m0 5h0m0 15h0m0 2h0m0 3h0m0 15h0m1-48h0m0 10h0m0 6h0m0 5h0m0 3h0m0 2h0m0 4h0m0 3h0m0 3h0m0 9h0m0 3h0m0 4h0m1-71h0m0 11h0m0 6h0m0 2h0m0 8h0m0 5h0m0 5h0m0 4h0m0 5h0m0 18h0m1-65h0m0 11h0m0 4h0m0 2h0m0 13h0m0 7h0m0 1h0m0 3h0m0 5h0m0 9h0m0 2h0m0 5h0m0 1h0m1-67h0m0 14h0m0 1h0m0 10h0m0 3h0m0 4h0m0 1h0m0 5h0m0 9h0m0 3h0m0 4h0m0 2h0m1-36h0m0 2h0m0 5h0m0 3h0m0 2h0m0 7h0m0 3h0m0 5h0m0 3h0m0 13h0m0 2h0m1-59h0m0 8h0m0 4h0m0 7h0m0 6h0m0 3h0m0 3h0m0 3h0m0 3h0m0 1h0m1-33h0m0 15h0m0 8h0m0 4h0m0 7h0m0 2h0m0 9h0m0 4h0m0 11h0m1-67h0m0 2h0m0 14h0m0 2h0m0 5h0m0 2h0m0 10h0m0 4h0m0 4h0m0 3h0m0 3h0m0 2h0m0 6h0m1-44h0m0 2h0m0 2h0m0 1h0m0 8h0m0 3h0m0 1h0m0 2h0m0 10h0m0 2h0m0 16h0m1-55h0m0 9h0m0 4h0m0 4h0m0 3h0m0 2h0m0 3h0m0 2h0m0 2h0m0 2h0m0 2h0m0 7h0m1-33h0m0 8h0m0 3h0m0 1h0m0 3h0m0 5h0m0 7h0m0 3h0m0 10h0m0 1h0m0 9h0m1-61h0m0 13h0m0 3h0m0 4h0m0 7h0m0 6h0m0 5h0m0 4h0m0 2h0m0 1h0m0 4h0m1-35h0m0 15h0m0 2h0m0 1h0m0 3h0m0 5h0m0 1h0m0 6h0m0 1h0m0 11h0m0 4h0m1-56h0m0 8h0m0 9h0m0 4h0m0 12h0m0 4h0m0 3h0m0 2h0m0 2h0m1-42h0m0 1h0m0 11h0m0 3h0m0 4h0m0 2h0m0 1h0m0 6h0m0 12h0m1-42h0m0 8h0m0 1h0m0 7h0m0 4h0m0 6h0m0 3h0m0 3h0m0 3h0m0 5h0m0 12h0m1-49h0m0 3h0m0 10h0m0 3h0m0 2h0m0 5h0m0 3h0m0 2h0m0 2h0m0 14h0m0 3h0m0 15h0m1-69h0m0 8h0m0 13h0m0 3h0m0 4h0m0 1h0m0 2h0m0 7h0m0 4h0m0 1h0m0 6h0m0 1h0m0 4h0m1-44h0m0 11h0m0 1h0m0 4h0m0 1h0m0 2h0m0 1h0m0 5h0m0 3h0m0 10h0m0 14h0m1-74h0m0 12h0m0 22h0m0 9h0m0 3h0m0 5h0m0 1h0m0 2h0m0 5h0m0 6h0m1-61h0m0 33h0m0 1h0m0 1h0m0 2h0m0 4h0m0 1h0m0 4h0m0 5h0m0 1h0m0 11h0m0 3h0m1-51h0m0 4h0m0 5h0m0 5h0m0 16h0m0 4h0m0 5h0m0 1h0m0 6h0m0 1h0m1-71h0m0 15h0m0 7h0m0 9h0m0 4h0m0 4h0m0 2h0m0 4h0m0 1h0m0 3h0m0 11h0m0 6h0m1-63h0m0 9h0m0 15h0m0 1h0m0 4h0m0 2h0m0 8h0m0 5h0m0 1h0m0 4h0m0 7h0m0 1h0m0 5h0m1-44h0m0 3h0m0 21h0m0 5h0m0 1h0m0 3h0m0 1h0m0 5h0m0 1h0m0 14h0m1-67h0m0 16h0m0 6h0m0 9h0m0 3h0m0 8h0m0 1h0m0 8h0m0 3h0m0 20h0m1-73h0m0 8h0m0 16h0m0 1h0m0 3h0m0 4h0m0 4h0m0 2h0m0 9h0m0 1h0m0 7h0m0 4h0m0 8h0m1-52h0m0 6h0m0 6h0m0 7h0m0 4h0m0 5h0m0 2h0m0 1h0m0 8h0m0 3h0m1-51h0m0 2h0m0 8h0m0 1h0m0 7h0m0 3h0m0 5h0m0 2h0m0 7h0m0 1h0m0 9h0m0 3h0m0 1h0m0 5h0m1-50h0m0 6h0m0 6h0m0 11h0m0 4h0m0 3h0m0 3h0m0 7h0m0 9h0m0 1h0m0 2h0m1-68h0m0 4h0m0 17h0m0 4h0m0 9h0m0 1h0m0 1h0m0 7h0m0 13h0m0 3h0m0 20h0m1-59h0m0 2h0m0 4h0m0 2h0m0 3h0m0 6h0m0 2h0m0 2h0m0 8h0m1-27h0m0 4h0m0 1h0m0 6h0m0 4h0m0 6h0m0 2h0m0 3h0m0 11h0m0 1h0m0 12h0m1-57h0m0 9h0m0 6h0m0 3h0m0 3h0m0 4h0m0 8h0m0 2h0m0 20h0m1-50h0m0 4h0m0 7h0m0 9h0m0 16h0m0 5h0m0 1h0m0 1h0m0 2h0m0 1h0m0 1h0m1-46h0m0 4h0m0 8h0m0 5h0m0 6h0m0 2h0m0 1h0m0 5h0m0 7h0m0 2h0m0 8h0m0 16h0m1-58h0m0 1h0m0 7h0m0 8h0m0 6h0m0 5h0m0 3h0m0 3h0m0 11h0m1-51h0m0 5h0m0 1h0m0 2h0m0 1h0m0 3h0m0 2h0m0 12h0m0 1h0m0 1h0m0 9h0m1-41h0m0 9h0m0 12h0m0 2h0m0 4h0m0 5h0m0 1h0m0 2h0m0 3h0m0 1h0m1-34h0m0 4h0m0 12h0m0 3h0m0 3h0m0 2h0m0 2h0m0 2h0m0 9h0m0 9h0m1-52h0m0 7h0m0 13h0m0 4h0m0 4h0m0 3h0m0 4h0m0 10h0m0 6h0m1-48h0m0 2h0m0 7h0m0 2h0m0 1h0m0 1h0m0 4h0m0 4h0m0 4h0m0 8h0m0 3h0m0 6h0m1-44h0m0 13h0m0 4h0m0 1h0m0 4h0m0 1h0m0 3h0m0 5h0m0 2h0m0 8h0m0 2h0m0 4h0m1-45h0m0 7h0m0 4h0m0 11h0m0 6h0m0 5h0m0 2h0m0 2h0m1-53h0m0 11h0m0 9h0m0 1h0m0 4h0m0 3h0m0 3h0m0 4h0m0 7h0m0 2h0m0 11h0m1-37h0m0 4h0m0 1h0m0 12h0m0 1h0m0 4h0m0 1h0m0 3h0m0 3h0m0 4h0m0 18h0m1-57h0m0 2h0m0 2h0m0 10h0m0 11h0m0 5h0m0 5h0m0 3h0m0 7h0m0 10h0m1-44h0m0 4h0m0 2h0m0 3h0m0 1h0m0 1h0m0 1h0m0 9h0m0 1h0m0 10h0m0 4h0m0 1h0m0 9h0m1-44h0m0 4h0m0 8h0m0 3h0m0 9h0m0 8h0m2-50h0m0 21h0m0 6h0m0 2h0m0 5h0m0 3h0m0 1h0m0 2h0m0 6h0m0 9h0m0 5h0m1-58h0m0 11h0m0 2h0m0 3h0m0 2h0m0 3h0m0 6h0m0 2h0m0 10h0m0 5h0m0 5h0m1-41h0m0 2h0m0 1h0m0 14h0m0 5h0m0 10h0m0 1h0m0 7h0m0 2h0m0 4h0m1-45h0m0 2h0m0 2h0m0 3h0m0 3h0m0 6h0m0 2h0m0 1h0m0 3h0m0 14h0m0 21h0m1-57h0m0 9h0m0 1h0m0 4h0m0 9h0m0 3h0m0 7h0m0 4h0m0 3h0m1-54h0m0 19h0m0 1h0m0 10h0m0 4h0m0 10h0m0 14h0m0 1h0m0 8h0m0 4h0m0 3h0m0 1h0m1-81h0m0 2h0m0 14h0m0 5h0m0 7h0m0 5h0m0 9h0m0 3h0m0 3h0m0 14h0m0 1h0m0 6h0m1-52h0m0 9h0m0 2h0m0 1h0m0 1h0m0 5h0m0 6h0m0 5h0m0 7h0m0 15h0m0 6h0m1-58h0m0 11h0m0 2h0m0 5h0m0 4h0m0 7h0m0 4h0m0 7h0m0 4h0m1-41h0m0 3h0m0 4h0m0 5h0m0 1h0m0 7h0m0 2h0m0 2h0m0 12h0m0 1h0m0 14h0m0 3h0m1-60h0m0 9h0m0 6h0m0 8h0m0 7h0m0 6h0m0 4h0m0 4h0m0 4h0m0 1h0m0 6h0m0 3h0m0 7h0m1-66h0m0 6h0m0 3h0m0 11h0m0 3h0m0 4h0m0 8h0m0 2h0m0 16h0m0 20h0m1-66h0m0 4h0m0 1h0m0 2h0m0 10h0m0 1h0m0 4h0m0 3h0m0 8h0m0 8h0m0 5h0m1-46h0m0 2h0m0 5h0m0 2h0m0 2h0m0 5h0m0 4h0m0 7h0m0 2h0m0 8h0m0 1h0m0 7h0m1-38h0m0 2h0m0 3h0m0 1h0m0 4h0m0 3h0m0 12h0m0 8h0m1-35h0m0 15h0m0 3h0m0 3h0m0 4h0m0 6h0m0 3h0m1-46h0m0 6h0m0 12h0m0 3h0m0 4h0m0 1h0m0 6h0m0 4h0m0 5h0m0 2h0m0 4h0m1-56h0m0 10h0m0 8h0m0 15h0m0 5h0m0 1h0m0 4h0m0 3h0m0 3h0m0 2h0m0 19h0m1-63h0m0 16h0m0 1h0m0 2h0m0 5h0m0 8h0m0 5h0m0 6h0m0 4h0m0 2h0m0 4h0m0 11h0m1-49h0m0 10h0m0 4h0m0 1h0m0 3h0m0 1h0m0 1h0m0 9h0m0 3h0m0 17h0m1-49h0m0 6h0m0 2h0m0 3h0m0 11h0m0 4h0m0 1h0m0 3h0m0 3h0m0 3h0m0 6h0m0 11h0m1-57h0m0 2h0m0 7h0m0 6h0m0 4h0m0 1h0m0 5h0m0 6h0m0 11h0m0 1h0m0 12h0m1-62h0m0 7h0m0 2h0m0 2h0m0 3h0m0 2h0m0 9h0m0 4h0m0 9h0m0 8h0m0 2h0m1-47h0m0 3h0m0 3h0m0 9h0m0 3h0m0 5h0m0 1h0m0 5h0m0 7h0m0 1h0m0 12h0m0 7h0m1-42h0m0 1h0m0 6h0m0 4h0m0 6h0m0 9h0m0 2h0m0 1h0m0 1h0m0 6h0m1-50h0m0 3h0m0 2h0m0 4h0m0 3h0m0 8h0m0 7h0m0 2h0m0 6h0m0 15h0m0 15h0m1-68h0m0 13h0m0 3h0m0 4h0m0 8h0m0 1h0m0 6h0m0 5h0m0 2h0m0 5h0m1-56h0m0 4h0m0 12h0m0 1h0m0 2h0m0 9h0m0 2h0m0 2h0m0 8h0m0 3h0m0 3h0m0 4h0m1-47h0m0 10h0m0 6h0m0 2h0m0 1h0m0 7h0m0 5h0m0 4h0m0 7h0m0 8h0m0 3h0m0 4h0m0 16h0m1-69h0m0 5h0m0 2h0m0 6h0m0 2h0m0 5h0m0 4h0m0 3h0m0 1h0m0 7h0m0 5h0m0 2h0m0 5h0m1-27h0m0 2h0m0 2h0m0 5h0m0 4h0m0 6h0m0 1h0m0 4h0m0 1h0m1-38h0m0 2h0m0 6h0m0 9h0m0 3h0m0 1h0m0 4h0m0 5h0m0 3h0m0 11h0m0 9h0m1-52h0m0 22h0m0 4h0m0 1h0m0 2h0m0 16h0m0 6h0m0 1h0m1-59h0m0 27h0m0 8h0m1-46h0m0 20h0m0 3h0m0 4h0m0 4h0m0 1h0m0 1h0m0 2h0m0 6h0m0 4h0m0 2h0m0 12h0m0 1h0m1-57h0m0 1h0m0 1h0m0 5h0m0 4h0m0 1h0m0 2h0m0 1h0m0 3h0m0 2h0m0 3h0m0 22h0m1-36h0m0 12h0m0 1h0m0 4h0m0 5h0m0 3h0m0 2h0m0 4h0m0 6h0m0 8h0m0 2h0m1-58h0m0 23h0m0 2h0m0 2h0m0 4h0m0 9h0m0 2h0m0 6h0m0 1h0m0 2h0m0 3h0m0 9h0m1-46h0m0 5h0m0 1h0m0 6h0m0 4h0m0 1h0m0 2h0m0 11h0m0 1h0m0 13h0m1-29h0m0 7h0m0 2h0m0 1h0m0 1h0m0 4h0m0 7h0m0 1h0m0 5h0m0 7h0m0 10h0m1-63h0m0 13h0m0 8h0m0 3h0m0 6h0m0 6h0m0 3h0m0 4h0m0 2h0m0 5h0m1-48h0m0 3h0m0 5h0m0 3h0m0 3h0m0 9h0m0 5h0m0 2h0m0 9h0m0 7h0m0 7h0m1-59h0m0 8h0m0 6h0m0 1h0m0 3h0m0 3h0m0 6h0m0 7h0m0 5h0m0 1h0m0 4h0m1-48h0m0 9h0m0 19h0m0 4h0m0 2h0m0 4h0m0 5h0m0 5h0m0 1h0m0 8h0m1-66h0m0 19h0m0 3h0m0 11h0m0 3h0m0 13h0m0 6h0m0 1h0m0 9h0m1-59h0m0 1h0m0 7h0m0 12h0m0 4h0m0 1h0m0 8h0m0 7h0m0 1h0m0 2h0m1-26h0m0 3h0m0 3h0m0 3h0m0 5h0m0 5h0m0 2h0m0 3h0m0 4h0m0 3h0m0 5h0m0 2h0m0 4h0m1-57h0m0 3h0m0 2h0m0 9h0m0 3h0m0 11h0m0 6h0m0 1h0m0 4h0m0 1h0m1-26h0m0 2h0m0 2h0m0 3h0m0 2h0m0 5h0m0 2h0m0 1h0m0 2h0m0 10h0m0 4h0m0 1h0m0 10h0m1-49h0m0 10h0m0 7h0m0 7h0m0 8h0m0 1h0m0 6h0m0 3h0m0 6h0m0 2h0m1-48h0m0 8h0m0 1h0m0 9h0m0 2h0m0 1h0m0 4h0m0 1h0m0 13h0m0 2h0m0 10h0m0 9h0m1-72h0m0 6h0m0 10h0m0 7h0m0 2h0m0 3h0m0 6h0m0 2h0m0 2h0m0 1h0m0 6h0m0 14h0m0 12h0m1-69h0m0 6h0m0 7h0m0 10h0m0 5h0m0 1h0m0 3h0m0 12h0m1-40h0m0 12h0m0 5h0m0 1h0m0 7h0m0 2h0m0 1h0m0 4h0m0 2h0m0 3h0m0 2h0m0 9h0m0 1h0m0 18h0m1-61h0m0 2h0m0 4h0m0 8h0m0 12h0m0 5h0m0 1h0m0 2h0m0 7h0m0 6h0m0 3h0m0 6h0m1-61h0m0 9h0m0 2h0m0 1h0m0 6h0m0 3h0m0 4h0m0 2h0m0 5h0m0 6h0m0 7h0m0 6h0m1-53h0m0 1h0m0 2h0m0 4h0m0 5h0m0 3h0m0 12h0m0 1h0m0 2h0m0 6h0m0 4h0m0 5h0m1-39h0m0 13h0m0 3h0m0 9h0m0 11h0m0 7h0m1-24h0m0 3h0m0 1h0m0 2h0m0 3h0m0 1h0m0 3h0m0 1h0m0 7h0m1-34h0m0 5h0m0 3h0m0 3h0m0 4h0m0 6h0m0 5h0m0 3h0m0 3h0m0 20h0m1-50h0m0 1h0m0 1h0m0 8h0m0 4h0m0 25h0m1-40h0m0 3h0m0 5h0m0 3h0m0 4h0m0 2h0m0 5h0m0 6h0m0 2h0m0 4h0m0 6h0m0 16h0m1-72h0m0 23h0m0 2h0m0 2h0m0 7h0m0 1h0m0 4h0m0 2h0m0 2h0m0 6h0m0 2h0m1-51h0m0 17h0m0 5h0m0 7h0m0 4h0m0 5h0m0 4h0m0 2h0m0 9h0m0 8h0m1-68h0m0 3h0m0 21h0m0 2h0m0 3h0m0 8h0m0 6h0m0 2h0m0 2h0m0 3h0m0 4h0m0 2h0m0 16h0m1-48h0m0 5h0m0 2h0m0 2h0m0 2h0m0 1h0m0 1h0m0 3h0m0 1h0m0 20h0m1-57h0m0 18h0m0 1h0m0 3h0m0 11h0m0 4h0m0 4h0m0 6h0m0 4h0m0 2h0m0 3h0m1-45h0m0 6h0m0 1h0m0 6h0m0 2h0m0 5h0m0 3h0m0 5h0m0 2h0m0 3h0m0 4h0m0 1h0m1-42h0m0 3h0m0 1h0m0 9h0m0 2h0m0 3h0m0 9h0m0 3h0m0 18h0m0 8h0m0 6h0m1-68h0m0 20h0m0 1h0m0 1h0m0 5h0m0 3h0m0 1h0m0 2h0m0 6h0m0 20h0m1-46h0m0 2h0m0 4h0m0 3h0m0 2h0m0 4h0m0 8h0m0 3h0m0 3h0m0 1h0m0 12h0m1-47h0m0 8h0m0 3h0m0 8h0m0 4h0m0 5h0m0 5h0m0 17h0m1-45h0m0 3h0m0 3h0m0 4h0m0 11h0m0 2h0m0 4h0m0 8h0m0 4h0m0 2h0m0 4h0m0 6h0m1-56h0m0 1h0m0 14h0m0 2h0m0 2h0m0 3h0m0 4h0m0 14h0m0 4h0m0 3h0m0 3h0m1-40h0m0 6h0m0 7h0m0 8h0m0 1h0m0 4h0m0 1h0m0 3h0m0 2h0m0 6h0m0 17h0m1-29h0m0 4h0m1-31h0m0 2h0m0 2h0m0 2h0m0 3h0m0 2h0m0 4h0m0 2h0m0 5h0m0 6h0m1-27h0m0 5h0m0 1h0m0 5h0m0 1h0m0 6h0m0 4h0m0 2h0m0 3h0m0 1h0m0 6h0m1-35h0m0 5h0m0 1h0m0 10h0m0 10h0m0 2h0m0 21h0m1-57h0m0 6h0m0 1h0m0 4h0m0 7h0m0 7h0m0 7h0m0 9h0m0 1h0m0 11h0m0 7h0m1-48h0m0 5h0m0 2h0m0 2h0m0 4h0m0 2h0m0 2h0m0 2h0m0 8h0m0 3h0m0 4h0m1-43h0m0 3h0m0 9h0m0 3h0m0 1h0m0 5h0m0 2h0m0 2h0m0 7h0m0 2h0m0 2h0m0 17h0m0 12h0m1-60h0m0 1h0m0 4h0m0 7h0m0 3h0m0 3h0m0 3h0m0 3h0m0 4h0m0 18h0m1-54h0m0 4h0m0 8h0m0 2h0m0 2h0m0 8h0m0 6h0m0 8h0m0 2h0m0 4h0m0 4h0m1-46h0m0 4h0m0 3h0m0 10h0m0 2h0m0 4h0m0 2h0m0 3h0m0 1h0m0 3h0m0 16h0m0 1h0m0 2h0m0 3h0m1-74h0m0 8h0m0 8h0m0 4h0m0 1h0m0 3h0m0 4h0m0 2h0m0 13h0m0 8h0m0 13h0m0 12h0m0 2h0m0 1h0m0 11h0m1-68h0m0 7h0m0 6h0m0 1h0m0 6h0m0 7h0m0 11h0m0 11h0m0 1h0m0 1h0m0 14h0m1-57h0m0 8h0m0 3h0m0 6h0m0 6h0m0 4h0m0 2h0m0 2h0m0 2h0m0 2h0m1-28h0m0 3h0m0 3h0m0 2h0m0 5h0m0 3h0m0 4h0m0 10h0m0 1h0m0 7h0m1-70h0m0 6h0m0 12h0m0 6h0m0 1h0m0 1h0m0 1h0m0 17h0m0 14h0m0 2h0m1-46h0m0 8h0m0 6h0m0 2h0m0 4h0m0 5h0m0 4h0m0 1h0m0 23h0m0 1h0m0 17h0m1-67h0m0 3h0m0 5h0m0 7h0m0 4h0m0 4h0m0 5h0m0 7h0m0 4h0m1-39h0m0 5h0m0 3h0m0 3h0m0 6h0m0 5h0m0 1h0m0 5h0m0 20h0m0 12h0m1-65h0m0 7h0m0 1h0m0 9h0m0 4h0m0 2h0m0 5h0m0 7h0m0 7h0m0 4h0m1-54h0m0 31h0m0 3h0m0 1h0m0 5h0m0 3h0m0 1h0m0 5h0m0 2h0m0 1h0m0 7h0m0 4h0m1-51h0m0 3h0m0 6h0m0 1h0m0 2h0m0 5h0m0 3h0m0 2h0m0 3h0m0 7h0m0 2h0m0 12h0m0 1h0m0 10h0m1-60h0m0 1h0m0 4h0m0 4h0m0 1h0m0 8h0m0 5h0m0 1h0m0 5h0m0 1h0m0 11h0m0 14h0m0 10h0m1-76h0m0 12h0m0 8h0m0 4h0m0 2h0m0 6h0m0 11h0m0 2h0m0 1h0m0 1h0m0 3h0m0 5h0m0 6h0m0 14h0m1-54h0m0 7h0m0 1h0m0 4h0m0 4h0m0 2h0m0 2h0m0 3h0m0 1h0m0 7h0m0 1h0m1-21h0m1-27h0m0 18h0m0 1h0m0 8h0m0 3h0m0 2h0m0 2h0m0 6h0m0 2h0m1-35h0m0 6h0m0 2h0m0 1h0m0 2h0m0 5h0m0 3h0m0 2h0m0 8h0m0 4h0m0 3h0m1-44h0m0 1h0m0 4h0m0 1h0m0 9h0m0 3h0m0 5h0m0 1h0m0 6h0m0 15h0m0 13h0m1-37h0m0 4h0m0 1h0m0 5h0m0 1h0m0 3h0m0 3h0m0 7h0m0 2h0m0 11h0m0 2h0m1-46h0m0 11h0m0 1h0m0 14h0m0 3h0m0 1h0m0 5h0m0 17h0m1-53h0m0 6h0m0 4h0m0 3h0m0 1h0m0 1h0m0 9h0m0 4h0m0 4h0m0 1h0m0 3h0m0 6h0m0 16h0m1-52h0m0 1h0m0 3h0m0 1h0m0 7h0m0 3h0m0 6h0m0 12h0m0 3h0m0 2h0m1-39h0m0 4h0m0 3h0m0 10h0m0 3h0m0 6h0m0 5h0m0 2h0m0 9h0m0 1h0m1-62h0m0 21h0m0 4h0m0 7h0m0 6h0m0 4h0m0 4h0m0 1h0m0 1h0m0 7h0m1-49h0m0 9h0m0 8h0m0 4h0m0 3h0m0 3h0m0 1h0m0 5h0m0 7h0m0 10h0m1-44h0m0 4h0m0 3h0m0 12h0m0 2h0m0 5h0m0 3h0m0 4h0m0 3h0m0 2h0m0 2h0m1-43h0m0 2h0m0 4h0m0 6h0m0 2h0m0 5h0m0 5h0m0 2h0m0 7h0m0 1h0m0 1h0m0 5h0m1-49h0m0 6h0m0 2h0m0 10h0m0 6h0m0 2h0m0 3h0m0 3h0m0 5h0m0 4h0m0 6h0m0 7h0m1-47h0m0 3h0m0 4h0m0 1h0m0 5h0m0 8h0m0 5h0m0 2h0m0 4h0m0 10h0m0 1h0m0 7h0m1-37h0m0 3h0m0 2h0m0 4h0m0 1h0m0 1h0m0 2h0m0 1h0m0 1h0m0 9h0m0 4h0m0 1h0m0 2h0m0 16h0m1-61h0m0 1h0m0 2h0m0 2h0m0 6h0m0 1h0m0 21h0m0 2h0m0 4h0m0 3h0m1-38h0m0 9h0m0 5h0m0 2h0m0 3h0m0 1h0m0 3h0m0 6h0m0 1h0m0 2h0m0 5h0m0 3h0m0 5h0m1-47h0m0 3h0m0 9h0m0 2h0m0 7h0m0 10h0m0 6h0m0 1h0m0 5h0m0 4h0m0 6h0m0 1h0m1-51h0m0 5h0m0 8h0m0 5h0m0 12h0m0 2h0m0 5h0m0 6h0m0 1h0m0 6h0m0 15h0m1-69h0m0 4h0m0 14h0m0 1h0m0 2h0m0 10h0m0 7h0m0 4h0m0 1h0m0 4h0m0 12h0m0 3h0m1-48h0m0 8h0m0 2h0m0 1h0m0 5h0m0 7h0m0 7h0m0 4h0m0 2h0m0 14h0m1-63h0m0 8h0m0 8h0m0 7h0m0 4h0m0 2h0m0 4h0m0 1h0m0 5h0m0 8h0m1-56h0m0 7h0m0 5h0m0 10h0m0 6h0m0 1h0m0 15h0m0 5h0m0 1h0m1-38h0m0 1h0m0 2h0m0 14h0m0 1h0m0 2h0m0 1h0m0 6h0m0 1h0m0 15h0m0 8h0m0 1h0m1-46h0m0 2h0m0 5h0m0 1h0m0 2h0m0 4h0m0 4h0m0 3h0m0 2h0m0 5h0m2-45h0m0 17h0m0 3h0m0 2h0m0 1h0m0 5h0m0 1h0m0 2h0m0 3h0m0 5h0m1-27h0m0 7h0m0 5h0m0 3h0m0 5h0m0 9h0m0 2h0m0 1h0m0 4h0m0 2h0m0 7h0m0 4h0m1-51h0m0 4h0m0 1h0m0 2h0m0 14h0m0 1h0m0 1h0m0 4h0m0 1h0m0 5h0m0 11h0m0 13h0m1-74h0m0 26h0m0 3h0m0 7h0m0 5h0m0 2h0m0 6h0m0 3h0m0 3h0m0 1h0m0 16h0m0 8h0m1-70h0m0 15h0m0 2h0m0 6h0m0 1h0m0 13h0m0 6h0m0 2h0m0 4h0m0 2h0m0 1h0m1-38h0m0 5h0m0 1h0m0 8h0m0 6h0m0 13h0m0 2h0m0 9h0m0 2h0m0 1h0m0 2h0m1-46h0m0 2h0m0 3h0m0 2h0m0 3h0m0 1h0m0 2h0m0 2h0m0 1h0m0 4h0m0 1h0m0 2h0m1-51h0m0 19h0m0 4h0m0 8h0m0 4h0m0 3h0m0 1h0m0 7h0m0 2h0m0 4h0m0 2h0m1-41h0m0 7h0m0 5h0m0 2h0m0 5h0m0 12h0m0 4h0m0 1h0m0 6h0m0 3h0m1-45h0m0 15h0m0 11h0m0 3h0m0 1h0m0 4h0m0 4h0m0 1h0m0 1h0m0 8h0m0 21h0m1-66h0m0 7h0m0 7h0m0 4h0m0 3h0m0 2h0m0 18h0m0 2h0m0 1h0m0 3h0m0 1h0m1-53h0m0 13h0m0 2h0m0 3h0m0 2h0m0 5h0m0 4h0m0 4h0m0 13h0m0 3h0m0 10h0m0 9h0m1-64h0m0 1h0m0 15h0m0 9h0m0 2h0m0 5h0m0 1h0m0 2h0m0 6h0m0 7h0m1-49h0m0 15h0m0 2h0m0 6h0m0 2h0m0 2h0m0 6h0m0 7h0m0 6h0m0 2h0m0 5h0m0 5h0m1-60h0m0 14h0m0 1h0m0 4h0m0 1h0m0 3h0m0 1h0m0 5h0m0 13h0m0 4h0m1-48h0m0 7h0m0 6h0m0 8h0m0 1h0m0 13h0m0 2h0m0 9h0m0 1h0m0 3h0m0 12h0m1-41h0m0 2h0m0 6h0m0 1h0m0 4h0m0 1h0m0 2h0m0 1h0m0 3h0m0 16h0m0 9h0m0 4h0m1-53h0m0 1h0m0 1h0m0 1h0m0 7h0m0 5h0m0 4h0m0 2h0m0 2h0m0 1h0m0 2h0m0 1h0m0 14h0m1-47h0m0 6h0m0 3h0m0 4h0m0 5h0m0 2h0m0 3h0m0 6h0m0 1h0m0 2h0m0 1h0m0 4h0m0 9h0m1-47h0m0 1h0m0 3h0m0 10h0m0 2h0m0 1h0m0 11h0m0 8h0m0 2h0m0 3h0m0 4h0m0 3h0m1-59h0m0 15h0m0 5h0m0 3h0m0 1h0m0 5h0m0 7h0m0 11h0m0 1h0m0 8h0m1-42h0m0 4h0m0 3h0m0 5h0m0 7h0m0 8h0m0 5h0m0 5h0m0 7h0m0 4h0m0 3h0m1-73h0m0 6h0m0 6h0m0 1h0m0 6h0m0 8h0m0 3h0m0 1h0m0 3h0m0 6h0m0 2h0m0 6h0m0 9h0m1-36h0m0 2h0m0 7h0m0 6h0m0 1h0m0 4h0m0 3h0m0 2h0m0 2h0m0 1h0m0 7h0m1-60h0m0 23h0m0 4h0m0 1h0m0 5h0m0 6h0m0 4h0m0 3h0m0 1h0m0 3h0m0 5h0m0 16h0m0 1h0m1-60h0m0 5h0m0 11h0m0 1h0m0 8h0m0 5h0m0 8h0m0 6h0m0 1h0m0 5h0m0 7h0m1-47h0m0 12h0m0 30h0m1-49h0m0 14h0m0 10h0m0 4h0m0 4h0m0 1h0m0 8h0m0 11h0m1-58h0m0 19h0m0 2h0m0 1h0m0 1h0m0 3h0m0 2h0m0 2h0m0 4h0m0 6h0m0 3h0m0 6h0m0 6h0m1-41h0m0 5h0m0 1h0m0 3h0m0 6h0m0 2h0m0 3h0m0 8h0m0 1h0m0 18h0m1-46h0m0 10h0m0 5h0m0 5h0m0 6h0m0 5h0m0 2h0m0 2h0m0 2h0m0 5h0m0 8h0m1-50h0m0 6h0m0 4h0m0 4h0m0 1h0m0 2h0m0 4h0m0 6h0m0 2h0m0 1h0m0 3h0m1-35h0m0 3h0m0 2h0m0 7h0m0 8h0m0 3h0m0 4h0m0 8h0m0 9h0m0 7h0m1-52h0m0 7h0m0 15h0m0 1h0m0 2h0m0 1h0m0 3h0m0 3h0m0 5h0m0 3h0m0 12h0m1-46h0m0 11h0m0 1h0m0 15h0m0 1h0m0 4h0m0 6h0m0 2h0m0 5h0m0 2h0m0 7h0m0 4h0m0 1h0m1-55h0m0 2h0m0 5h0m0 5h0m0 1h0m0 2h0m0 6h0m0 5h0m0 8h0m0 4h0m0 1h0m0 4h0m1-59h0m0 8h0m0 3h0m0 3h0m0 3h0m0 1h0m0 2h0m0 10h0m0 4h0m0 1h0m0 7h0m0 1h0m0 5h0m1-28h0m0 1h0m0 4h0m0 3h0m0 8h0m0 7h0m0 3h0m0 1h0m0 3h0m1-57h0m0 2h0m0 1h0m0 1h0m0 10h0m0 11h0m0 4h0m0 9h0m0 12h0m0 20h0m1-77h0m0 7h0m0 6h0m0 10h0m0 2h0m0 6h0m0 3h0m0 4h0m0 7h0m0 7h0m0 3h0m0 1h0m0 27h0m1-62h0m0 5h0m0 2h0m0 2h0m0 6h0m0 5h0m0 2h0m0 2h0m0 6h0m0 6h0m0 2h0m0 2h0m1-43h0m0 14h0m0 2h0m0 2h0m0 8h0m0 7h0m0 2h0m0 8h0m0 10h0m1-52h0m0 5h0m0 3h0m0 3h0m0 8h0m0 1h0m0 1h0m0 8h0m0 1h0m0 4h0m0 3h0m0 11h0m0 4h0m1-56h0m0 18h0m0 8h0m0 4h0m0 3h0m0 1h0m0 3h0m0 4h0m0 3h0m0 3h0m0 2h0m0 2h0m1-64h0m0 16h0m0 6h0m0 2h0m0 8h0m0 10h0m0 4h0m0 8h0m0 2h0m0 11h0m0 7h0m1-67h0m0 9h0m0 11h0m0 5h0m0 2h0m0 4h0m0 3h0m0 1h0m0 19h0m0 6h0m1-71h0m0 22h0m0 7h0m0 3h0m0 2h0m0 9h0m0 3h0m0 2h0m0 6h0m0 2h0m0 4h0m0 5h0m0 3h0m1-65h0m0 27h0m0 4h0m0 6h0m0 1h0m0 1h0m0 6h0m0 3h0m0 6h0m0 5h0m1-58h0m0 20h0m0 17h0m0 1h0m0 7h0m0 1h0m0 2h0m0 2h0m0 3h0m0 3h0m0 4h0m1-46h0m0 10h0m0 2h0m0 2h0m0 1h0m0 3h0m0 1h0m0 1h0m0 3h0m0 4h0m0 3h0m0 6h0m0 3h0m1-34h0m0 9h0m0 4h0m0 2h0m0 7h0m0 2h0m0 10h0m0 7h0m1-46h0m0 2h0m0 9h0m0 7h0m0 4h0m0 10h0m0 1h0m0 1h0m0 2h0m0 2h0m0 1h0m0 29h0m1-57h0m0 6h0m0 7h0m0 1h0m0 1h0m0 2h0m0 7h0m0 4h0m1-34h0m0 2h0m0 5h0m0 1h0m0 1h0m0 1h0m0 5h0m0 3h0m0 7h0m0 5h0m0 17h0m1-49h0m0 10h0m0 5h0m0 2h0m0 5h0m0 2h0m0 8h0m0 3h0m0 1h0m0 5h0m0 1h0m0 1h0m0 20h0m1-69h0m0 3h0m0 4h0m0 6h0m0 4h0m0 4h0m0 1h0m0 4h0m0 5h0m0 6h0m0 17h0m1-55h0m0 29h0m0 13h0m0 6h0m0 5h0m1-57h0m0 3h0m0 7h0m0 20h0m0 3h0m0 3h0m0 16h0m1-39h0m0 8h0m0 4h0m0 1h0m0 3h0m0 2h0m0 5h0m0 3h0m0 3h0m0 1h0m0 7h0m0 14h0m1-56h0m0 4h0m0 2h0m0 3h0m0 5h0m0 6h0m0 1h0m0 2h0m0 14h0m0 3h0m0 4h0m0 3h0m1-49h0m0 19h0m0 1h0m0 2h0m0 4h0m0 3h0m0 4h0m0 1h0m0 8h0m0 10h0m1-65h0m0 20h0m0 3h0m0 1h0m0 4h0m0 2h0m0 4h0m0 2h0m0 4h0m0 2h0m0 2h0m0 6h0m0 4h0m0 6h0m0 4h0m1-46h0m0 6h0m0 6h0m0 3h0m0 2h0m0 3h0m0 7h0m0 6h0m0 6h0m0 1h0m0 26h0m1-68h0m0 2h0m0 8h0m0 2h0m0 11h0m0 2h0m0 1h0m0 2h0m0 4h0m0 9h0m0 7h0m1-60h0m0 6h0m0 2h0m0 7h0m0 3h0m0 8h0m0 2h0m0 4h0m0 2h0m0 4h0m0 3h0m0 8h0m0 3h0m1-55h0m0 6h0m0 16h0m0 2h0m0 2h0m0 1h0m0 6h0m0 6h0m0 2h0m0 9h0m0 2h0m0 1h0m0 26h0m1-76h0m0 14h0m0 10h0m0 8h0m0 2h0m0 4h0m0 1h0m0 2h0m0 10h0m0 1h0m0 3h0m0 14h0m1-53h0m0 4h0m0 2h0m0 5h0m0 1h0m0 6h0m0 7h0m0 1h0m0 32h0m0 1h0m1-58h0m0 1h0m0 4h0m0 8h0m0 2h0m0 2h0m0 11h0m0 2h0m0 3h0m0 1h0m0 1h0m1-49h0m0 12h0m0 11h0m0 2h0m0 8h0m0 1h0m0 2h0m0 7h0m0 3h0m0 33h0m1-52h0m0 4h0m0 19h0m1-43h0m0 4h0m0 3h0m0 4h0m0 1h0m0 4h0m0 13h0m0 1h0m0 2h0m0 1h0m0 2h0m0 11h0m0 13h0m1-46h0m0 2h0m0 3h0m0 3h0m0 2h0m0 1h0m0 3h0m0 3h0m0 6h0m0 2h0m0 9h0m0 1h0m0 17h0m1-48h0m0 10h0m0 4h0m0 3h0m0 1h0m0 1h0m0 6h0m0 6h0m0 6h0m1-49h0m0 1h0m0 5h0m0 6h0m0 1h0m0 1h0m0 6h0m0 5h0m0 10h0m0 1h0m0 15h0m1-50h0m0 1h0m0 10h0m0 5h0m0 6h0m0 4h0m0 4h0m0 7h0m0 1h0m0 1h0m0 4h0m0 1h0m0 9h0m1-46h0m0 2h0m0 24h0m0 5h0m0 1h0m0 2h0m0 1h0m0 3h0m0 4h0m0 1h0m0 5h0m1-59h0m0 1h0m0 18h0m0 2h0m0 8h0m0 1h0m0 3h0m0 3h0m0 5h0m0 3h0m0 3h0m0 8h0m1-51h0m0 19h0m0 3h0m0 9h0m0 1h0m0 1h0m0 6h0m0 5h0m0 2h0m0 4h0m1-51h0m0 4h0m0 1h0m0 7h0m0 7h0m0 4h0m0 2h0m0 1h0m0 6h0m0 6h0m0 7h0m0 4h0m1-53h0m0 19h0m0 2h0m0 8h0m0 3h0m0 1h0m0 6h0m0 1h0m0 1h0m0 22h0m1-55h0m0 8h0m0 6h0m0 2h0m0 3h0m0 3h0m0 1h0m0 1h0m0 3h0m0 5h0m0 1h0m0 2h0m0 4h0m0 2h0m1-65h0m0 13h0m0 5h0m0 8h0m0 1h0m0 1h0m0 1h0m0 28h0m0 9h0m0 8h0m0 3h0m0 5h0m1-80h0m0 10h0m0 8h0m0 1h0m0 11h0m0 7h0m0 10h0m0 2h0m0 10h0m0 11h0m0 13h0m1-75h0m0 20h0m0 1h0m0 1h0m0 5h0m0 5h0m0 5h0m0 19h0m0 4h0m0 1h0m0 3h0m1-44h0m0 4h0m0 5h0m0 4h0m0 4h0m0 12h0m0 4h0m0 6h0m0 2h0m0 7h0m1-52h0m0 15h0m0 1h0m0 1h0m0 4h0m0 1h0m0 3h0m0 7h0m0 6h0m0 2h0m0 1h0m0 6h0m0 8h0m1-55h0m0 4h0m0 3h0m0 1h0m0 2h0m0 9h0m0 4h0m0 7h0m0 9h0m0 6h0m0 7h0m0 1h0m1-75h0m0 23h0m0 4h0m0 5h0m0 2h0m0 5h0m0 1h0m0 2h0m0 5h0m0 1h0m0 5h0m0 7h0m0 3h0m0 14h0m1-68h0m0 1h0m0 5h0m0 1h0m0 11h0m0 2h0m0 7h0m0 10h0m0 3h0m0 1h0m0 5h0m0 25h0m1-73h0m0 13h0m0 3h0m0 7h0m0 5h0m0 1h0m0 6h0m0 4h0m0 6h0m0 6h0m0 3h0m0 14h0m1-66h0m0 9h0m0 6h0m0 3h0m0 8h0m0 4h0m0 5h0m0 1h0m0 9h0m0 6h0m0 13h0m1-51h0m0 2h0m0 12h0m0 15h0m0 4h0m1-21h0m0 1h0m0 4h0m0 3h0m0 3h0m0 1h0m0 1h0m0 1h0m0 2h0m0 4h0m0 7h0m0 2h0m0 3h0m1-60h0m0 2h0m0 3h0m0 3h0m0 5h0m0 5h0m0 4h0m0 16h0m0 1h0m0 10h0m0 3h0m0 6h0m1-51h0m0 8h0m0 2h0m0 3h0m0 8h0m0 2h0m0 1h0m0 2h0m0 4h0m0 2h0m0 2h0m0 4h0m0 11h0m1-55h0m0 11h0m0 2h0m0 13h0m0 5h0m0 2h0m0 10h0m0 1h0m0 8h0m1-55h0m0 20h0m0 5h0m0 2h0m0 8h0m0 2h0m0 6h0m0 1h0m0 11h0m0 7h0m1-43h0m0 1h0m0 1h0m0 1h0m0 5h0m0 5h0m0 1h0m0 2h0m0 4h0m0 1h0m0 2h0m0 4h0m0 22h0m1-72h0m0 14h0m0 3h0m0 5h0m0 5h0m0 4h0m0 16h0m0 3h0m0 2h0m0 5h0m0 2h0m0 5h0m0 4h0m1-67h0m0 6h0m0 1h0m0 2h0m0 26h0m0 5h0m0 9h0m0 3h0m0 1h0m0 22h0m0 1h0m0 4h0m1-65h0m0 15h0m0 8h0m0 5h0m0 2h0m0 4h0m0 1h0m0 1h0m1-31h0m0 3h0m0 2h0m0 7h0m0 1h0m0 2h0m0 1h0m0 5h0m1-31h0m0 6h0m0 4h0m0 2h0m0 1h0m0 2h0m0 3h0m0 1h0m0 2h0m0 7h0m0 3h0m0 15h0m1-52h0m0 19h0m0 6h0m1-14h0m0 5h0m0 3h0m0 4h0m0 7h0m0 2h0m0 2h0m0 2h0m0 1h0m0 1h0m0 6h0m0 1h0m0 6h0m1-48h0m0 4h0m0 5h0m0 10h0m0 5h0m0 2h0m0 2h0m0 6h0m0 2h0m0 1h0m0 2h0m0 5h0m0 6h0m1-38h0m0 6h0m0 4h0m0 8h0m0 2h0m0 4h0m0 5h0m0 1h0m0 1h0m0 2h0m0 5h0m0 3h0m1-59h0m0 41h0m0 3h0m0 1h0m0 1h0m0 1h0m0 9h0m0 2h0m0 3h0m0 3h0m0 8h0m1-56h0m0 2h0m0 7h0m0 4h0m0 1h0m0 2h0m0 2h0m0 8h0m0 1h0m0 8h0m0 4h0m0 13h0m0 6h0m1-80h0m0 7h0m0 11h0m0 1h0m0 1h0m0 4h0m0 2h0m0 3h0m0 2h0m0 4h0m0 1h0m0 13h0m0 8h0m1-57h0m0 3h0m0 18h0m0 14h0m0 1h0m0 2h0m0 4h0m0 3h0m0 3h0m0 2h0m0 4h0m0 1h0m0 12h0m1-58h0m0 5h0m0 14h0m0 6h0m0 2h0m0 2h0m0 3h0m0 2h0m0 23h0m0 6h0m1-56h0m0 6h0m0 6h0m0 2h0m0 5h0m0 9h0m0 2h0m0 2h0m0 1h0m0 1h0m0 1h0m0 4h0m0 3h0m1-54h0m0 21h0m0 1h0m0 6h0m0 1h0m0 1h0m0 4h0m0 2h0m0 5h0m0 1h0m0 2h0m0 19h0m1-51h0m0 5h0m0 4h0m0 2h0m0 12h0m0 2h0m0 8h0m0 3h0m0 2h0m0 3h0m0 1h0m0 5h0m1-46h0m0 9h0m0 1h0m0 5h0m0 2h0m0 3h0m0 4h0m0 1h0m0 6h0m0 8h0m0 6h0m0 8h0m1-51h0m0 15h0m0 2h0m0 2h0m0 7h0m0 3h0m0 3h0m0 2h0m0 4h0m0 2h0m0 3h0m1-42h0m0 2h0m0 6h0m0 2h0m0 14h0m0 12h0m0 3h0m1-27h0m0 5h0m0 4h0m0 6h0m0 3h0m0 1h0m0 4h0m0 4h0m0 7h0m0 10h0m1-63h0m0 3h0m0 14h0m0 5h0m0 4h0m0 3h0m0 12h0m0 4h0m0 4h0m0 21h0m1-85h0m0 14h0m0 3h0m0 1h0m0 5h0m0 1h0m0 2h0m0 1h0m0 21h0m0 34h0m1-66h0m0 18h0m0 2h0m0 1h0m0 2h0m0 4h0m0 3h0m0 1h0m0 2h0m0 3h0m0 7h0m0 12h0m0 8h0m2-53h0m0 13h0m0 5h0m0 1h0m0 2h0m0 7h0m1-34h0m0 10h0m0 11h0m0 3h0m0 1h0m0 3h0m0 6h0m0 3h0m0 9h0m0 2h0m0 12h0m0 3h0m1-80h0m0 28h0m0 2h0m0 4h0m0 2h0m0 1h0m0 1h0m0 6h0m0 5h0m0 10h0m0 3h0m0 6h0m1-57h0m0 9h0m0 6h0m0 4h0m0 1h0m0 3h0m0 5h0m0 7h0m0 1h0m0 5h0m0 8h0m0 1h0m0 2h0m1-50h0m0 7h0m0 2h0m0 10h0m0 3h0m0 3h0m0 11h0m0 1h0m0 10h0m1-45h0m0 7h0m0 2h0m0 3h0m0 2h0m0 12h0m0 1h0m0 14h0m0 1h0m0 1h0m0 6h0m1-42h0m0 8h0m0 8h0m0 4h0m0 6h0m0 2h0m0 9h0m0 9h0m0 3h0m0 9h0m1-52h0m0 4h0m0 4h0m0 7h0m0 1h0m0 2h0m0 2h0m0 2h0m0 1h0m0 8h0m0 6h0m1-50h0m0 12h0m0 3h0m0 3h0m0 9h0m0 5h0m0 4h0m0 4h0m0 2h0m0 2h0m0 18h0m1-72h0m0 20h0m0 3h0m0 3h0m0 7h0m0 2h0m0 4h0m0 5h0m0 4h0m0 3h0m0 16h0m1-59h0m0 11h0m0 14h0m0 7h0m0 1h0m0 2h0m0 7h0m0 2h0m0 3h0m0 2h0m0 4h0m1-34h0m0 3h0m0 6h0m0 5h0m0 5h0m0 1h0m0 9h0m0 5h0m0 10h0m1-55h0m0 11h0m0 1h0m0 6h0m0 1h0m0 3h0m0 4h0m0 6h0m0 5h0m0 2h0m1-37h0m0 1h0m0 6h0m0 13h0m0 4h0m0 1h0m0 2h0m0 3h0m0 5h0m0 5h0m0 3h0m0 10h0m1-52h0m0 8h0m0 2h0m0 2h0m0 2h0m0 6h0m0 5h0m0 7h0m0 6h0m0 8h0m0 11h0m1-63h0m0 8h0m0 2h0m0 2h0m0 11h0m0 7h0m0 4h0m0 3h0m0 5h0m0 3h0m0 20h0m1-70h0m0 1h0m0 13h0m0 6h0m0 1h0m0 14h0m0 4h0m0 11h0m0 12h0m1-61h0m0 10h0m0 10h0m0 1h0m0 8h0m0 5h0m0 3h0m0 4h0m0 3h0m0 1h0m0 2h0m1-34h0m0 2h0m0 2h0m0 7h0m0 5h0m0 4h0m0 2h0m0 3h0m0 1h0m0 1h0m0 2h0m0 11h0m1-49h0m0 2h0m0 2h0m0 1h0m0 1h0m0 3h0m0 6h0m0 3h0m0 1h0m0 5h0m0 5h0m0 12h0m1-47h0m0 7h0m0 4h0m0 1h0m0 8h0m0 9h0m0 2h0m0 1h0m0 6h0m0 1h0m0 20h0m1-66h0m0 3h0m0 9h0m0 4h0m0 8h0m0 5h0m0 2h0m0 1h0m0 2h0m0 1h0m0 10h0m0 1h0m0 1h0m0 11h0m1-56h0m0 5h0m0 4h0m0 9h0m0 14h0m0 4h0m0 12h0m0 5h0m0 1h0m0 2h0m0 17h0m0 6h0m1-66h0m0 6h0m0 3h0m0 1h0m0 2h0m0 3h0m0 5h0m0 4h0m0 1h0m0 1h0m0 8h0m0 2h0m0 2h0m0 4h0m1-45h0m0 7h0m0 2h0m0 13h0m0 1h0m0 6h0m0 2h0m0 2h0m0 3h0m0 5h0m0 1h0m0 8h0m1-49h0m0 2h0m0 9h0m0 5h0m0 2h0m0 3h0m0 5h0m0 13h0m0 4h0m0 3h0m0 6h0m0 1h0m1-46h0m0 1h0m0 1h0m0 3h0m0 2h0m0 3h0m0 2h0m0 7h0m0 15h0m1-55h0m0 10h0m0 6h0m0 6h0m0 1h0m0 4h0m0 3h0m0 1h0m0 1h0m0 3h0m0 1h0m0 3h0m0 4h0m0 2h0m1-39h0m0 18h0m0 6h0m0 3h0m0 5h0m0 3h0m0 2h0m0 2h0m0 4h0m0 3h0m0 2h0m0 4h0m1-45h0m0 8h0m0 1h0m0 15h0m0 2h0m0 5h0m0 2h0m0 4h0m0 5h0m1-42h0m0 8h0m0 3h0m0 13h0m0 3h0m0 3h0m0 6h0m0 3h0m0 3h0m0 4h0m0 7h0m1-50h0m0 7h0m0 4h0m0 2h0m0 2h0m0 1h0m0 7h0m0 3h0m0 13h0m0 3h0m0 6h0m0 5h0m0 14h0m1-74h0m0 4h0m0 8h0m0 13h0m0 2h0m0 1h0m0 3h0m0 5h0m0 3h0m0 6h0m0 15h0m0 1h0m1-49h0m0 7h0m0 7h0m0 1h0m0 9h0m0 3h0m0 3h0m0 7h0m0 1h0m1-39h0m0 11h0m0 12h0m0 3h0m0 6h0m0 3h0m0 2h0m0 7h0m0 2h0m0 2h0m1-57h0m0 2h0m0 2h0m0 12h0m0 3h0m0 3h0m0 5h0m0 1h0m0 1h0m0 3h0m0 2h0m1-40h0m0 22h0m0 3h0m0 5h0m0 10h0m0 8h0m0 3h0m0 5h0m1-46h0m0 14h0m0 2h0m0 2h0m0 2h0m0 2h0m0 12h0m0 3h0m0 9h0m1-56h0m0 4h0m0 13h0m0 8h0m0 1h0m0 7h0m0 3h0m0 3h0m0 2h0m0 3h0m0 2h0m0 17h0m2-43h0m0 20h0m0 4h0m0 6h0m0 6h0m0 1h0m1-39h0m0 7h0m0 1h0m0 3h0m0 7h0m0 1h0m0 2h0m0 2h0m0 1h0m0 1h0m0 5h0m0 9h0m0 12h0m1-51h0m0 1h0m0 3h0m0 1h0m0 7h0m0 5h0m0 1h0m0 3h0m0 3h0m0 3h0m0 15h0m1-46h0m0 12h0m0 7h0m0 2h0m0 9h0m0 4h0m0 2h0m0 4h0m0 4h0m0 12h0m1-64h0m0 10h0m0 2h0m0 7h0m0 4h0m0 6h0m0 1h0m0 7h0m0 1h0m0 8h0m0 2h0m1-62h0m0 7h0m0 3h0m0 15h0m0 3h0m0 2h0m0 4h0m0 2h0m0 4h0m0 7h0m0 2h0m0 11h0m0 1h0m0 2h0m0 22h0m1-82h0m0 1h0m0 2h0m0 5h0m0 2h0m0 3h0m0 4h0m0 6h0m0 3h0m0 22h0m0 20h0m0 6h0m1-67h0m0 7h0m0 8h0m0 4h0m0 1h0m0 8h0m0 1h0m0 14h0m0 10h0m0 3h0m0 6h0m0 4h0m0 7h0m1-58h0m0 5h0m0 4h0m0 2h0m0 4h0m0 3h0m0 2h0m0 6h0m0 3h0m0 7h0m0 7h0m0 3h0m1-45h0m0 1h0m0 4h0m0 3h0m0 8h0m0 3h0m0 2h0m0 3h0m0 2h0m0 6h0m1-51h0m0 12h0m0 9h0m0 5h0m0 3h0m0 2h0m0 3h0m0 2h0m0 1h0m0 6h0m0 2h0m0 8h0m1-41h0m0 11h0m0 17h0m0 1h0m0 1h0m0 4h0m0 7h0m0 3h0m0 4h0m1-44h0m0 3h0m0 2h0m0 1h0m0 2h0m0 4h0m0 5h0m0 8h0m0 9h0m0 1h0m1-43h0m0 14h0m0 4h0m0 2h0m0 5h0m0 1h0m0 3h0m0 1h0m0 7h0m0 2h0m0 4h0m0 1h0m0 3h0m1-44h0m0 3h0m0 7h0m0 5h0m0 1h0m0 3h0m0 5h0m0 4h0m0 4h0m0 1h0m0 21h0m0 1h0m0 2h0m1-65h0m0 3h0m0 16h0m0 2h0m0 1h0m0 13h0m0 12h0m0 1h0m0 9h0m0 2h0m0 5h0m0 3h0m0 5h0m1-62h0m0 8h0m0 8h0m0 10h0m0 1h0m0 3h0m0 4h0m0 1h0m0 4h0m0 4h0m0 3h0m1-47h0m0 5h0m0 5h0m0 2h0m0 2h0m0 5h0m0 1h0m0 4h0m0 10h0m0 3h0m0 4h0m1-44h0m0 23h0m0 6h0m0 18h0m0 3h0m0 1h0m0 7h0m0 12h0m1-57h0m0 3h0m0 2h0m0 11h0m0 7h0m0 1h0m0 1h0m0 3h0m0 1h0m0 3h0m0 5h0m0 5h0m1-55h0m0 18h0m0 1h0m0 1h0m0 1h0m0 3h0m0 2h0m0 10h0m0 17h0m0 2h0m1-49h0m0 6h0m0 3h0m0 11h0m0 4h0m0 1h0m0 2h0m0 1h0m0 6h0m0 4h0m1-56h0m0 8h0m0 2h0m0 5h0m0 9h0m0 4h0m0 5h0m0 3h0m0 1h0m0 3h0m0 7h0m0 10h0m1-57h0m0 7h0m0 1h0m0 10h0m0 5h0m0 6h0m0 13h0m0 3h0m1-28h0m0 4h0m0 4h0m0 2h0m0 4h0m0 1h0m0 5h0m0 3h0m0 1h0m0 9h0m0 8h0m0 3h0m0 5h0m1-47h0m0 13h0m0 2h0m0 2h0m0 8h0m0 3h0m0 1h0m0 2h0m0 1h0m2-38h0m0 1h0m0 3h0m0 1h0m0 4h0m0 7h0m0 5h0m0 6h0m0 1h0m0 2h0m0 7h0m0 1h0m0 1h0m1-35h0m0 3h0m0 2h0m0 10h0m0 2h0m0 9h0m0 6h0m0 5h0m0 8h0m0 1h0m0 7h0m1-73h0m0 29h0m0 3h0m0 1h0m0 2h0m0 6h0m0 2h0m0 1h0m0 7h0m0 1h0m0 3h0m0 3h0m0 3h0m1-51h0m0 7h0m0 3h0m0 4h0m0 3h0m0 15h0m0 1h0m0 9h0m0 5h0m0 14h0m1-54h0m0 1h0m0 1h0m0 4h0m0 9h0m0 6h0m0 8h0m0 2h0m0 1h0m0 6h0m0 6h0m0 2h0m1-45h0m0 3h0m0 12h0m0 8h0m0 1h0m0 1h0m0 5h0m0 6h0m1-32h0m0 2h0m0 6h0m0 7h0m0 4h0m0 1h0m0 3h0m0 1h0m0 6h0m0 4h0m1-39h0m0 10h0m0 7h0m0 1h0m0 1h0m0 4h0m0 2h0m0 1h0m0 4h0m0 3h0m0 5h0m0 2h0m0 5h0m1-55h0m0 2h0m0 3h0m0 15h0m0 4h0m0 6h0m0 4h0m0 4h0m0 4h0m0 5h0m0 4h0m0 2h0m1-51h0m0 6h0m0 9h0m0 6h0m0 1h0m0 9h0m0 1h0m0 11h0m0 3h0m0 4h0m1-47h0m0 11h0m0 4h0m0 5h0m0 3h0m0 1h0m0 1h0m0 7h0m0 3h0m0 1h0m1-41h0m0 16h0m0 8h0m0 4h0m0 2h0m0 8h0m0 2h0m0 4h0m0 1h0m0 3h0m0 6h0m1-48h0m0 11h0m0 7h0m0 5h0m0 4h0m0 5h0m0 1h0m0 1h0m0 6h0m1-35h0m0 1h0m0 5h0m0 1h0m0 7h0m0 3h0m0 3h0m0 2h0m0 6h0m0 4h0m0 1h0m0 13h0m0 5h0m1-51h0m0 6h0m0 4h0m0 3h0m0 3h0m0 8h0m0 1h0m0 14h0m0 1h0m0 2h0m1-53h0m0 6h0m0 10h0m0 13h0m0 2h0m0 10h0m0 1h0m0 4h0m0 12h0m0 1h0m1-40h0m0 4h0m0 2h0m0 8h0m0 4h0m0 2h0m0 2h0m0 3h0m0 1h0m0 3h0m0 6h0m1-53h0m0 10h0m0 4h0m0 3h0m0 6h0m0 3h0m0 3h0m0 1h0m0 4h0m0 9h0m0 7h0m1-49h0m0 6h0m0 1h0m0 3h0m0 10h0m0 1h0m0 3h0m0 7h0m0 3h0m0 3h0m0 4h0m0 12h0m0 8h0m1-56h0m0 5h0m0 2h0m0 11h0m0 11h0m0 4h0m0 5h0m0 1h0m0 1h0m1-30h0m0 4h0m0 1h0m0 6h0m0 3h0m0 2h0m0 5h0m0 1h0m0 6h0m0 1h0m0 2h0m0 8h0m1-48h0m0 11h0m0 6h0m0 3h0m0 4h0m0 11h0m0 1h0m0 2h0m0 3h0m0 3h0m1-57h0m0 17h0m0 7h0m0 16h0m0 1h0m0 5h0m0 7h0m0 7h0m0 3h0m1-34h0m0 3h0m0 1h0m0 2h0m0 4h0m0 3h0m0 1h0m0 4h0m0 3h0m0 6h0m0 3h0m1-44h0m0 6h0m0 1h0m0 7h0m0 6h0m0 3h0m0 9h0m0 4h0m0 3h0m0 6h0m1-54h0m0 12h0m0 18h0m0 2h0m0 2h0m0 4h0m0 3h0m0 1h0m0 2h0m0 2h0m0 4h0m0 2h0m1-54h0m0 8h0m0 5h0m0 10h0m0 2h0m0 2h0m0 3h0m0 6h0m0 5h0m1-51h0m0 3h0m0 6h0m0 1h0m0 1h0m0 4h0m0 12h0m0 2h0m0 10h0m0 1h0m0 10h0m0 3h0m0 5h0m0 3h0m1-62h0m0 11h0m0 8h0m0 7h0m0 3h0m0 2h0m0 6h0m0 1h0m0 8h0m0 10h0m0 5h0m0 11h0m1-59h0m0 5h0m0 3h0m0 3h0m0 3h0m0 3h0m0 5h0m0 1h0m0 6h0m0 2h0m0 3h0m0 5h0m0 2h0m1-39h0m0 7h0m0 3h0m0 4h0m0 12h0m0 1h0m0 7h0m0 20h0m0 1h0m0 7h0m0 2h0m0 8h0m1-64h0m0 10h0m0 13h0m0 6h0m0 3h0m0 4h0m0 1h0m1-29h0m0 10h0m0 17h0m0 15h0m1-50h0m0 7h0m0 3h0m0 3h0m0 2h0m0 5h0m0 1h0m0 5h0m0 6h0m0 4h0m0 1h0m0 1h0m0 5h0m0 6h0m1-40h0m0 6h0m0 1h0m0 5h0m0 7h0m0 3h0m0 4h0m0 12h0m0 4h0m0 12h0m1-74h0m0 10h0m0 2h0m0 4h0m0 11h0m0 4h0m0 1h0m0 2h0m0 9h0m0 1h0m0 1h0m0 2h0m0 1h0m0 4h0m1-45h0m0 9h0m0 3h0m0 3h0m0 3h0m0 3h0m0 9h0m0 9h0m0 2h0m0 3h0m0 1h0m0 19h0m1-56h0m0 1h0m0 4h0m0 2h0m0 4h0m0 10h0m0 2h0m0 3h0m0 1h0m0 1h0m0 2h0m0 17h0m0 1h0m1-75h0m0 14h0m0 1h0m0 1h0m0 10h0m0 1h0m0 3h0m0 5h0m0 2h0m0 12h0m0 3h0m1-35h0m0 8h0m0 8h0m0 9h0m0 1h0m0 3h0m0 1h0m0 3h0m0 18h0m0 6h0m0 14h0m1-79h0m0 2h0m0 4h0m0 10h0m0 1h0m0 1h0m0 4h0m0 7h0m0 9h0m0 1h0m0 10h0m0 4h0m1-39h0m0 10h0m0 3h0m0 2h0m0 2h0m0 5h0m0 3h0m0 11h0m0 9h0m0 1h0m0 1h0m0 6h0m1-49h0m0 6h0m0 7h0m0 2h0m0 9h0m0 2h0m0 2h0m0 2h0m0 2h0m0 3h0m0 4h0m0 10h0m0 1h0m1-56h0m0 7h0m0 1h0m0 6h0m0 4h0m0 2h0m0 3h0m0 11h0m0 13h0m1-38h0m0 3h0m0 1h0m0 3h0m0 10h0m0 5h0m0 6h0m0 4h0m0 2h0m0 2h0m1-50h0m0 9h0m0 2h0m0 6h0m0 6h0m0 5h0m0 1h0m0 9h0m0 1h0m0 3h0m1-32h0m0 10h0m0 5h0m0 5h0m0 1h0m0 1h0m0 2h0m0 1h0m0 6h0m0 1h0m0 1h0m0 16h0m0 5h0m1-60h0m0 1h0m0 2h0m0 13h0m0 4h0m0 3h0m0 8h0m0 12h0m0 2h0m0 1h0m0 2h0m1-63h0m0 3h0m0 2h0m0 8h0m0 5h0m0 1h0m0 7h0m0 2h0m0 8h0m0 4h0m0 18h0m1-59h0m0 14h0m0 4h0m0 5h0m0 2h0m0 6h0m0 1h0m0 6h0m0 4h0m0 9h0m0 8h0m0 11h0m0 17h0m1-81h0m0 16h0m0 3h0m0 3h0m0 10h0m0 5h0m0 5h0m0 5h0m0 1h0m0 4h0m0 2h0m1-53h0m0 8h0m0 5h0m0 17h0m0 1h0m0 3h0m0 1h0m0 1h0m0 6h0m0 1h0m0 1h0m0 5h0m1-31h0m0 3h0m0 1h0m0 2h0m0 6h0m0 2h0m0 7h0m0 5h0m0 2h0m0 2h0m0 14h0m1-51h0m0 3h0m0 7h0m0 5h0m0 7h0m0 2h0m0 7h0m1-34h0m0 13h0m0 2h0m0 3h0m0 2h0m0 4h0m0 3h0m0 7h0m0 1h0m0 4h0m0 3h0m0 3h0m0 1h0m1-45h0m0 3h0m0 3h0m0 6h0m0 5h0m0 7h0m0 2h0m0 7h0m0 4h0m1 9h0m1-45h0m0 1h0m0 41h0m1-56h0m0 22h0m0 2h0m0 1h0m0 3h0m0 1h0m0 3h0m0 7h0m0 1h0m0 2h0m0 1h0m0 13h0m0 3h0m0 8h0m1-49h0m0 2h0m0 5h0m0 1h0m0 4h0m0 1h0m0 3h0m0 1h0m0 2h0m0 11h0m0 3h0m0 6h0m0 14h0m1-58h0m0 8h0m0 9h0m0 1h0m0 7h0m0 7h0m0 1h0m0 3h0m0 2h0m0 1h0m0 2h0m0 2h0m1-39h0m0 5h0m0 9h0m0 3h0m0 6h0m0 1h0m0 3h0m0 5h0m0 9h0m0 2h0m0 12h0m0 6h0m1-68h0m0 11h0m0 13h0m0 17h0m0 2h0m0 1h0m0 5h0m0 2h0m1-48h0m0 9h0m0 1h0m0 1h0m0 2h0m0 2h0m0 5h0m0 1h0m0 5h0m0 4h0m0 3h0m0 5h0m0 15h0m0 12h0m1-68h0m0 21h0m0 2h0m0 1h0m0 3h0m0 1h0m0 2h0m0 11h0m0 7h0m0 6h0m0 19h0m1-83h0m0 5h0m0 2h0m0 10h0m0 3h0m0 3h0m0 1h0m0 3h0m0 11h0m0 15h0m0 3h0m0 3h0m1-59h0m0 11h0m0 3h0m0 4h0m0 11h0m0 2h0m0 11h0m0 8h0m0 1h0m0 1h0m1-42h0m0 15h0m0 3h0m0 2h0m0 5h0m0 4h0m0 3h0m0 1h0m0 6h0m0 1h0m0 8h0m0 3h0m1-41h0m0 9h0m0 4h0m0 5h0m0 3h0m0 1h0m0 5h0m0 4h0m0 3h0m0 2h0m1-29h0m0 1h0m0 3h0m0 5h0m0 4h0m0 5h0m0 7h0m0 1h0m0 4h0m0 2h0m0 5h0m1-63h0m0 7h0m0 1h0m0 4h0m0 1h0m0 4h0m0 6h0m0 5h0m0 10h0m0 10h0m0 6h0m0 6h0m0 5h0m0 5h0m1-65h0m0 3h0m0 9h0m0 1h0m0 1h0m0 4h0m0 5h0m0 1h0m0 2h0m0 5h0m0 1h0m0 1h0m0 32h0m1-78h0m0 2h0m0 21h0m0 7h0m0 14h0m0 5h0m0 1h0m0 6h0m0 4h0m0 1h0m0 2h0m0 2h0m0 12h0m1-59h0m0 10h0m0 11h0m0 2h0m0 1h0m0 3h0m0 1h0m0 3h0m0 6h0m0 2h0m0 3h0m0 9h0m1-64h0m0 5h0m0 5h0m0 3h0m0 2h0m0 2h0m0 9h0m0 3h0m0 3h0m0 11h0m0 7h0m0 3h0m0 18h0m1-74h0m0 20h0m0 4h0m0 5h0m0 7h0m0 4h0m0 7h0m0 6h0m0 3h0m0 7h0m0 3h0m0 2h0m0 7h0m1-65h0m0 15h0m0 6h0m0 3h0m0 1h0m0 4h0m0 4h0m0 15h0m0 2h0m0 4h0m0 7h0m1-44h0m0 6h0m0 9h0m0 3h0m0 4h0m0 4h0m0 12h0m1-46h0m0 3h0m0 2h0m0 2h0m0 4h0m0 7h0m0 4h0m0 7h0m0 19h0m1-47h0m0 7h0m0 1h0m0 2h0m0 1h0m0 3h0m0 4h0m0 2h0m0 11h0m0 4h0m0 4h0m1-40h0m0 4h0m0 1h0m0 5h0m0 1h0m0 4h0m0 5h0m0 3h0m0 6h0m0 6h0m0 4h0m0 7h0m1-42h0m0 2h0m0 4h0m0 1h0m0 2h0m0 1h0m0 4h0m0 7h0m0 5h0m0 4h0m0 3h0m0 2h0m0 4h0m1-44h0m0 12h0m0 6h0m0 9h0m0 6h0m0 9h0m1-37h0m1 3h0m0 2h0m0 14h0m0 8h0m0 1h0m0 1h0m0 7h0m0 8h0m0 2h0m0 2h0m1-57h0m0 12h0m0 4h0m0 2h0m0 3h0m0 9h0m0 2h0m0 3h0m0 9h0m0 9h0m1-54h0m0 14h0m0 10h0m0 4h0m0 2h0m0 3h0m0 2h0m0 1h0m0 3h0m0 2h0m0 3h0m0 3h0m0 4h0m0 4h0m1-34h0m0 2h0m0 2h0m0 5h0m0 1h0m0 8h0m0 2h0m0 4h0m0 7h0m0 1h0m0 13h0m1-61h0m0 7h0m0 2h0m0 2h0m0 2h0m0 1h0m0 8h0m0 8h0m0 1h0m1-43h0m0 17h0m0 2h0m0 2h0m0 3h0m0 14h0m0 3h0m0 1h0m0 8h0m0 3h0m0 3h0m0 5h0m1-52h0m0 1h0m0 13h0m0 1h0m0 3h0m0 10h0m0 8h0m0 1h0m0 2h0m0 6h0m0 13h0m1-58h0m0 15h0m0 3h0m0 1h0m0 6h0m0 5h0m0 5h0m0 1h0m0 6h0m0 7h0m0 8h0m0 9h0m1-47h0m0 2h0m0 1h0m0 3h0m0 1h0m0 1h0m0 7h0m0 9h0m0 1h0m0 2h0m0 3h0m1-41h0m0 16h0m0 2h0m0 1h0m0 3h0m0 2h0m0 6h0m0 4h0m0 3h0m0 16h0m1-49h0m0 4h0m0 4h0m0 3h0m0 9h0m0 1h0m0 1h0m0 7h0m0 5h0m0 2h0m0 1h0m1-38h0m0 4h0m0 9h0m0 3h0m0 2h0m0 3h0m0 2h0m0 1h0m0 7h0m0 1h0m0 3h0m0 13h0m0 2h0m1-54h0m0 6h0m0 7h0m0 5h0m0 6h0m0 1h0m0 1h0m0 8h0m0 4h0m0 1h0m0 3h0m0 2h0m1-49h0m0 7h0m0 4h0m0 6h0m0 2h0m0 9h0m0 1h0m0 4h0m0 2h0m0 2h0m0 17h0m0 2h0m1-59h0m0 4h0m0 17h0m0 7h0m0 5h0m0 8h0m0 4h0m0 2h0m0 12h0m0 9h0m1-56h0m0 7h0m0 12h0m0 4h0m0 4h0m0 5h0m0 8h0m0 7h0m0 14h0m1-54h0m0 3h0m0 11h0m0 2h0m0 2h0m0 4h0m0 3h0m0 1h0m0 3h0m1-39h0m0 5h0m0 5h0m0 5h0m0 2h0m0 4h0m0 7h0m0 5h0m0 3h0m0 11h0m1-53h0m0 11h0m0 6h0m0 2h0m0 5h0m0 3h0m0 1h0m0 14h0m0 8h0m1-44h0m0 1h0m0 14h0m0 2h0m0 3h0m0 5h0m0 2h0m0 5h0m0 1h0m0 6h0m0 7h0m0 2h0m1-40h0m0 1h0m0 4h0m0 3h0m0 7h0m0 5h0m0 9h0m1-32h0m0 1h0m0 2h0m0 2h0m0 9h0m0 5h0m0 4h0m0 1h0m0 1h0m0 5h0m0 11h0m1-40h0m0 6h0m0 1h0m0 8h0m0 4h0m0 1h0m0 7h0m0 3h0m0 4h0m1-35h0m0 6h0m0 6h0m0 13h0m1-26h0m0 5h0m0 7h0m0 4h0m0 2h0m0 9h0m0 2h0m0 7h0m0 6h0m0 6h0m1-53h0m0 13h0m0 1h0m0 3h0m0 2h0m0 3h0m0 4h0m0 2h0m0 1h0m0 13h0m0 1h0m0 23h0m1-67h0m0 5h0m0 3h0m0 3h0m0 13h0m0 4h0m0 8h0m0 1h0m0 3h0m0 12h0m1-44h0m0 6h0m0 2h0m0 3h0m0 1h0m0 3h0m0 2h0m0 4h0m0 8h0m0 9h0m0 1h0m1-44h0m0 1h0m0 1h0m0 8h0m0 9h0m0 2h0m0 5h0m0 4h0m0 15h0m1-47h0m0 6h0m0 1h0m0 2h0m0 6h0m0 3h0m0 5h0m0 1h0m0 2h0m0 3h0m0 1h0m0 11h0m0 4h0m1-68h0m0 10h0m0 1h0m0 2h0m0 9h0m0 12h0m0 38h0m0 4h0m1-70h0m0 15h0m0 5h0m0 4h0m0 5h0m0 1h0m0 8h0m0 3h0m0 2h0m0 5h0m0 5h0m0 14h0m0 12h0m1-77h0m0 13h0m0 1h0m0 2h0m0 2h0m0 1h0m0 3h0m0 6h0m0 3h0m0 5h0m0 18h0m0 4h0m1-34h0m0 5h0m0 2h0m0 1h0m0 3h0m0 1h0m0 2h0m0 3h0m0 5h0m0 2h0m0 10h0m0 3h0m1-51h0m0 6h0m0 7h0m0 1h0m0 2h0m0 3h0m0 4h0m0 7h0m0 3h0m0 3h0m0 11h0m1-45h0m0 2h0m0 3h0m0 2h0m0 3h0m0 2h0m0 15h0m0 2h0m0 6h0m0 2h0m0 2h0m0 3h0m1-35h0m0 3h0m0 4h0m0 3h0m0 1h0m0 7h0m0 5h0m0 13h0m0 3h0m1-58h0m0 4h0m0 4h0m0 7h0m0 6h0m0 2h0m0 9h0m0 2h0m0 1h0m0 2h0m0 7h0m1-35h0m0 4h0m0 3h0m0 3h0m0 8h0m0 8h0m0 2h0m0 2h0m0 1h0m1-20h0m0 4h0m0 1h0m0 4h0m0 2h0m0 2h0m0 8h0m0 2h0m0 6h0m0 13h0m1-47h0m0 2h0m0 3h0m0 7h0m0 10h0m0 2h0m0 5h0m0 5h0m0 1h0m0 1h0m0 13h0m0 2h0m1-62h0m0 4h0m0 10h0m0 5h0m0 4h0m0 3h0m0 3h0m0 4h0m0 6h0m0 1h0m0 2h0m1-35h0m0 5h0m0 3h0m0 5h0m0 8h0m0 3h0m0 1h0m0 3h0m0 7h0m0 5h0m1-52h0m0 5h0m0 6h0m0 10h0m0 2h0m0 1h0m0 2h0m0 3h0m0 7h0m0 9h0m0 5h0m1-28h0m0 3h0m0 5h0m0 2h0m0 1h0m0 7h0m0 4h0m0 5h0m0 3h0m0 12h0m1-56h0m0 9h0m0 2h0m0 4h0m0 13h0m0 1h0m0 1h0m0 4h0m0 2h0m0 2h0m1-44h0m0 10h0m0 4h0m0 5h0m0 2h0m0 5h0m0 1h0m0 2h0m0 15h0m0 9h0m1-60h0m0 30h0m0 4h0m0 4h0m0 1h0m0 5h0m0 1h0m0 5h0m0 3h0m0 1h0m0 2h0m0 1h0m1-42h0m0 5h0m0 3h0m0 1h0m0 6h0m0 5h0m0 4h0m0 3h0m0 8h0m0 4h0m0 5h0m0 3h0m0 3h0m1-56h0m0 16h0m0 6h0m0 2h0m0 2h0m0 1h0m0 2h0m0 5h0m0 7h0m0 4h0m1-32h0m0 2h0m0 3h0m0 1h0m0 1h0m0 8h0m0 4h0m0 2h0m0 7h0m0 3h0m0 14h0m1-55h0m0 12h0m0 3h0m0 10h0m0 2h0m0 1h0m0 2h0m0 5h0m1-38h0m0 8h0m0 4h0m0 4h0m0 6h0m0 2h0m0 2h0m0 6h0m0 5h0m0 4h0m0 4h0m0 5h0m0 9h0m1-38h0m0 5h0m0 5h0m0 12h0m0 5h0m0 2h0m0 11h0m0 1h0m0 1h0m1-49h0m0 4h0m0 6h0m0 10h0m0 5h0m0 1h0m0 2h0m0 6h0m0 12h0m0 1h0m0 3h0m1-60h0m0 7h0m0 9h0m0 6h0m0 1h0m0 1h0m0 3h0m0 10h0m0 1h0m0 3h0m0 2h0m0 4h0m0 2h0m1-40h0m0 3h0m0 4h0m0 1h0m0 12h0m0 2h0m0 3h0m0 7h0m0 1h0m0 7h0m1-50h0m0 4h0m0 12h0m0 2h0m0 2h0m0 2h0m0 3h0m0 7h0m0 7h0m0 4h0m0 8h0m0 1h0m1-50h0m0 3h0m0 12h0m0 7h0m0 1h0m0 2h0m0 7h0m0 2h0m0 1h0m0 24h0m1-52h0m0 4h0m0 3h0m0 3h0m0 5h0m0 6h0m0 4h0m0 1h0m0 1h0m0 1h0m0 2h0m0 4h0m0 6h0m1-45h0m0 9h0m0 3h0m0 2h0m0 9h0m0 2h0m0 4h0m0 1h0m0 4h0m0 20h0m2-57h0m0 7h0m0 3h0m0 12h0m0 14h0m0 3h0m0 3h0m0 3h0m0 5h0m0 3h0m0 12h0m1-58h0m0 5h0m0 1h0m0 1h0m0 6h0m0 10h0m0 1h0m0 2h0m0 5h0m0 2h0m0 17h0m0 4h0m1-44h0m0 2h0m0 6h0m0 1h0m0 1h0m0 4h0m0 3h0m0 3h0m0 2h0m0 2h0m0 12h0m1-37h0m0 1h0m0 4h0m0 14h0m0 4h0m0 12h0m0 6h0m0 2h0m0 2h0m0 5h0m1-49h0m0 2h0m0 3h0m0 3h0m0 2h0m0 4h0m0 3h0m0 1h0m0 5h0m0 1h0m0 2h0m0 13h0m1-56h0m0 17h0m0 4h0m0 2h0m0 2h0m0 1h0m0 13h0m0 5h0m0 1h0m0 1h0m0 2h0m0 3h0m1-48h0m0 2h0m0 17h0m0 8h0m0 3h0m0 4h0m0 1h0m0 10h0m0 3h0m0 8h0m1-60h0m0 14h0m0 10h0m0 6h0m0 2h0m0 2h0m0 1h0m0 1h0m0 2h0m0 5h0m0 5h0m0 6h0m1-55h0m0 7h0m0 13h0m0 5h0m0 5h0m0 1h0m0 7h0m0 1h0m0 22h0m1-38h0m0 4h0m0 6h0m0 2h0m0 3h0m0 3h0m0 2h0m0 1h0m0 4h0m0 12h0m1-58h0m0 10h0m0 15h0m0 1h0m0 5h0m0 4h0m0 11h0m0 1h0m0 13h0m1-71h0m0 19h0m0 4h0m0 5h0m0 2h0m0 2h0m0 1h0m0 3h0m0 6h0m0 1h0m0 7h0m0 2h0m1-42h0m0 3h0m0 7h0m0 6h0m0 6h0m0 17h0m0 2h0m0 20h0m0 2h0m1-57h0m0 9h0m0 3h0m0 5h0m0 3h0m0 1h0m0 3h0m0 1h0m0 4h0m0 2h0m0 6h0m0 3h0m0 1h0m1-53h0m0 20h0m0 2h0m0 2h0m0 8h0m0 1h0m0 6h0m0 1h0m0 3h0m0 1h0m0 5h0m1-44h0m0 12h0m0 3h0m0 12h0m0 1h0m0 3h0m0 6h0m0 6h0m0 5h0m0 3h0m0 11h0m0 1h0m1-52h0m0 7h0m0 4h0m0 9h0m0 2h0m0 1h0m0 10h0m1-32h0m0 3h0m0 4h0m0 5h0m0 7h0m0 7h0m0 1h0m0 4h0m0 8h0m0 3h0m1-55h0m0 14h0m0 3h0m0 7h0m0 1h0m0 3h0m0 1h0m0 3h0m0 4h0m0 3h0m0 4h0m1-41h0m0 2h0m0 7h0m0 3h0m0 8h0m0 8h0m0 4h0m0 22h0m1-64h0m0 7h0m0 14h0m0 3h0m0 3h0m0 8h0m0 1h0m0 8h0m0 1h0m0 3h0m0 14h0m0 6h0m0 8h0m1-70h0m0 9h0m0 16h0m0 1h0m0 17h0m0 2h0m0 1h0m0 4h0m0 2h0m0 7h0m1-67h0m0 3h0m0 7h0m0 11h0m0 9h0m0 8h0m0 6h0m0 1h0m0 3h0m0 4h0m0 12h0m0 16h0m1-67h0m0 9h0m0 5h0m0 1h0m0 6h0m0 3h0m0 6h0m0 13h0m0 5h0m0 1h0m1-31h0m0 7h0m0 3h0m0 4h0m0 7h0m0 3h0m0 4h0m0 8h0m0 3h0m0 8h0m1-68h0m0 19h0m0 5h0m0 1h0m0 4h0m0 4h0m0 9h0m0 5h0m0 6h0m1-61h0m0 5h0m0 4h0m0 2h0m0 10h0m0 6h0m0 12h0m0 3h0m0 1h0m0 2h0m0 2h0m0 2h0m0 19h0m1-66h0m0 11h0m0 8h0m0 5h0m0 4h0m0 4h0m0 3h0m0 9h0m0 11h0m0 3h0m1-49h0m0 14h0m0 1h0m0 5h0m0 8h0m0 2h0m0 2h0m0 5h0m0 9h0m2-28h0m0 4h0m0 14h0m0 2h0m0 10h0m0 2h0m0 9h0m1-56h0m0 9h0m0 4h0m0 8h0m0 1h0m0 2h0m0 4h0m0 3h0m0 5h0m0 1h0m0 1h0m0 1h0m0 6h0m0 4h0m1-34h0m0 4h0m0 1h0m0 1h0m0 10h0m0 1h0m0 1h0m0 6h0m0 4h0m0 11h0m1-56h0m0 7h0m0 5h0m0 10h0m0 3h0m0 9h0m0 1h0m0 3h0m0 4h0m0 9h0m0 7h0m1-48h0m0 4h0m0 3h0m0 2h0m0 1h0m0 6h0m0 3h0m0 2h0m0 11h0m0 6h0m1-38h0m0 3h0m0 4h0m0 2h0m0 1h0m0 9h0m0 5h0m0 3h0m0 2h0m0 8h0m0 18h0m1-56h0m0 6h0m0 2h0m0 2h0m0 3h0m0 2h0m0 3h0m0 11h0m0 6h0m0 1h0m0 21h0m1-63h0m0 9h0m0 12h0m0 3h0m0 2h0m0 1h0m0 2h0m0 3h0m0 6h0m0 3h0m0 1h0m1-62h0m0 35h0m0 2h0m0 9h0m0 9h0m0 7h0m0 4h0m0 1h0m1-47h0m0 11h0m0 4h0m0 4h0m0 7h0m0 1h0m0 3h0m0 7h0m0 6h0m0 3h0m0 3h0m0 3h0m1-54h0m0 12h0m0 4h0m0 3h0m0 4h0m0 1h0m0 1h0m0 10h0m0 1h0m0 14h0m1-54h0m0 6h0m0 4h0m0 14h0m0 1h0m0 4h0m0 3h0m0 4h0m0 15h0m0 11h0m0 2h0m1-68h0m0 3h0m0 24h0m0 2h0m0 3h0m0 2h0m0 2h0m0 2h0m0 3h0m0 1h0m0 16h0m1-48h0m0 7h0m0 5h0m0 1h0m0 1h0m0 5h0m0 17h0m0 1h0m0 7h0m0 5h0m0 3h0m2-42h0m0 4h0m0 2h0m0 4h0m0 3h0m0 1h0m0 4h0m0 1h0m0 3h0m0 2h0m0 4h0m1-40h0m0 13h0m0 2h0m0 1h0m0 1h0m0 9h0m0 5h0m0 9h0m0 3h0m0 2h0m0 7h0m1-52h0m0 7h0m0 1h0m0 9h0m0 3h0m0 9h0m0 2h0m0 4h0m0 2h0m0 1h0m0 12h0m0 1h0m0 11h0m1-75h0m0 4h0m0 17h0m0 1h0m0 3h0m0 2h0m0 1h0m0 7h0m0 4h0m0 3h0m0 6h0m0 8h0m0 4h0m0 10h0m1-64h0m0 9h0m0 8h0m0 9h0m0 9h0m0 1h0m0 4h0m0 30h0m1-67h0m0 10h0m0 4h0m0 3h0m0 5h0m0 1h0m0 4h0m0 6h0m0 3h0m0 4h0m0 3h0m0 3h0m0 4h0m1-44h0m0 1h0m0 9h0m0 6h0m0 3h0m0 4h0m0 4h0m0 4h0m0 1h0m0 4h0m0 9h0m1-38h0m0 6h0m0 2h0m0 5h0m0 2h0m0 3h0m0 6h0m0 1h0m0 9h0m0 3h0m0 1h0m1-49h0m0 2h0m0 7h0m0 3h0m0 1h0m0 4h0m0 12h0m0 3h0m0 8h0m0 2h0m0 14h0m1-59h0m0 16h0m0 8h0m0 3h0m0 2h0m0 9h0m0 3h0m0 3h0m0 1h0m0 5h0m0 1h0m1-44h0m0 2h0m0 18h0m0 7h0m0 2h0m0 17h0m0 4h0m0 3h0m0 10h0m0 1h0m1-72h0m0 5h0m0 17h0m0 2h0m0 3h0m0 6h0m0 3h0m0 7h0m0 2h0m0 2h0m0 13h0m0 6h0m0 4h0m0 6h0m1-65h0m0 9h0m0 4h0m0 3h0m0 12h0m0 2h0m0 6h0m0 2h0m0 4h0m0 13h0m0 7h0m1-54h0m0 7h0m0 4h0m0 5h0m0 6h0m0 1h0m0 2h0m0 9h0m0 4h0m0 13h0m1-61h0m0 2h0m0 5h0m0 4h0m0 2h0m0 3h0m0 1h0m0 4h0m0 6h0m0 1h0m0 12h0m1-58h0m0 13h0m0 2h0m0 10h0m0 3h0m0 9h0m0 3h0m0 4h0m0 2h0m0 3h0m0 4h0m0 3h0m0 6h0m1-52h0m0 10h0m0 7h0m0 11h0m0 6h0m0 6h0m0 4h0m0 2h0m0 3h0m1-29h0m0 3h0m0 3h0m0 6h0m0 5h0m0 9h0m1-32h0m0 1h0m0 6h0m0 1h0m0 2h0m0 7h0m0 13h0m0 22h0m1-58h0m0 10h0m0 1h0m0 14h0m0 2h0m0 1h0m0 3h0m0 1h0m0 1h0m0 4h0m0 2h0m1-36h0m0 5h0m0 3h0m0 8h0m0 5h0m0 1h0m0 7h0m0 2h0m0 7h0m0 7h0m0 3h0m1-47h0m0 8h0m0 4h0m0 2h0m0 2h0m0 2h0m0 5h0m0 3h0m0 1h0m0 9h0m0 2h0m0 3h0m1-40h0m0 5h0m0 2h0m0 11h0m0 3h0m0 11h0m0 1h0m0 12h0m1-46h0m0 4h0m0 9h0m0 2h0m0 1h0m0 1h0m0 6h0m0 1h0m0 5h0m0 1h0m0 3h0m1-27h0m0 3h0m0 3h0m0 2h0m0 2h0m0 2h0m0 6h0m0 7h0m0 8h0m0 2h0m1-46h0m0 13h0m0 3h0m0 5h0m0 1h0m0 3h0m0 3h0m0 1h0m0 1h0m0 6h0m0 2h0m0 3h0m0 6h0m1-56h0m0 16h0m0 3h0m0 3h0m0 4h0m0 7h0m0 9h0m0 14h0m1-40h0m0 10h0m0 3h0m0 9h0m0 10h0m0 2h0m0 1h0m0 2h0m0 6h0m1-54h0m0 9h0m0 3h0m0 11h0m0 2h0m0 9h0m0 6h0m0 4h0m0 3h0m0 2h0m0 6h0m0 8h0m1-68h0m0 8h0m0 1h0m0 1h0m0 6h0m0 3h0m0 6h0m0 8h0m0 2h0m0 5h0m0 3h0m0 5h0m1-35h0m0 5h0m0 2h0m0 9h0m0 1h0m0 6h0m0 3h0m0 5h0m0 9h0m0 11h0m0 4h0m0 9h0m1-67h0m0 11h0m0 5h0m0 8h0m0 2h0m0 3h0m0 2h0m0 4h0m0 3h0m0 3h0m0 9h0m1-57h0m0 4h0m0 23h0m0 2h0m0 5h0m0 1h0m0 2h0m0 6h0m0 1h0m0 5h0m0 4h0m0 7h0m1-69h0m0 7h0m0 6h0m0 15h0m0 9h0m0 3h0m0 7h0m0 1h0m0 5h0m0 15h0m1-59h0m0 7h0m0 2h0m0 6h0m0 6h0m0 3h0m0 13h0m0 2h0m0 1h0m0 4h0m0 19h0m1-60h0m0 6h0m0 4h0m0 7h0m0 5h0m0 3h0m0 2h0m0 3h0m0 2h0m0 3h0m0 4h0m0 9h0m1-59h0m0 24h0m0 1h0m0 1h0m0 5h0m0 3h0m0 9h0m0 3h0m0 2h0m0 7h0m0 1h0m1-53h0m0 20h0m0 6h0m0 6h0m0 2h0m0 1h0m0 3h0m0 9h0m0 1h0m0 2h0m0 2h0m0 15h0m1-65h0m0 10h0m0 8h0m0 3h0m0 4h0m0 2h0m0 5h0m0 12h0m0 16h0m1-43h0m0 2h0m0 1h0m0 3h0m0 2h0m0 4h0m0 2h0m0 2h0m0 1h0m0 12h0m0 3h0m0 2h0m1-57h0m0 4h0m0 15h0m0 7h0m0 11h0m0 10h0m0 2h0m0 7h0m0 5h0m0 2h0m0 1h0m0 8h0m0 1h0m1-62h0m0 7h0m0 10h0m0 2h0m0 2h0m0 1h0m0 2h0m0 2h0m0 3h0m0 2h0m0 3h0m0 8h0m0 2h0m1-34h0m0 8h0m0 1h0m0 1h0m0 5h0m0 2h0m0 4h0m0 1h0m0 5h0m0 3h0m0 3h0m1-46h0m0 4h0m0 6h0m0 4h0m0 3h0m0 1h0m0 5h0m0 4h0m0 1h0m0 4h0m0 1h0m0 7h0m0 3h0m1-46h0m0 8h0m0 11h0m0 11h0m0 3h0m0 6h0m0 3h0m0 4h0m0 5h0m0 9h0m1-68h0m0 10h0m0 12h0m0 2h0m0 9h0m0 5h0m0 9h0m0 4h0m0 7h0m0 1h0m0 5h0m0 6h0m0 2h0m0 1h0m1-73h0m0 14h0m0 15h0m0 4h0m0 2h0m0 1h0m0 13h0m0 3h0m0 1h0m0 14h0m0 6h0m1-50h0m0 12h0m0 1h0m0 2h0m0 1h0m0 3h0m0 3h0m0 2h0m0 3h0m0 1h0m0 1h0m0 4h0m1-42h0m0 3h0m0 18h0m0 4h0m0 10h0m0 6h0m0 5h0m0 1h0m0 10h0m1-69h0m0 4h0m0 10h0m0 6h0m0 2h0m0 8h0m0 14h0m0 2h0m0 5h0m0 9h0m0 3h0m1-54h0m0 8h0m0 9h0m0 4h0m0 4h0m0 1h0m0 2h0m0 13h0m0 7h0m0 1h0m0 8h0m0 4h0m0 9h0m1-61h0m0 1h0m0 5h0m0 6h0m0 3h0m0 3h0m0 5h0m0 3h0m0 2h0m0 1h0m0 2h0m0 11h0m0 14h0m1-68h0m0 4h0m0 1h0m0 2h0m0 6h0m0 5h0m0 5h0m0 2h0m0 2h0m0 5h0m0 4h0m0 9h0m0 17h0m0 13h0m1-71h0m0 14h0m0 5h0m0 17h0m0 1h0m0 17h0m0 3h0m0 2h0m0 2h0m0 2h0m0 1h0m0 11h0m1-67h0m0 7h0m0 3h0m0 7h0m0 1h0m0 4h0m0 3h0m0 3h0m0 4h0m0 1h0m0 11h0m2-39h0m0 5h0m0 1h0m0 3h0m0 7h0m0 3h0m0 2h0m0 2h0m0 3h0m0 1h0m0 3h0m0 2h0m0 1h0m0 6h0m1-49h0m0 3h0m0 12h0m0 8h0m0 2h0m0 11h0m0 9h0m1-51h0m0 4h0m0 17h0m0 6h0m0 2h0m0 5h0m0 4h0m0 8h0m0 2h0m0 7h0m0 1h0m1-36h0m0 10h0m0 3h0m0 2h0m0 3h0m0 2h0m0 4h0m0 3h0m0 2h0m0 10h0m0 6h0m0 3h0m1-66h0m0 1h0m0 15h0m0 5h0m0 4h0m0 1h0m0 8h0m0 6h0m0 3h0m1-37h0m0 8h0m0 10h0m0 2h0m0 1h0m0 4h0m0 14h0m0 8h0m0 5h0m1-46h0m0 6h0m0 2h0m0 4h0m0 3h0m0 2h0m0 3h0m0 1h0m0 3h0m0 3h0m0 7h0m0 1h0m0 1h0m1-34h0m0 8h0m0 1h0m0 5h0m0 11h0m0 5h0m0 11h0m0 4h0m1-48h0m0 5h0m0 5h0m0 9h0m0 4h0m0 2h0m0 3h0m0 2h0m0 1h0m0 4h0m0 1h0m1-41h0m0 9h0m0 1h0m0 3h0m0 7h0m0 6h0m0 1h0m0 4h0m0 2h0m0 10h0m0 5h0m1-50h0m0 10h0m0 7h0m0 3h0m0 5h0m0 15h0m0 4h0m0 2h0m0 3h0m0 10h0m0 6h0m1-67h0m0 16h0m0 7h0m0 2h0m0 1h0m0 1h0m0 9h0m0 5h0m0 7h0m0 5h0m0 8h0m0 3h0m1-56h0m0 7h0m0 8h0m0 6h0m0 2h0m0 4h0m0 4h0m0 1h0m0 1h0m0 1h0m0 2h0m0 6h0m0 2h0m0 8h0m1-56h0m0 4h0m0 2h0m0 1h0m0 4h0m0 2h0m0 14h0m0 5h0m0 4h0m0 1h0m0 10h0m0 2h0m0 3h0m1-53h0m0 7h0m0 2h0m0 7h0m0 3h0m0 1h0m0 3h0m0 8h0m0 1h0m0 2h0m0 9h0m1-47h0m0 20h0m0 4h0m0 1h0m0 3h0m0 1h0m0 4h0m0 1h0m0 4h0m0 1h0m0 4h0m0 2h0m0 3h0m2-50h0m0 14h0m0 8h0m0 9h0m0 1h0m0 2h0m0 5h0m0 5h0m0 3h0m1-41h0m0 14h0m0 4h0m0 1h0m0 2h0m0 4h0m0 5h0m0 1h0m0 4h0m0 9h0m0 7h0m0 1h0m1-68h0m0 10h0m0 16h0m0 5h0m0 1h0m0 2h0m0 4h0m0 3h0m0 1h0m0 5h0m0 1h0m0 18h0m1-60h0m0 1h0m0 13h0m0 3h0m0 13h0m0 2h0m0 7h0m0 6h0m0 4h0m0 1h0m0 3h0m0 3h0m0 6h0m1-54h0m0 6h0m0 8h0m0 2h0m0 5h0m0 14h0m0 3h0m0 2h0m0 4h0m0 6h0m0 6h0m1-46h0m0 9h0m0 7h0m0 1h0m0 2h0m0 2h0m0 3h0m0 5h0m0 4h0m0 4h0m1-30h0m0 12h0m0 1h0m0 1h0m0 9h0m0 2h0m0 1h0m0 9h0m0 8h0m1-45h0m0 2h0m0 4h0m0 4h0m0 1h0m0 4h0m0 6h0m0 7h0m0 4h0m0 9h0m0 14h0m1-62h0m0 2h0m0 2h0m0 12h0m0 9h0m0 4h0m0 4h0m0 4h0m0 4h0m0 1h0m1-30h0m0 7h0m0 1h0m0 6h0m0 1h0m0 2h0m0 2h0m0 2h0m1-48h0m0 15h0m0 2h0m0 5h0m0 1h0m0 3h0m0 11h0m0 7h0m0 7h0m0 2h0m0 3h0m1-40h0m0 5h0m0 5h0m0 11h0m0 2h0m0 8h0m0 3h0m0 2h0m0 4h0m0 8h0m1-51h0m0 1h0m0 3h0m0 2h0m0 7h0m0 1h0m0 4h0m0 1h0m0 5h0m0 1h0m0 10h0m0 7h0m1-42h0m0 5h0m0 2h0m0 3h0m0 7h0m0 9h0m0 2h0m0 4h0m0 4h0m0 13h0m0 3h0m1-62h0m0 13h0m0 10h0m0 1h0m0 2h0m0 3h0m0 4h0m0 8h0m0 1h0m0 1h0m0 6h0m1-34h0m0 6h0m0 2h0m0 1h0m0 4h0m0 5h0m0 4h0m0 4h0m0 1h0m0 17h0m1-43h0m0 4h0m0 1h0m0 4h0m0 1h0m0 6h0m0 6h0m0 1h0m0 4h0m0 1h0m0 1h0m0 2h0m0 8h0m1-46h0m0 10h0m0 1h0m0 1h0m0 9h0m0 2h0m0 2h0m0 6h0m0 1h0m0 1h0m0 3h0m0 8h0m0 6h0m1-49h0m0 4h0m0 9h0m0 2h0m0 8h0m0 13h0m0 4h0m0 7h0m0 11h0m1-54h0m0 3h0m0 5h0m0 1h0m0 6h0m0 7h0m0 4h0m0 1h0m0 3h0m0 2h0m0 2h0m1-39h0m0 19h0m0 1h0m0 2h0m0 2h0m0 3h0m0 2h0m0 7h0m0 5h0m0 4h0m0 2h0m0 1h0m1-43h0m0 8h0m0 2h0m0 3h0m0 5h0m0 4h0m0 1h0m0 8h0m0 10h0m0 7h0m1-48h0m0 11h0m0 2h0m0 5h0m0 2h0m0 2h0m0 3h0m0 3h0m0 8h0m0 7h0m0 10h0m1-43h0m0 4h0m0 2h0m0 6h0m0 5h0m0 6h0m0 3h0m0 1h0m0 1h0m0 12h0m1-55h0m0 11h0m0 2h0m0 3h0m0 2h0m0 2h0m0 5h0m0 6h0m0 2h0m0 2h0m0 3h0m0 4h0m1-39h0m0 20h0m0 5h0m0 5h0m0 2h0m0 7h0m1-54h0m0 15h0m0 1h0m0 4h0m0 8h0m0 9h0m0 4h0m0 1h0m0 11h0m0 6h0m0 10h0m0 1h0m0 1h0m1-79h0m0 15h0m0 14h0m0 3h0m0 11h0m0 9h0m0 3h0m0 1h0m0 3h0m0 2h0m0 4h0m1-66h0m0 3h0m0 15h0m0 3h0m0 10h0m0 8h0m0 5h0m0 10h0m0 1h0m0 8h0m0 14h0m1-77h0m0 8h0m0 19h0m0 7h0m0 2h0m0 5h0m0 9h0m0 3h0m0 16h0m0 9h0m0 6h0m1-82h0m0 14h0m0 4h0m0 5h0m0 4h0m0 5h0m0 3h0m0 3h0m0 7h0m0 4h0m0 21h0m1-43h0m0 2h0m0 1h0m0 5h0m0 4h0m0 3h0m0 4h0m0 2h0m0 2h0m0 18h0m1-59h0m0 13h0m0 5h0m0 2h0m0 9h0m0 3h0m0 2h0m0 5h0m0 2h0m0 11h0m0 2h0m0 5h0m1-53h0m0 9h0m0 7h0m0 1h0m0 1h0m0 6h0m0 4h0m0 2h0m0 6h0m0 22h0m1-45h0m0 9h0m0 8h0m0 10h0m0 6h0m2-52h0m0 18h0m0 3h0m0 2h0m0 7h0m0 1h0m0 5h0m0 2h0m0 4h0m0 3h0m0 2h0m0 9h0m1-41h0m0 1h0m0 7h0m0 8h0m0 3h0m0 6h0m0 2h0m0 6h0m0 2h0m0 6h0m0 3h0m1-34h0m0 1h0m0 1h0m0 1h0m0 3h0m0 8h0m0 6h0m0 7h0m0 1h0m0 3h0m1-54h0m0 8h0m0 7h0m0 5h0m0 4h0m0 8h0m0 1h0m0 2h0m0 3h0m0 1h0m0 2h0m0 6h0m1-52h0m0 26h0m0 2h0m0 1h0m0 2h0m0 6h0m0 6h0m0 16h0m0 7h0m1-58h0m0 12h0m0 3h0m0 1h0m0 1h0m0 8h0m0 1h0m0 4h0m0 3h0m0 1h0m0 1h0m0 10h0m0 9h0m0 10h0m1-76h0m0 17h0m0 1h0m0 17h0m0 12h0m0 2h0m0 2h0m0 2h0m0 3h0m0 4h0m0 12h0m1-62h0m0 25h0m0 5h0m0 2h0m0 2h0m6-88h0m1-21h0m0 1h0m0 1h0m0 4h0m0 1h0m0 10h0m0 2h0m0 5h0m0 1h0m0 1h0m0 4h0m0 2h0m0 4h0m0 3h0m0 3h0m0 2h0m0 5h0m0 3h0m0 4h0m0 17h0m0 1h0m1-70h0m0 9h0m0 1h0m0 5h0m0 5h0m0 5h0m0 4h0m0 1h0m0 17h0m0 4h0m0 4h0m0 5h0m0 4h0m0 5h0m1-100h0m0 2h0m0 2h0m0 9h0m0 14h0m0 1h0m0 4h0m0 3h0m0 3h0m0 1h0m0 9h0m0 8h0m0 3h0m0 3h0m0 1h0m0 7h0m0 6h0m0 3h0m0 2h0m0 3h0m0 5h0m0 7h0m0 1h0m0 6h0m0 2h0m1-104h0m0 2h0m0 3h0m0 4h0m0 3h0m0 3h0m0 10h0m0 5h0m0 5h0m0 4h0m0 6h0m0 3h0m0 3h0m0 2h0m0 1h0m0 1h0m0 7h0m0 1h0m0 2h0m0 2h0m0 1h0m0 4h0m0 10h0m0 3h0m0 3h0m0 7h0m1-70h0m0 32h0m0 5h0m0 3h0m0 1h0m0 1h0m0 9h0m0 3h0m0 11h0m0 6h0m0 13h0m2-67h0m0 14h0m0 17h0m0 3h0m0 1h0m0 5h0m0 3h0m0 2h0m0 7h0m1-71h0m0 14h0m0 7h0m0 5h0m0 4h0m0 4h0m0 3h0m0 3h0m0 2h0m0 2h0m0 1h0m0 12h0m0 3h0m0 3h0m0 4h0m0 3h0m0 1h0m0 1h0m0 4h0m0 5h0m0 10h0m1-63h0m0 7h0m0 1h0m0 9h0m0 6h0m0 2h0m0 2h0m0 5h0m0 8h0m0 5h0m0 1h0m0 4h0m0 1h0m0 4h0m0 1h0m0 10h0m0 5h0m0 11h0m1-71h0m0 11h0m0 1h0m0 8h0m0 5h0m0 6h0m0 6h0m0 2h0m0 4h0m0 6h0m0 1h0m0 2h0m0 9h0m0 10h0m0 3h0m1-79h0m0 2h0m0 6h0m0 7h0m0 6h0m0 1h0m0 5h0m0 6h0m0 1h0m0 12h0m0 3h0m0 5h0m0 13h0m0 1h0m0 1h0m0 3h0m0 6h0m0 17h0m1-152h0m0 16h0m0 2h0m0 5h0m0 1h0m0 5h0m0 3h0m0 5h0m0 2h0m0 2h0m0 2h0m0 5h0m0 6h0m0 15h0m0 7h0m0 11h0m0 6h0m0 2h0m1-70h0m0 2h0m0 3h0m0 14h0m0 7h0m0 1h0m0 4h0m0 4h0m0 6h0m0 7h0m0 6h0m0 15h0m0 3h0m0 12h0m2-9h0m0 17h0m0 11h0m1-81h0m0 22h0m0 6h0m0 1h0m0 4h0m0 1h0m0 3h0m0 1h0m0 10h0m0 2h0m0 3h0m0 3h0m0 1h0m0 1h0m0 3h0m0 2h0m0 3h0m0 8h0m0 1h0m1-66h0m0 12h0m0 2h0m0 4h0m0 4h0m0 4h0m0 1h0m0 2h0m0 1h0m0 2h0m0 6h0m0 3h0m0 2h0m0 2h0m0 1h0m0 7h0m0 12h0m0 5h0m1-103h0m0 27h0m0 11h0m0 1h0m0 8h0m0 6h0m0 2h0m0 10h0m0 2h0m0 1h0m0 11h0m0 4h0m0 9h0m0 11h0m1-57h0m0 15h0m0 3h0m0 1h0m0 1h0m0 4h0m0 4h0m0 2h0m0 6h0m0 3h0m0 3h0m0 1h0m0 1h0m0 2h0m0 1h0m0 3h0m0 1h0m0 4h0m0 3h0m0 5h0m1-83h0m0 22h0m0 1h0m0 5h0m0 4h0m0 3h0m0 1h0m0 9h0m0 7h0m0 5h0m0 1h0m0 5h0m0 11h0m0 2h0m0 2h0m0 1h0m0 8h0m0 4h0m0 3h0m4-105h0m0 8h0m0 2h0m0 16h0m0 1h0m0 6h0m0 7h0m0 1h0m0 2h0m0 4h0m0 3h0m0 9h0m0 3h0m0 6h0m0 3h0m0 19h0m1-83h0m0 4h0m0 11h0m0 2h0m0 1h0m0 7h0m0 4h0m0 3h0m0 2h0m0 4h0m0 3h0m0 1h0m0 3h0m0 1h0m0 6h0m0 5h0m0 2h0m0 14h0m0 9h0m1-96h0m0 37h0m0 6h0m0 1h0m0 17h0m0 1h0m0 2h0m0 1h0m0 3h0m0 5h0m0 6h0m0 9h0m0 4h0m0 4h0m0 13h0m0 16h0m1-109h0m0 5h0m0 4h0m0 10h0m0 1h0m0 1h0m0 12h0m0 3h0m0 8h0m0 1h0m0 10h0m0 2h0m0 3h0m0 4h0m1-85h0m0 23h0m0 5h0m0 4h0m0 2h0m0 1h0m0 11h0m0 3h0m0 3h0m0 2h0m0 2h0m0 1h0m0 5h0m0 1h0m0 2h0m0 2h0m0 2h0m0 9h0m0 6h0m0 1h0m0 9h0m0 4h0m1-76h0m0 18h0m3-34h0m0 6h0m0 8h0m0 2h0m0 1h0m0 4h0m0 2h0m0 1h0m0 1h0m0 2h0m0 4h0m0 7h0m0 4h0m0 6h0m0 2h0m0 6h0m0 5h0m0 6h0m0 1h0m1-69h0m0 17h0m0 1h0m0 2h0m0 2h0m0 5h0m0 1h0m0 1h0m0 1h0m0 1h0m0 6h0m0 2h0m0 8h0m0 6h0m0 2h0m0 1h0m0 7h0m0 9h0m0 1h0m1-84h0m0 2h0m0 6h0m0 8h0m0 7h0m0 3h0m0 3h0m0 4h0m0 2h0m0 7h0m0 3h0m0 3h0m0 11h0m0 12h0m0 2h0m0 8h0m0 2h0m0 17h0m1-103h0m0 13h0m0 8h0m0 4h0m0 2h0m0 3h0m0 1h0m0 2h0m0 3h0m0 6h0m0 1h0m0 1h0m0 1h0m0 1h0m0 4h0m0 14h0m0 2h0m0 1h0m0 10h0m1-60h0m0 4h0m0 14h0m0 12h0m0 18h0m2-54h0m0 3h0m0 6h0m0 8h0m0 2h0m0 5h0m0 5h0m0 3h0m0 4h0m0 3h0m0 4h0m0 7h0m0 13h0m1-64h0m0 7h0m0 3h0m0 7h0m0 4h0m0 6h0m0 2h0m0 2h0m0 1h0m0 3h0m0 1h0m0 5h0m0 2h0m0 10h0m0 1h0m0 5h0m0 5h0m1-57h0m0 16h0m0 1h0m0 1h0m0 6h0m0 5h0m0 4h0m0 6h0m0 1h0m0 1h0m0 2h0m0 3h0m0 1h0m0 3h0m0 1h0m0 2h0m0 8h0m0 4h0m0 5h0m1-71h0m0 6h0m0 6h0m0 6h0m0 5h0m0 1h0m0 5h0m0 3h0m0 1h0m0 4h0m0 6h0m0 5h0m0 4h0m0 7h0m0 3h0m0 19h0m1-77h0m0 18h0m0 5h0m0 4h0m0 5h0m0 3h0m0 1h0m0 1h0m0 4h0m0 2h0m0 7h0m0 1h0m0 1h0m0 6h0m0 2h0m0 6h0m0 1h0m0 1h0m0 11h0m0 2h0m0 3h0m0 9h0m1-118h0m0 26h0m0 11h0m0 3h0m0 4h0m0 2h0m0 1h0m0 1h0m0 1h0m0 7h0m0 27h0m0 23h0m2-47h0m0 1h0m0 10h0m0 2h0m0 9h0m0 20h0m1-104h0m0 38h0m0 11h0m0 5h0m0 7h0m0 3h0m0 2h0m0 1h0m0 1h0m0 4h0m0 5h0m0 1h0m0 2h0m0 1h0m0 3h0m0 6h0m0 1h0m0 3h0m1-50h0m0 9h0m0 9h0m0 4h0m0 3h0m0 10h0m0 1h0m0 1h0m0 2h0m0 2h0m0 8h0m0 2h0m0 7h0m0 1h0m0 9h0m1-109h0m0 29h0m0 6h0m0 12h0m0 7h0m0 1h0m0 3h0m0 4h0m0 7h0m0 1h0m0 3h0m0 4h0m0 8h0m0 1h0m0 2h0m0 2h0m0 8h0m0 8h0m1-73h0m0 2h0m0 3h0m0 12h0m0 5h0m0 5h0m0 1h0m0 3h0m0 4h0m0 5h0m0 3h0m0 6h0m0 2h0m0 2h0m0 10h0m0 11h0m1-84h0m0 16h0m0 4h0m0 2h0m0 2h0m0 1h0m0 6h0m0 3h0m0 2h0m0 1h0m0 4h0m0 1h0m0 3h0m0 1h0m0 1h0m0 10h0m0 6h0m0 11h0m0 3h0m1-62h0m0 33h0m2-44h0m0 6h0m0 5h0m0 8h0m0 1h0m0 11h0m0 31h0m1-65h0m0 10h0m0 5h0m0 2h0m0 3h0m0 6h0m0 1h0m0 2h0m0 1h0m0 2h0m0 3h0m0 4h0m0 3h0m0 2h0m0 2h0m0 2h0m0 9h0m1-55h0m0 1h0m0 2h0m0 2h0m0 1h0m0 1h0m0 3h0m0 11h0m0 4h0m0 7h0m0 4h0m0 2h0m0 6h0m0 4h0m0 2h0m0 5h0m0 1h0m0 5h0m0 13h0m1-91h0m0 21h0m0 12h0m0 1h0m0 17h0m0 1h0m0 4h0m0 4h0m0 1h0m0 6h0m0 1h0m0 5h0m0 9h0m0 12h0m0 11h0m1-110h0m0 28h0m0 5h0m0 2h0m0 2h0m0 4h0m0 3h0m0 4h0m0 2h0m0 3h0m0 4h0m0 5h0m0 5h0m0 3h0m0 5h0m0 3h0m0 7h0m0 1h0m0 20h0m1-82h0m0 15h0m0 2h0m0 7h0m0 4h0m0 4h0m0 1h0m0 1h0m0 2h0m0 2h0m0 3h0m0 12h0m0 3h0m1-52h0m0 2h0m0 13h0m0 3h0m0 4h0m0 10h0m0 3h0m0 1h0m0 2h0m0 2h0m0 1h0m0 3h0m0 4h0m0 1h0m0 7h0m0 1h0m0 1h0m4-60h0m0 4h0m0 4h0m0 11h0m0 9h0m0 7h0m0 3h0m0 2h0m0 5h0m0 3h0m0 7h0m0 2h0m0 4h0m0 2h0m0 8h0m1-55h0m0 1h0m0 3h0m0 5h0m0 1h0m0 5h0m0 1h0m0 6h0m0 1h0m0 4h0m0 9h0m0 1h0m0 2h0m0 3h0m0 6h0m0 2h0m0 1h0m0 8h0m1-56h0m0 7h0m0 2h0m0 2h0m0 7h0m0 4h0m0 5h0m0 1h0m0 2h0m0 4h0m0 15h0m0 2h0m0 4h0m0 6h0m1-79h0m0 1h0m0 2h0m0 9h0m0 2h0m0 1h0m0 1h0m0 2h0m0 8h0m0 5h0m0 1h0m0 6h0m0 15h0m0 4h0m0 1h0m0 1h0m0 9h0m0 1h0m0 4h0m0 7h0m0 27h0m1-117h0m0 16h0m0 4h0m0 6h0m0 7h0m0 1h0m0 12h0m0 4h0m0 2h0m0 3h0m0 1h0m0 1h0m0 2h0m0 13h0m0 4h0m1-71h0m0 9h0m0 1h0m0 3h0m0 11h0m0 4h0m0 5h0m0 2h0m0 1h0m0 3h0m0 2h0m0 3h0m0 4h0m0 1h0m0 5h0m1-57h0m0 3h0m0 26h0m0 1h0m0 2h0m0 1h0m0 4h0m0 5h0m0 5h0m0 5h0m0 3h0m0 2h0m0 13h0m0 1h0m0 15h0m0 5h0m1-83h0m0 3h0m0 9h0m0 7h0m0 9h0m0 2h0m0 11h0m0 1h0m0 2h0m0 8h0m0 2h0m0 2h0m0 1h0m0 2h0m0 6h0m0 8h0m0 5h0m0 6h0m0 3h0m1-77h0m0 3h0m0 8h0m0 5h0m0 7h0m0 3h0m0 3h0m0 2h0m0 2h0m0 10h0m0 4h0m0 1h0m0 6h0m0 4h0m0 13h0m0 33h0m1-117h0m0 4h0m0 13h0m0 11h0m0 5h0m0 3h0m0 12h0m0 5h0m0 5h0m0 1h0m0 5h0m0 2h0m1-108h0m0 1h0m0 1h0m0 9h0m0 7h0m0 13h0m0 10h0m0 6h0m0 25h0m1-72h0m0 6h0m0 4h0m0 2h0m0 2h0m0 7h0m0 1h0m0 7h0m0 3h0m0 10h0m0 1h0m0 2h0m0 5h0m0 10h0m0 3h0m0 2h0m0 1h0m0 3h0m0 3h0m0 4h0m0 4h0m0 3h0m0 11h0m0 1h0m0 10h0m0 3h0m1-108h0m0 1h0m0 16h0m0 1h0m0 1h0m0 13h0m0 6h0m0 1h0m0 10h0m0 15h0m0 3h0m0 11h0m0 2h0m0 7h0m0 6h0m0 2h0m0 6h0m0 7h0m0 2h0m0 3h0m0 2h0m0 2h0m1-116h0m0 1h0m0 2h0m0 1h0m0 2h0m0 12h0m0 1h0m0 2h0m0 2h0m0 2h0m0 8h0m0 3h0m0 12h0m0 1h0m0 4h0m0 4h0m0 2h0m0 2h0m0 2h0m0 9h0m0 2h0m0 7h0m0 6h0m0 3h0m0 1h0m0 3h0m0 18h0m0 1h0m0 4h0m1-118h0m0 1h0m0 1h0m0 1h0m0 3h0m0 2h0m0 3h0m0 3h0m0 6h0m0 3h0m0 3h0m0 2h0m0 13h0m0 3h0m0 2h0m0 2h0m0 1h0m0 4h0m0 7h0m0 7h0m0 3h0m0 4h0m0 4h0m0 1h0m0 5h0m0 2h0m0 1h0m0 13h0m1-48h0m0 3h0m0 2h0m0 7h0m0 7h0m0 2h0m0 4h0m0 3h0m0 15h0m0 7h0m0 1h0m0 1h0m0 3h0m0 8h0m0 4h0m0 2h0m0 6h0m0 15h0m1-81h0m0 9h0m0 4h0m0 1h0m0 4h0m0 2h0m0 3h0m0 1h0m0 5h0m0 3h0m0 1h0m0 1h0m0 2h0m0 1h0m0 1h0m0 8h0m0 2h0m0 2h0m0 2h0m0 1h0m0 9h0m1-78h0m0 3h0m0 18h0m0 3h0m0 9h0m0 4h0m0 1h0m0 1h0m0 1h0m0 4h0m0 4h0m0 12h0m0 2h0m0 3h0m0 2h0m0 2h0m0 4h0m0 4h0m1-70h0m0 1h0m0 20h0m0 1h0m0 3h0m0 2h0m0 3h0m0 6h0m0 1h0m0 3h0m0 5h0m0 5h0m0 9h0m0 1h0m0 1h0m0 1h0m0 1h0m0 4h0m0 2h0m1-103h0m0 26h0m0 7h0m0 3h0m0 4h0m0 1h0m0 2h0m0 2h0m0 1h0m0 2h0m0 2h0m0 2h0m0 3h0m0 11h0m0 2h0m0 2h0m0 1h0m0 11h0m0 4h0m0 12h0m1-68h0m0 14h0m0 15h0m0 1h0m0 2h0m0 5h0m0 8h0m0 12h0m0 2h0m0 38h0m4-133h0m0 25h0m0 1h0m0 10h0m0 10h0m0 5h0m0 3h0m0 2h0m0 2h0m0 3h0m0 5h0m0 2h0m0 1h0m0 1h0m0 4h0m0 2h0m0 3h0m0 5h0m0 1h0m0 2h0m0 1h0m0 4h0m1-88h0m0 23h0m0 4h0m0 3h0m0 3h0m0 7h0m0 3h0m0 8h0m0 9h0m0 6h0m0 2h0m0 5h0m0 6h0m0 2h0m0 4h0m0 5h0m0 6h0m0 2h0m0 6h0m1-47h0m0 4h0m0 14h0m0 1h0m0 12h0m0 1h0m0 3h0m0 1h0m0 2h0m0 1h0m0 3h0m0 8h0m0 2h0m0 5h0m0 2h0m0 7h0m1-97h0m0 5h0m0 2h0m0 7h0m0 1h0m0 2h0m0 7h0m0 4h0m0 1h0m0 2h0m0 3h0m0 1h0m0 6h0m0 3h0m0 3h0m0 1h0m0 5h0m1-55h0m0 5h0m0 13h0m0 1h0m0 3h0m0 13h0m0 2h0m0 2h0m0 3h0m0 1h0m0 7h0m0 1h0m0 1h0m0 3h0m0 2h0m0 4h0m0 4h0m0 4h0m1-54h0m0 2h0m0 1h0m0 3h0m0 3h0m0 6h0m0 7h0m0 3h0m0 2h0m0 13h0m0 3h0m0 7h0m0 5h0m0 2h0m0 14h0m1-71h0m0 7h0m0 5h0m0 2h0m0 3h0m0 1h0m0 1h0m0 1h0m0 9h0m0 3h0m0 1h0m0 3h0m0 4h0m0 7h0m0 1h0m1-57h0m0 13h0m0 20h0m0 5h0m0 1h0m0 7h0m0 1h0m0 4h0m0 3h0m0 9h0m0 8h0m0 4h0m0 15h0m0 3h0m0 11h0m1-87h0m0 1h0m0 1h0m0 10h0m0 1h0m0 1h0m0 5h0m0 4h0m0 3h0m0 6h0m0 1h0m0 9h0m0 1h0m0 2h0m0 1h0m0 1h0m0 2h0m0 27h0m2-139h0m0 1h0m0 38h0m0 6h0m0 1h0m0 2h0m0 23h0m0 14h0m1-79h0m0 18h0m0 2h0m0 7h0m0 3h0m0 3h0m0 7h0m0 1h0m0 1h0m0 10h0m0 5h0m0 12h0m0 4h0m5 2h0m0 10h0m0 9h0m0 7h0m1-60h0m0 39h0m0 16h0m0 2h0m0 6h0m0 5h0m0 2h0m0 1h0m0 9h0m0 7h0m0 13h0m1-89h0m0 14h0m0 3h0m0 1h0m0 18h0m0 23h0m0 2h0m0 5h0m0 1h0m0 3h0m1-55h0m0 19h0m0 1h0m0 6h0m0 1h0m0 1h0m0 1h0m0 4h0m0 1h0m0 2h0m0 10h0m0 1h0m0 3h0m0 6h0m1-50h0m0 3h0m0 4h0m0 3h0m0 15h0m0 2h0m0 4h0m0 2h0m0 4h0m0 10h0m1-45h0m0 11h0m0 3h0m0 4h0m0 1h0m0 1h0m0 10h0m0 1h0m0 1h0m0 8h0m0 8h0m0 10h0m1-45h0m0 3h0m0 6h0m0 6h0m0 1h0m0 5h0m0 4h0m0 2h0m0 3h0m0 1h0m1-78h0m0 10h0m0 6h0m0 7h0m0 15h0m0 1h0m0 6h0m0 3h0m0 2h0m0 8h0m0 2h0m0 14h0m1-23h0m0 3h0m0 3h0m0 7h0m0 1h0m0 1h0m0 3h0m0 1h0m0 7h0m0 2h0m1-40h0m0 3h0m0 6h0m0 6h0m0 1h0m0 2h0m0 5h0m0 10h0m0 6h0m0 2h0m0 2h0m0 14h0m0 5h0m1-83h0m0 10h0m0 17h0m0 3h0m0 5h0m0 10h0m0 5h0m0 4h0m0 1h0m0 1h0m0 7h0m1-33h0m0 1h0m0 1h0m0 3h0m0 4h0m0 2h0m0 13h0m0 4h0m0 3h0m0 6h0m1-69h0m0 24h0m0 6h0m0 9h0m0 6h0m0 2h0m0 2h0m0 2h0m0 6h0m0 7h0m0 1h0m0 15h0m1-60h0m0 8h0m0 4h0m0 1h0m0 2h0m0 2h0m0 2h0m0 5h0m0 1h0m0 10h0m0 7h0m0 23h0m1-73h0m0 8h0m0 2h0m0 3h0m0 14h0m0 1h0m0 12h0m0 3h0m0 2h0m0 2h0m1-29h0m0 1h0m0 9h0m0 1h0m0 1h0m0 4h0m0 3h0m0 5h0m0 2h0m0 2h0m0 12h0m1-43h0m0 1h0m0 3h0m0 13h0m0 4h0m0 4h0m0 1h0m0 5h0m0 17h0m0 4h0m0 1h0m1-52h0m0 17h0m0 3h0m0 1h0m0 1h0m0 3h0m0 25h0m0 7h0" fill="none" stroke="#000" stroke-width="3.7" stroke-linecap="round"/>
<g fill="#ffa500"><circle cx="215.5" cy="478.5" r="1.85"/><circle cx="240.5" cy="471.5" r="1.85"/><circle cx="240.5" cy="473.5" r="1.85"/><circle cx="240.5" cy="476.5" r="1.85"/><circle cx="249.5" cy="483.5" r="1.85"/><circle cx="283.5" cy="482.5" r="1.85"/><circle cx="287.5" cy="469.5" r="1.85"/><circle cx="287.5" cy="473.5" r="1.85"/><circle cx="380.5" cy="480.5" r="1.85"/><circle cx="409.5" cy="479.5" r="1.85"/><circle cx="456.5" cy="472.5" r="1.85"/><circle cx="203.5" cy="592.5" r="1.85"/><circle cx="224.5" cy="576.5" r="1.85"/><circle cx="276.5" cy="576.5" r="1.85"/><circle cx="304.5" cy="576.5" r="1.85"/><circle cx="338.5" cy="576.5" r="1.85"/><circle cx="339.5" cy="586.5" r="1.85"/><circle cx="348.5" cy="581.5" r="1.85"/><circle cx="388.5" cy="589.5" r="1.85"/><circle cx="393.5" cy="585.5" r="1.85"/><circle cx="393.5" cy="588.5" r="1.85"/><circle cx="391.5" cy="603.5" r="1.85"/><circle cx="393.5" cy="616.5" r="1.85"/><circle cx="361.5" cy="645.5" r="1.85"/><circle cx="480.5" cy="478.5" r="1.85"/><circle cx="480.5" cy="480.5" r="1.85"/><circle cx="479.5" cy="483.5" r="1.85"/><circle cx="553.5" cy="471.5" r="1.85"/><circle cx="601.5" cy="481.5" r="1.85"/><circle cx="649.5" cy="466.5" r="1.85"/><circle cx="649.5" cy="477.5" r="1.85"/><circle cx="648.5" cy="479.5" r="1.85"/><circle cx="673.5" cy="479.5" r="1.85"/><circle cx="672.5" cy="483.5" r="1.85"/><circle cx="725.5" cy="471.5" r="1.85"/><circle cx="474.5" cy="599.5" r="1.85"/><circle cx="595.5" cy="577.5" r="1.85"/><circle cx="675.5" cy="577.5" r="1.85"/><circle cx="675.5" cy="579.5" r="1.85"/><circle cx="770.5" cy="469.5" r="1.85"/><circle cx="788.5" cy="480.5" r="1.85"/><circle cx="794.5" cy="482.5" r="1.85"/><circle cx="865.5" cy="477.5" r="1.85"/><circle cx="864.5" cy="482.5" r="1.85"/><circle cx="890.5" cy="476.5" r="1.85"/><circle cx="893.5" cy="480.5" r="1.85"/><circle cx="961.5" cy="476.5" r="1.85"/><circle cx="961.5" cy="480.5" r="1.85"/><circle cx="986.5" cy="474.5" r="1.85"/><circle cx="1010.5" cy="477.5" r="1.85"/><circle cx="1029.5" cy="479.5" r="1.85"/><circle cx="1058.5" cy="473.5" r="1.85"/><circle cx="1057.5" cy="480.5" r="1.85"/><circle cx="844.5" cy="579.5" r="1.85"/><circle cx="848.5" cy="612.5" r="1.85"/><circle cx="1049.5" cy="579.5" r="1.85"/><circle cx="771.5" cy="650.5" r="1.85"/><circle cx="1058.5" cy="479.5" r="1.85"/><circle cx="1057.5" cy="481.5" r="1.85"/><circle cx="1106.5" cy="479.5" r="1.85"/><circle cx="1112.5" cy="479.5" r="1.85"/><circle cx="1070.5" cy="578.5" r="1.85"/><circle cx="1117.5" cy="581.5" r="1.85"/><circle cx="1184.5" cy="388.5" r="1.85"/><circle cx="1257.5" cy="385.5" r="1.85"/><circle cx="1254.5" cy="390.5" r="1.85"/><circle cx="1256.5" cy="393.5" r="1.85"/><circle cx="1260.5" cy="636.5" r="1.85"/><circle cx="1201.5" cy="663.5" r="1.85"/><circle cx="1285.5" cy="439.5" r="1.85"/><circle cx="1290.5" cy="441.5" r="1.85"/><circle cx="1286.5" cy="445.5" r="1.85"/></g>
<g fill="#ffa500"><path d="M773.4 660.6h6.2l-3.1 5.6z"/><path d="M810.3 660.6h6.2l-3.1 5.6z"/><path d="M841.4 660.6h6.2l-3.1 5.6z"/><path d="M915.3 660.6h6.2l-3.1 5.6z"/><path d="M959.3 660.6h6.2l-3.1 5.6z"/><path d="M1254.3 386.6h6.2l-3.1 -5.8z"/></g>
<rect x="162" y="511.8" width="1015" height="34.4" fill="#ffa500" fill-opacity=".1"/>
<rect x="1177" y="444.7" width="103.5" height="55.7" fill="#ffa500" fill-opacity=".1"/>
<rect x="1280.5" y="480" width="23.8" height="42.3" fill="#ffa500" fill-opacity=".1"/>
<rect x="105.5" y="499.2" width="1255.5" height="48.4" fill="#f00" fill-opacity=".1"/>
<g stroke="#ffa500" stroke-width="3"><line x1="161.4" y1="529.5" x2="1177" y2="529.5"/><line x1="1175" y1="472.5" x2="1281.9" y2="472.5"/><line x1="1279" y1="501.5" x2="1304.8" y2="501.5"/></g>
<line x1="105.5" y1="523" x2="1361" y2="523" stroke="#f00" stroke-width="2"/>
<g stroke="#800080" stroke-width="2.1" stroke-dasharray="2.08 3.441"><line x1="162.0" y1="666.05" x2="162.0" y2="380.5"/><line x1="1176.0" y1="666.05" x2="1176.0" y2="380.5"/><line x1="1279.9" y1="666.05" x2="1279.9" y2="380.5"/><line x1="1302.9" y1="666.05" x2="1302.9" y2="380.5"/></g>
</g>
<rect x="105.5" y="380.5" width="1380.0" height="286.0" fill="none" stroke="#000" stroke-width="1.1"/>
<line x1="162.5" y1="666.5" x2="162.5" y2="671.4" stroke="#000" stroke-width="1.1"/><text x="162.9" y="686.9" text-anchor="middle">0</text><line x1="336.5" y1="666.5" x2="336.5" y2="671.4" stroke="#000" stroke-width="1.1"/><text x="336.9" y="686.9" text-anchor="middle">2500</text><line x1="510.5" y1="666.5" x2="510.5" y2="671.4" stroke="#000" stroke-width="1.1"/><text x="510.9" y="686.9" text-anchor="middle">5000</text><line x1="684.5" y1="666.5" x2="684.5" y2="671.4" stroke="#000" stroke-width="1.1"/><text x="684.9" y="686.9" text-anchor="middle">7500</text><line x1="859.5" y1="666.5" x2="859.5" y2="671.4" stroke="#000" stroke-width="1.1"/><text x="859.9" y="686.9" text-anchor="middle">10000</text><line x1="1033.5" y1="666.5" x2="1033.5" y2="671.4" stroke="#000" stroke-width="1.1"/><text x="1033.9" y="686.9" text-anchor="middle">12500</text><line x1="1207.5" y1="666.5" x2="1207.5" y2="671.4" stroke="#000" stroke-width="1.1"/><text x="1207.9" y="686.9" text-anchor="middle">15000</text><line x1="1381.5" y1="666.5" x2="1381.5" y2="671.4" stroke="#000" stroke-width="1.1"/><text x="1381.9" y="686.9" text-anchor="middle">17500</text>
<line x1="100.6" y1="384.5" x2="105.5" y2="384.5" stroke="#000" stroke-width="1.1"/><text x="95.2" y="388.8" text-anchor="end">7.67</text><line x1="100.6" y1="417.5" x2="105.5" y2="417.5" stroke="#000" stroke-width="1.1"/><text x="95.2" y="421.8" text-anchor="end">7.66</text><line x1="100.6" y1="450.5" x2="105.5" y2="450.5" stroke="#000" stroke-width="1.1"/><text x="95.2" y="454.8" text-anchor="end">7.65</text><line x1="100.6" y1="484.5" x2="105.5" y2="484.5" stroke="#000" stroke-width="1.1"/><text x="95.2" y="488.8" text-anchor="end">7.64</text><line x1="100.6" y1="517.5" x2="105.5" y2="517.5" stroke="#000" stroke-width="1.1"/><text x="95.2" y="521.8" text-anchor="end">7.63</text><line x1="100.6" y1="550.5" x2="105.5" y2="550.5" stroke="#000" stroke-width="1.1"/><text x="95.2" y="554.8" text-anchor="end">7.62</text><line x1="100.6" y1="583.5" x2="105.5" y2="583.5" stroke="#000" stroke-width="1.1"/><text x="95.2" y="587.8" text-anchor="end">7.61</text><line x1="100.6" y1="616.5" x2="105.5" y2="616.5" stroke="#000" stroke-width="1.1"/><text x="95.2" y="620.8" text-anchor="end">7.60</text><line x1="100.6" y1="650.5" x2="105.5" y2="650.5" stroke="#000" stroke-width="1.1"/><text x="95.2" y="654.8" text-anchor="end">7.59</text>
<text x="794.9" y="372" text-anchor="middle" font-size="16.67px">Magnitude Estimates</text>
<text x="647.6" y="657" >11780</text><text x="1206.2" y="637">27226</text><text x="1270.2" y="617">43587</text>
<rect x="1365.4" y="387.3" width="113.3" height="48.3" rx="2.8" fill="#fff" fill-opacity=".8" stroke="#ccc" stroke-width="1.1"/>
<line x1="1369" y1="399.5" x2="1400" y2="399.5" stroke="#ffa500" stroke-width="2.8"/>
<line x1="1369" y1="421.9" x2="1399" y2="421.9" stroke="#f00" stroke-width="2.1"/>
<text x="1410.1" y="403.8">mag<tspan font-size="9.72px" font-style="oblique" dy="2.2" dx="-.9" letter-spacing=".2">OBSID</tspan></text><text x="1408.8" y="426.4">mag</text>
<rect x="1348.3" y="613.3" width="130.4" height="45.9" rx="2.8" fill="#fff" fill-opacity=".8" stroke="#ccc" stroke-width="1.1"/>
<circle cx="1367.5" cy="626.3" r="1.9" fill="#ffa500"/><circle cx="1367.5" cy="647.3" r="1.9" fill="#000"/>
<text x="1392.7" y="629.9">Highlighted</text><text x="1392.8" y="650.8">OK</text>
<g clip-path="url(#c3)">
<path transform="translate(.5 .5)" d="m166 1008h0m1-1h0m0 1h0m0 1h0m1-1h0m1 0h0m1-1h0m0 1h0m1 1h0m1-1h0m0 1h0m1-1h0m0 1h0m1-1h0m0 1h0m1-1h0m0 1h0m1-1h0m0 1h0m1-1h0m1 0h0m0 1h0m1 0h0m1-2h0m1 1h0m1 0h0m1 0h0m0 1h0m1-1h0m0 1h0m1-1h0m0 1h0m1-2h0m0 1h0m1 0h0m1-1h0m0 2h0m1-1h0m0 1h0m1-2h0m1 0h0m0 1h0m2 0h0m0 1h0m1-1h0m0 1h0m1-1h0m0 1h0m1-2h0m0 1h0m0 1h0m1-2h0m0 1h0m1-1h0m0 1h0m1-1h0m0 1h0m1-1h0m0 1h0m1-1h0m0 1h0m1 0h0m1-1h0m0 1h0m1-1h0m0 1h0m1-1h0m0 1h0m1-1h0m1 2h0m1-1h0m1 0h0m1 0h0m0 1h0m1 0h0m1-2h0m0 1h0m1-1h0m0 1h0m1 0h0m1-1h0m0 1h0m1 0h0m1-1h0m0 1h0m1-1h0m0 1h0m2 0h0m0 1h0m1-1h0m0 1h0m1-2h0m0 2h0m1-2h0m0 1h0m1-1h0m0 1h0m1 0h0m1 0h0m1-1h0m0 1h0m1-1h0m0 1h0m1-1h0m0 1h0m1-1h0m0 1h0m1-1h0m0 1h0m1-1h0m0 1h0m1-1h0m0 1h0m1-1h0m0 1h0m1-1h0m0 1h0m1 0h0m0 1h0m1-1h0m1 0h0m1 0h0m0 1h0m1-1h0m0 1h0m1-1h0m0 1h0m1-1h0m0 1h0m1-1h0m1-1h0m0 1h0m1-1h0m1 0h0m0 2h0m1-2h0m1 1h0m0 1h0m1-1h0m0 1h0m1-1h0m0 1h0m1-1h0m1 0h0m0 1h0m1-2h0m0 1h0m1 0h0m1 0h0m1 0h0m2-1h0m0 1h0m0 1h0m1-2h0m0 1h0m1 0h0m1 0h0m0 1h0m1-1h0m0 1h0m1-1h0m0 1h0m1-1h0m0 1h0m1-2h0m0 2h0m1-2h0m1 0h0m0 1h0m0 1h0m1-2h0m0 1h0m1 0h0m0 1h0m1-1h0m1-1h0m1 0h0m0 1h0m0 1h0m1 0h0m1-1h0m1-1h0m0 2h0m1-2h0m0 1h0m1 0h0m0 1h0m1-1h0m0 1h0m1-1h0m1 0h0m0 1h0m1-1h0m0 1h0m1-1h0m0 1h0m1-1h0m1 0h0m1-1h0m0 1h0m1-1h0m0 1h0m1-1h0m1 0h0m0 2h0m1 0h0m1-2h0m0 1h0m1-1h0m1 1h0m0 1h0m1-1h0m0 1h0m1-1h0m0 1h0m1-1h0m1-1h0m0 1h0m1-1h0m0 1h0m1-1h0m0 1h0m1-1h0m0 1h0m2-1h0m0 2h0m1-2h0m0 1h0m1-1h0m0 1h0m1-1h0m0 1h0m1-1h0m0 1h0m1 0h0m1 1h0m1-2h0m0 1h0m1 0h0m1-1h0m0 1h0m1 0h0m1 0h0m1 1h0m1-2h0m0 1h0m1-1h0m0 1h0m1-1h0m0 1h0m1-1h0m0 1h0m1 0h0m1 0h0m0 1h0m1-1h0m1-1h0m0 1h0m1-1h0m0 1h0m1-1h0m0 1h0m1-1h0m0 1h0m1-1h0m0 1h0m1-1h0m0 1h0m0 1h0m1-2h0m0 2h0m1-2h0m0 1h0m1-1h0m0 1h0m1 0h0m1 0h0m0 1h0m1-2h0m1 0h0m0 1h0m1 0h0m1 0h0m1 0h0m0 1h0m1-2h0m0 1h0m1-1h0m0 1h0m1-1h0m0 1h0m1-1h0m0 1h0m0 1h0m1-2h0m0 1h0m0 1h0m1-1h0m1-1h0m0 1h0m1-1h0m0 1h0m1-1h0m0 1h0m2-1h0m0 2h0m2-1h0m0 1h0m1-1h0m0 1h0m1-1h0m0 1h0m1-2h0m0 2h0m1-2h0m0 1h0m0 1h0m1-2h0m1 0h0m0 1h0m1-1h0m0 1h0m1-1h0m0 1h0m1-1h0m0 1h0m2 0h0m0 1h0m1-1h0m0 1h0m1-1h0m0 1h0m1-2h0m0 1h0m0 1h0m1-2h0m0 1h0m1 0h0m1 0h0m0 1h0m1-1h0m0 1h0m1-1h0m0 1h0m1-1h0m1-1h0m0 1h0m1-1h0m0 1h0m0 1h0m1-2h0m0 1h0m1-1h0m0 1h0m1-2h0m0 1h0m1 0h0m0 1h0m1-1h0m0 1h0m0 1h0m1-1h0m1 0h0m0 1h0m1-1h0m0 1h0m1-1h0m0 1h0m1-1h0m1 0h0m0 1h0m1-1h0m1 0h0m0 1h0m1-1h0m0 1h0m1-1h0m1 0h0m1-1h0m1 1h0m0 1h0m1-1h0m0 1h0m1-2h0m1 0h0m0 1h0m0 1h0m1-2h0m0 1h0m1-1h0m0 1h0m1-1h0m0 1h0m1-1h0m0 1h0m1-1h0m1 2h0m1-2h0m0 1h0m1-1h0m0 1h0m1-1h0m0 1h0m1 0h0m1-1h0m0 1h0m1-1h0m0 1h0m1 0h0m1-1h0m0 1h0m1 0h0m0 1h0m1-1h0m0 1h0m1-1h0m0 1h0m1-1h0m1-1h0m0 1h0m1 0h0m1-1h0m0 1h0m1 0h0m1-1h0m0 1h0m1-1h0m0 1h0m1 0h0m1 0h0m1-1h0m0 1h0m1 0h0m0 1h0m1-2h0m0 1h0m1-1h0m0 1h0m0 1h0m1-2h0m0 1h0m1-1h0m0 1h0m1 0h0m1-1h0m0 2h0m1-2h0m0 1h0m1-1h0m0 1h0m1-1h0m0 1h0m1 0h0m0 1h0m1 0h0m1-2h0m1 0h0m0 1h0m1-1h0m0 1h0m1-1h0m0 1h0m1-1h0m0 1h0m1-2h0m0 2h0m1-1h0m1 0h0m0 1h0m1-1h0m0 1h0m1-1h0m0 1h0m1 0h0m0 1h0m1-1h0m0 1h0m1-2h0m0 2h0m1-2h0m0 2h0m1-2h0m0 1h0m1-1h0m0 1h0m1-1h0m0 1h0m1-1h0m0 1h0m1-1h0m0 1h0m1 0h0m1 0h0m0 1h0m1-2h0m0 1h0m0 1h0m1-1h0m0 1h0m1-2h0m1 0h0m0 1h0m1-1h0m0 1h0m1-1h0m0 1h0m1 0h0m1-1h0m0 1h0m1-1h0m0 1h0m1-1h0m0 1h0m1 0h0m1-1h0m0 1h0m1-1h0m0 1h0m1-1h0m1 0h0m0 2h0m2-2h0m0 1h0m1 0h0m1-1h0m0 1h0m1-1h0m0 1h0m1 1h0m1-2h0m0 1h0m1 1h0m1-2h0m0 1h0m1-1h0m0 1h0m1-1h0m0 1h0m1 0h0m1-1h0m0 1h0m0 1h0m1-1h0m1-1h0m0 1h0m1-1h0m0 1h0m1-1h0m0 1h0m1 0h0m1 0h0m0 1h0m2-2h0m0 1h0m0 1h0m1 0h0m1-2h0m0 1h0m0 1h0m1-2h0m0 1h0m1-1h0m0 1h0m1-1h0m0 2h0m1-1h0m1 0h0m1-1h0m0 1h0m1-1h0m0 1h0m1-1h0m0 1h0m1-1h0m1 0h0m0 1h0m0 1h0m1-2h0m0 1h0m1-1h0m0 1h0m1-1h0m0 1h0m1-1h0m0 1h0m1-1h0m0 1h0m1-1h0m0 1h0m1-1h0m0 1h0m1-1h0m0 2h0m1-2h0m0 1h0m1-1h0m0 1h0m1-1h0m0 1h0m1 1h0m1-2h0m0 1h0m1-2h0m0 2h0m1-2h0m0 2h0m1 0h0m1-1h0m0 1h0m1-1h0m0 1h0m1-1h0m0 1h0m1-1h0m0 1h0m0 1h0m1-1h0m1 0h0m1-1h0m0 1h0m1 0h0m1 1h0m1-2h0m1 0h0m0 2h0m1-2h0m0 1h0m1-1h0m0 1h0m1-1h0m0 1h0m1-1h0m0 1h0m1-1h0m0 1h0m1-1h0m0 1h0m1-1h0m0 1h0m1-1h0m0 1h0m1-1h0m0 1h0m1-1h0m0 1h0m1-1h0m0 1h0m1-1h0m0 1h0m1-1h0m0 1h0m1 0h0m0 1h0m1-2h0m0 1h0m1-1h0m0 1h0m1 0h0m0 1h0m1-1h0m0 1h0m1-2h0m0 1h0m1-1h0m0 1h0m1-1h0m0 1h0m1-1h0m0 1h0m1-1h0m0 1h0m1-1h0m0 1h0m1-1h0m0 1h0m1-1h0m0 1h0m1 0h0m0 1h0m1-2h0m0 1h0m1-1h0m0 1h0m1-1h0m0 1h0m1-1h0m0 1h0m1-1h0m0 1h0m1-1h0m0 1h0m1-1h0m0 1h0m1-1h0m0 1h0m1 0h0m0 1h0m1-1h0m0 1h0m1-1h0m0 1h0m1-1h0m1 0h0m1 0h0m0 1h0m1-2h0m0 1h0m1 0h0m1-1h0m0 1h0m1 1h0m1-2h0m0 1h0m1-1h0m0 1h0m0 1h0m1-2h0m0 1h0m1 0h0m1-1h0m0 1h0m1-1h0m0 1h0m1-1h0m0 2h0m1-2h0m0 1h0m1-1h0m0 1h0m1-1h0m0 1h0m1 0h0m1 0h0m0 1h0m1-2h0m1 0h0m0 1h0m1 0h0m0 1h0m1-1h0m0 1h0m1 0h0m1-2h0m1 0h0m0 1h0m0 1h0m1-2h0m0 1h0m0 1h0m1-2h0m1 0h0m0 1h0m1-1h0m0 1h0m1-1h0m0 1h0m1-1h0m0 1h0m0 1h0m1-2h0m0 1h0m1-1h0m0 1h0m1-1h0m0 1h0m1-1h0m0 1h0m1-1h0m0 1h0m1-1h0m0 1h0m1-1h0m0 1h0m1-1h0m0 1h0m1-1h0m0 1h0m1-1h0m0 1h0m1 0h0m0 1h0m1-1h0m0 1h0m1-1h0m0 1h0m1-1h0m1 0h0m1-1h0m0 1h0m0 1h0m1-2h0m0 1h0m1 1h0m1-1h0m0 1h0m1-1h0m0 1h0m1-2h0m0 1h0m1 0h0m1-1h0m0 2h0m1-2h0m0 1h0m1-1h0m0 1h0m1 0h0m1-1h0m1 0h0m0 2h0m2-2h0m0 1h0m1-1h0m0 1h0m1-1h0m0 1h0m0 1h0m1-2h0m0 1h0m1 1h0m1-2h0m0 1h0m1-1h0m0 1h0m1 0h0m1 0h0m1-1h0m0 1h0m1 0h0m1-1h0m0 1h0m1-1h0m0 1h0m1-1h0m0 1h0m1-1h0m0 1h0m1-1h0m0 1h0m1-1h0m0 1h0m0 1h0m1-1h0m0 1h0m1-2h0m0 1h0m1-1h0m0 1h0m1 0h0m0 1h0m1-1h0m0 1h0m1-1h0m1-1h0m0 1h0m1 1h0m1-2h0m1 0h0m0 1h0m1-1h0m0 1h0m1-1h0m1 0h0m0 1h0m1-1h0m0 1h0m1-1h0m0 1h0m1 0h0m1-1h0m0 1h0m1-1h0m0 1h0m1-1h0m0 1h0m2 0h0m0 1h0m1-2h0m0 2h0m1-2h0m0 1h0m1-1h0m0 1h0m1 0h0m1 0h0m0 1h0m1-1h0m0 1h0m1-1h0m1 0h0m0 1h0m1-1h0m0 1h0m1-1h0m0 1h0m1-2h0m1 0h0m0 1h0m1-1h0m1 0h0m0 1h0m1-1h0m0 1h0m1-1h0m0 1h0m1-1h0m0 1h0m0 1h0m1-1h0m0 1h0m1-1h0m0 1h0m1-1h0m0 1h0m1-1h0m1-1h0m0 1h0m1 0h0m0 1h0m1-1h0m1-1h0m1 1h0m0 1h0m1-1h0m2-1h0m0 2h0m1-2h0m0 1h0m0 1h0m1-2h0m1 0h0m0 1h0m1-1h0m0 1h0m1 0h0m1 0h0m0 1h0m1-2h0m1 1h0m0 1h0m1-1h0m1 0h0m0 1h0m1-1h0m0 1h0m1-2h0m1 1h0m1 0h0m0 1h0m1-2h0m0 1h0m1 0h0m1-1h0m0 1h0m1-1h0m0 1h0m1 0h0m1 0h0m1-1h0m0 1h0m1-1h0m0 1h0m1-1h0m0 1h0m1 0h0m1 0h0m1 0h0m0 1h0m1-2h0m0 1h0m0 1h0m1-2h0m0 1h0m0 1h0m1-1h0m1-1h0m0 1h0m0 1h0m1-1h0m0 1h0m1 0h0m1-2h0m0 2h0m1-2h0m0 1h0m0 1h0m1-2h0m0 1h0m1 0h0m1 0h0m1-1h0m0 1h0m1 0h0m1-1h0m0 1h0m1 1h0m1-2h0m0 1h0m0 1h0m1-2h0m0 1h0m1-1h0m0 1h0m1-1h0m0 1h0m1-1h0m0 1h0m1 1h0m1-1h0m0 1h0m1-2h0m0 1h0m1-1h0m1 0h0m0 1h0m1-1h0m0 1h0m1-1h0m1 1h0m0 1h0m1 0h0m1-2h0m0 1h0m1 0h0m1-1h0m0 1h0m1-1h0m0 1h0m1 0h0m1-1h0m0 1h0m1-1h0m0 1h0m1 0h0m1-1h0m0 1h0m1 0h0m1-1h0m0 1h0m1-1h0m0 1h0m1-1h0m0 1h0m1 0h0m1-1h0m0 1h0m1-1h0m0 1h0m1 0h0m1-1h0m0 1h0m1 0h0m1-1h0m0 1h0m1-1h0m0 1h0m1-1h0m1 1h0m0 1h0m1-2h0m0 1h0m1-1h0m0 1h0m1 0h0m1 0h0m0 1h0m1-2h0m0 1h0m0 1h0m1 0h0m1-1h0m0 1h0m1-1h0m0 1h0m1-2h0m0 1h0m0 1h0m1-2h0m1 1h0m0 1h0m1-2h0m0 1h0m1 0h0m1 0h0m0 1h0m1-1h0m0 1h0m1 0h0m1-1h0m1-1h0m0 1h0m1 1h0m1-2h0m0 1h0m1-1h0m0 1h0m1-1h0m0 1h0m1 1h0m1-2h0m0 1h0m1 0h0m0 1h0m1-2h0m0 1h0m1 0h0m1-1h0m0 1h0m1-1h0m0 1h0m1-1h0m0 1h0m0 1h0m1-2h0m0 1h0m1-1h0m0 1h0m1-1h0m0 2h0m1-2h0m0 2h0m1-1h0m1-1h0m0 1h0m1-1h0m0 1h0m1 0h0m1-1h0m1 0h0m0 1h0m0 1h0m1-2h0m1 0h0m1 0h0m0 1h0m0 1h0m1 0h0m1 0h0m1-2h0m1 0h0m0 1h0m1 0h0m1-1h0m0 1h0m1-1h0m0 1h0m1 0h0m1-1h0m0 1h0m0 1h0m1-1h0m1-1h0m0 1h0m1-1h0m0 1h0m1 0h0m1-1h0m0 1h0m1-1h0m0 1h0m1-1h0m0 1h0m1-1h0m0 1h0m1-1h0m0 1h0m1-1h0m1 0h0m0 1h0m1-1h0m0 1h0m1-1h0m0 1h0m1-1h0m0 1h0m1 0h0m1-1h0m0 1h0m1 1h0m1-1h0m1 0h0m1 0h0m0 1h0m1-1h0m0 1h0m1-1h0m1-1h0m1 2h0m1 0h0m1-2h0m0 1h0m0 1h0m1-2h0m1 1h0m0 1h0m2-2h0m0 1h0m2 0h0m0 1h0m2-2h0m0 1h0m1-1h0m0 1h0m1-1h0m0 1h0m1-1h0m0 1h0m1-1h0m0 1h0m1-1h0m0 1h0m1-1h0m0 1h0m1-1h0m0 1h0m1-1h0m0 1h0m1 0h0m0 1h0m1-1h0m0 1h0m1-1h0m0 1h0m1-2h0m1 0h0m0 1h0m0 1h0m1-1h0m1 1h0m1-2h0m0 1h0m1 0h0m0 1h0m1-1h0m1-1h0m0 1h0m1-1h0m0 1h0m1-1h0m1 0h0m0 2h0m1-2h0m0 2h0m1-2h0m0 1h0m1-1h0m0 1h0m1 0h0m1-1h0m0 1h0m1-1h0m0 1h0m1-1h0m0 1h0m1 0h0m0 1h0m1-1h0m0 1h0m1-1h0m0 1h0m1-1h0m0 1h0m1-1h0m0 1h0m1-1h0m0 1h0m1-1h0m1-1h0m0 1h0m1-1h0m0 1h0m1 1h0m1-1h0m0 1h0m1-2h0m1 0h0m0 1h0m1-1h0m0 1h0m1 0h0m1 0h0m0 1h0m1-1h0m1-1h0m0 1h0m1-1h0m0 1h0m1-1h0m0 1h0m1-1h0m0 1h0m1 0h0m0 1h0m1-2h0m0 1h0m1-1h0m0 1h0m1-1h0m0 1h0m1-1h0m0 1h0m1-1h0m0 1h0m0 1h0m1-2h0m0 1h0m1-1h0m0 1h0m1-1h0m0 1h0m1-1h0m0 1h0m1-1h0m0 1h0m2-1h0m0 2h0m1-1h0m0 1h0m1-2h0m0 1h0m1-1h0m0 1h0m1-1h0m0 1h0m1 0h0m1-1h0m0 1h0m1-1h0m0 1h0m1-1h0m0 1h0m1-1h0m0 1h0m1-1h0m0 1h0m1-1h0m0 1h0m1-1h0m0 1h0m1 0h0m1-1h0m0 1h0m1-1h0m0 1h0m0 1h0m1 0h0m1-2h0m0 1h0m1-1h0m0 1h0m1-1h0m0 1h0m1-1h0m0 1h0m1-1h0m0 1h0m1-1h0m0 1h0m1-1h0m0 1h0m1-1h0m0 1h0m1-1h0m0 1h0m1-1h0m0 1h0m1 0h0m1 0h0m0 1h0m1-2h0m0 1h0m1-1h0m0 1h0m1 0h0m1-1h0m0 1h0m1-1h0m0 1h0m1-1h0m0 1h0m1-1h0m0 1h0m1-1h0m0 1h0m1-1h0m0 1h0m1-1h0m0 1h0m1-1h0m0 1h0m1-1h0m0 1h0m1 0h0m1-1h0m0 1h0m1-1h0m0 1h0m1-1h0m0 1h0m1 0h0m0 1h0m1-2h0m0 1h0m0 1h0m1-2h0m1 1h0m1-1h0m0 1h0m1-1h0m0 1h0m1 0h0m1-1h0m0 1h0m1-1h0m0 1h0m1-1h0m0 1h0m1 0h0m0 1h0m1-2h0m0 1h0m1-1h0m0 1h0m1-1h0m0 1h0m1-1h0m0 1h0m1-1h0m0 1h0m1-1h0m0 1h0m1-1h0m0 1h0m0 1h0m1-2h0m1 0h0m0 1h0m1-1h0m0 1h0m1-1h0m0 1h0m1-1h0m1 0h0m0 1h0m1-1h0m0 1h0m1-1h0m0 1h0m1-1h0m0 1h0m1-1h0m0 1h0m1-1h0m0 1h0m1-1h0m0 1h0m1-1h0m0 1h0m1 0h0m1 0h0m0 1h0m1-2h0m0 2h0m1-2h0m0 1h0m1-1h0m0 1h0m1 0h0m1-1h0m1 1h0m0 1h0m1-2h0m0 1h0m1-1h0m0 1h0m1-1h0m0 1h0m1-1h0m0 1h0m1-1h0m0 1h0m1-1h0m0 1h0m1 0h0m1-1h0m0 1h0m1-1h0m0 1h0m1-1h0m0 1h0m1-1h0m0 1h0m1-1h0m0 1h0m1-1h0m0 1h0m1-1h0m0 1h0m1-1h0m0 1h0m1-1h0m0 1h0m1-1h0m0 1h0m1-1h0m0 1h0m1-1h0m0 1h0m1-1h0m0 1h0m1-1h0m0 1h0m1-1h0m0 1h0m1-1h0m0 1h0m1-1h0m0 1h0m1-1h0m0 1h0m1-1h0m0 1h0m1 1h0m1-2h0m0 1h0m1-1h0m0 1h0m1-1h0m0 1h0m1-1h0m0 1h0m1 0h0m1-1h0m0 1h0m1 0h0m1-1h0m0 1h0m1 0h0m1 0h0m1-1h0m0 2h0m1-2h0m0 1h0m1-1h0m1 1h0m0 1h0m1-1h0m1-1h0m0 1h0m1-1h0m0 1h0m1-1h0m0 1h0m1 0h0m0 1h0m1-1h0m1-1h0m0 1h0m1-1h0m1 0h0m0 1h0m0 1h0m1-2h0m0 1h0m1 0h0m1 0h0m0 1h0m1-2h0m0 1h0m1-1h0m0 1h0m1-1h0m0 1h0m1 0h0m1 0h0m1-1h0m0 1h0m1-1h0m1 1h0m0 1h0m1-1h0m0 1h0m1-1h0m0 1h0m1-1h0m0 1h0m1-1h0m0 1h0m1-1h0m1 0h0m0 1h0m1-1h0m1-1h0m0 1h0m1 0h0m1 0h0m0 1h0m1-1h0m1 0h0m0 1h0m1-2h0m0 1h0m1-1h0m0 1h0m1-1h0m0 1h0m1-1h0m0 1h0m1 0h0m0 1h0m1-1h0m0 1h0m1-2h0m0 1h0m1-1h0m1 0h0m0 1h0m1-1h0m0 1h0m1 0h0m1 0h0m0 1h0m1-1h0m1-1h0m0 1h0m1-1h0m0 1h0m1-1h0m0 1h0m1 0h0m1 1h0m1-2h0m0 1h0m1 0h0m1-1h0m0 1h0m1-1h0m0 1h0m1 0h0m1-1h0m0 1h0m1-1h0m0 1h0m1-1h0m0 1h0m1-1h0m0 1h0m1-1h0m0 1h0m0 1h0m1-2h0m0 1h0m1 0h0m0 1h0m1 0h0m1-2h0m0 1h0m1-1h0m0 1h0m1-1h0m1 1h0m0 1h0m1-1h0m0 1h0m1-2h0m0 1h0m1 0h0m1-1h0m0 1h0m1 0h0m1 0h0m1 0h0m1-1h0m0 1h0m1 0h0m0 1h0m1-2h0m0 2h0m1-1h0m0 1h0m1-2h0m0 1h0m1-1h0m0 1h0m1-1h0m0 1h0m1-1h0m0 1h0m1-1h0m0 1h0m1-1h0m0 1h0m1-1h0m0 1h0m1-1h0m0 1h0m1-1h0m0 1h0m1-1h0m0 1h0m1 0h0m1-1h0m0 1h0m1-1h0m0 1h0m1 0h0m1-1h0m0 1h0m1 1h0m1-2h0m1 0h0m1 0h0m0 1h0m0 1h0m1 0h0m1-2h0m0 1h0m1-1h0m1 1h0m0 1h0m1-2h0m0 1h0m1-1h0m0 1h0m1-1h0m0 1h0m1-1h0m0 1h0m1-1h0m0 1h0m1-1h0m0 1h0m1 0h0m0 1h0m1-1h0m0 1h0m1-1h0m1-1h0m0 1h0m1-1h0m0 1h0m1-1h0m0 1h0m1 1h0m1-1h0m0 1h0m1-1h0m0 1h0m1-1h0m1-1h0m1 2h0m1-1h0m0 1h0m1-1h0m0 1h0m1-2h0m1 0h0m0 1h0m1-1h0m0 1h0m1-1h0m1 0h0m0 1h0m0 1h0m1-1h0m1 0h0m0 1h0m1-2h0m1 0h0m0 1h0m1-1h0m0 1h0m1-1h0m6-1h0m1-1h0m0 1h0m0 1h0m1-2h0m0 2h0m1-2h0m0 1h0m0 1h0m1-2h0m0 2h0m1-2h0m0 1h0m0 1h0m1-2h0m0 1h0m0 1h0m1 0h0m1-2h0m0 1h0m0 1h0m1-1h0m1-2h0m0 2h0m1-2h0m1 3h0m0 1h0m0 1h0m1-4h0m0 1h0m0 3h0m1-4h0m0 1h0m0 1h0m1-2h0m0 1h0m1 0h0m0 1h0m0 1h0m1-1h0m1-2h0m0 2h0m1-3h0m0 2h0m1-1h0m0 1h0m1-1h0m0 1h0m1-1h0m1 0h0m0 2h0m1-1h0m0 1h0m0 1h0m1-2h0m1 1h0m0 1h0m1-2h0m0 2h0m1-1h0m0 1h0m1-2h0m1-1h0m0 2h0m0 1h0m1-2h0m0 2h0m1-2h0m0 2h0m1-2h0m0 1h0m0 1h0m1-3h0m0 1h0m0 1h0m1-1h0m0 1h0m0 1h0m1-2h0m0 2h0m1-2h0m0 1h0m0 1h0m1-2h0m0 2h0m1-3h0m0 2h0m1-2h0m0 1h0m0 1h0m1-2h0m0 2h0m1-2h0m0 2h0m1-2h0m0 1h0m0 1h0m1-1h0m1 0h0m0 2h0m1-2h0m0 2h0m1-2h0m0 2h0m0 1h0m1-4h0m1 0h0m0 2h0m1-2h0m0 1h0m0 1h0m1-1h0m0 1h0m1-1h0m0 1h0m0 1h0m1-2h0m0 1h0m0 1h0m1-3h0m1 2h0m0 1h0m1-2h0m0 2h0m1-1h0m0 1h0m1-2h0m0 1h0m0 1h0m1-3h0m0 1h0m0 1h0m1-1h0m1 0h0m0 1h0m0 1h0m1-2h0m0 2h0m1-2h0m1 0h0m0 1h0m0 1h0m1-2h0m0 1h0m0 1h0m1-2h0m0 1h0m0 1h0m1 0h0m1-4h0m0 1h0m0 2h0m0 1h0m1-3h0m0 1h0m0 1h0m1 1h0m0 1h0m1-3h0m0 2h0m1-2h0m0 1h0m1-1h0m0 1h0m1-1h0m0 2h0m1-2h0m0 2h0m1-2h0m0 1h0m0 1h0m1-1h0m0 1h0m1-2h0m0 1h0m0 1h0m1-2h0m0 1h0m1-1h0m0 1h0m1-1h0m0 1h0m1-2h0m0 1h0m0 1h0m1-2h0m1 0h0m0 1h0m0 1h0m0 1h0m1-1h0m0 1h0m1-2h0m1 1h0m1-2h0m0 2h0m0 1h0m1-1h0m0 1h0m1-3h0m0 2h0m1-2h0m0 2h0m1-1h0m0 1h0m1-1h0m0 2h0m1-3h0m0 1h0m1-1h0m0 1h0m0 1h0m1 0h0m1-1h0m0 1h0m1-2h0m0 1h0m0 1h0m5-2h0m0 1h0m1-1h0m0 1h0m1-1h0m0 1h0m0 1h0m1 0h0m0 1h0m1-2h0m0 1h0m1-1h0m1 0h0m0 1h0m1-1h0m0 1h0m1-1h0m0 1h0m1 0h0m0 1h0m1 0h0m1-2h0m1 0h0m0 1h0m0 1h0m1-2h0m1 0h0m0 1h0m1-1h0m0 1h0m1-1h0m0 1h0m0 1h0m1-2h0m0 1h0m0 1h0" fill="none" stroke="#000" stroke-width="3.5" stroke-linecap="round"/>
<circle cx="1260.5" cy="1000.5" r="1.6"/>
<rect x="161.2" y="762" width="5.8" height="3"/><rect x="1175.2" y="762" width="7.4" height="3"/><rect x="1279.2" y="762" width="7.1" height="3"/>
<rect x="774.7" y="839" width="3.2" height="3"/><rect x="774.7" y="877" width="3.2" height="3"/>
<rect x="916.7" y="839" width="3.2" height="3"/><rect x="916.7" y="877" width="3.2" height="3"/>
<rect x="960.7" y="839" width="3.2" height="3"/><rect x="960.7" y="877" width="3.2" height="3"/>
<g fill="#f00" fill-opacity=".35" stroke="#f00" stroke-width="1"><path d="M774.8 959.2l1.7 -3.6l1.7 3.6z"/><path d="M916.8 959.2l1.7 -3.6l1.7 3.6z"/><path d="M960.8 959.2l1.7 -3.6l1.7 3.6z"/><path d="M160.8 959.2l1.7 -3.6l1.7 3.6z"/><path d="M161.4 959.2l1.7 -3.6l1.7 3.6z"/><path d="M162.0 959.2l1.7 -3.6l1.7 3.6z"/><path d="M162.6 959.2l1.7 -3.6l1.7 3.6z"/><path d="M163.2 959.2l1.7 -3.6l1.7 3.6z"/><path d="M163.8 959.2l1.7 -3.6l1.7 3.6z"/><path d="M1174.9 959.2l1.7 -3.6l1.7 3.6z"/><path d="M1175.5 959.2l1.7 -3.6l1.7 3.6z"/><path d="M1176.1 959.2l1.7 -3.6l1.7 3.6z"/><path d="M1176.7 959.2l1.7 -3.6l1.7 3.6z"/><path d="M1177.3 959.2l1.7 -3.6l1.7 3.6z"/><path d="M1177.9 959.2l1.7 -3.6l1.7 3.6z"/><path d="M1178.5 959.2l1.7 -3.6l1.7 3.6z"/><path d="M1179.1 959.2l1.7 -3.6l1.7 3.6z"/><path d="M1278.9 959.2l1.7 -3.6l1.7 3.6z"/><path d="M1279.5 959.2l1.7 -3.6l1.7 3.6z"/><path d="M1280.1 959.2l1.7 -3.6l1.7 3.6z"/><path d="M1280.7 959.2l1.7 -3.6l1.7 3.6z"/><path d="M1281.3 959.2l1.7 -3.6l1.7 3.6z"/><path d="M1281.9 959.2l1.7 -3.6l1.7 3.6z"/><path d="M1282.5 959.2l1.7 -3.6l1.7 3.6z"/><path d="M1283.1 959.2l1.7 -3.6l1.7 3.6z"/><path d="M1283.7 959.2l1.7 -3.6l1.7 3.6z"/></g>
<g stroke="#b0b0b0" stroke-width="1.1" stroke-dasharray="1.11 1.83"><line x1="105.5" y1="763.5" x2="1485.5" y2="763.5"/><line x1="105.5" y1="802.5" x2="1485.5" y2="802.5"/><line x1="105.5" y1="840.5" x2="1485.5" y2="840.5"/><line x1="105.5" y1="878.5" x2="1485.5" y2="878.5"/><line x1="105.5" y1="916.5" x2="1485.5" y2="916.5"/><line x1="105.5" y1="957.5" x2="1485.5" y2="957.5"/><line x1="105.5" y1="983.5" x2="1485.5" y2="983.5"/><line x1="105.5" y1="1009.5" x2="1485.5" y2="1009.5"/></g>
<line x1="105.5" y1="954.5" x2="1485.5" y2="954.5" stroke="#000" stroke-width="1.1"/>
<g stroke="#800080" stroke-width="2.1" stroke-dasharray="2.08 3.441"><line x1="162.0" y1="954.05" x2="162.0" y2="725.5"/><line x1="1176.0" y1="954.05" x2="1176.0" y2="725.5"/><line x1="1279.9" y1="954.05" x2="1279.9" y2="725.5"/><line x1="1302.9" y1="954.05" x2="1302.9" y2="725.5"/><line x1="162.0" y1="1011.05" x2="162.0" y2="954.5"/><line x1="1176.0" y1="1011.05" x2="1176.0" y2="954.5"/><line x1="1279.9" y1="1011.05" x2="1279.9" y2="954.5"/><line x1="1302.9" y1="1011.05" x2="1302.9" y2="954.5"/></g>
</g>
<rect x="105.5" y="725.5" width="1380.0" height="286.0" fill="none" stroke="#000" stroke-width="1.1"/>
<line x1="162.5" y1="1011.5" x2="162.5" y2="1016.4" stroke="#000" stroke-width="1.1"/><text x="162.9" y="1031.9" text-anchor="middle">0</text><line x1="336.5" y1="1011.5" x2="336.5" y2="1016.4" stroke="#000" stroke-width="1.1"/><text x="336.9" y="1031.9" text-anchor="middle">2500</text><line x1="510.5" y1="1011.5" x2="510.5" y2="1016.4" stroke="#000" stroke-width="1.1"/><text x="510.9" y="1031.9" text-anchor="middle">5000</text><line x1="684.5" y1="1011.5" x2="684.5" y2="1016.4" stroke="#000" stroke-width="1.1"/><text x="684.9" y="1031.9" text-anchor="middle">7500</text><line x1="859.5" y1="1011.5" x2="859.5" y2="1016.4" stroke="#000" stroke-width="1.1"/><text x="859.9" y="1031.9" text-anchor="middle">10000</text><line x1="1033.5" y1="1011.5" x2="1033.5" y2="1016.4" stroke="#000" stroke-width="1.1"/><text x="1033.9" y="1031.9" text-anchor="middle">12500</text><line x1="1207.5" y1="1011.5" x2="1207.5" y2="1016.4" stroke="#000" stroke-width="1.1"/><text x="1207.9" y="1031.9" text-anchor="middle">15000</text><line x1="1381.5" y1="1011.5" x2="1381.5" y2="1016.4" stroke="#000" stroke-width="1.1"/><text x="1381.9" y="1031.9" text-anchor="middle">17500</text>
<line x1="100.6" y1="763.5" x2="105.5" y2="763.5" stroke="#000" stroke-width="1.1"/><text x="95.2" y="768.3" text-anchor="end">not Kalman</text><line x1="100.6" y1="802.5" x2="105.5" y2="802.5" stroke="#000" stroke-width="1.1"/><text x="95.2" y="806.8" text-anchor="end">not track</text><line x1="100.6" y1="840.5" x2="105.5" y2="840.5" stroke="#000" stroke-width="1.1"/><text x="95.2" y="844.8" text-anchor="end">Ion. rad.</text><line x1="100.6" y1="878.5" x2="105.5" y2="878.5" stroke="#000" stroke-width="1.1"/><text x="95.2" y="882.8" text-anchor="end">dr &gt; 5</text><line x1="100.6" y1="916.5" x2="105.5" y2="916.5" stroke="#000" stroke-width="1.1"/><text x="95.2" y="920.8" text-anchor="end">OBS not OK</text><line x1="100.6" y1="957.5" x2="105.5" y2="957.5" stroke="#000" stroke-width="1.1"/><text x="95.2" y="961.8" text-anchor="end">10</text><line x1="100.6" y1="983.5" x2="105.5" y2="983.5" stroke="#000" stroke-width="1.1"/><text x="96.6" y="987.8" text-anchor="end">5</text><line x1="100.6" y1="1009.5" x2="105.5" y2="1009.5" stroke="#000" stroke-width="1.1"/><text x="96.6" y="1013.8" text-anchor="end">0</text><line x1="102.7" y1="970.5" x2="105.5" y2="970.5" stroke="#000" stroke-width="0.9"/><line x1="102.7" y1="996.5" x2="105.5" y2="996.5" stroke="#000" stroke-width="0.9"/>
<text transform="translate(69.3 983.5) rotate(-90)" text-anchor="middle">dr</text>
</svg>
</body></html>
